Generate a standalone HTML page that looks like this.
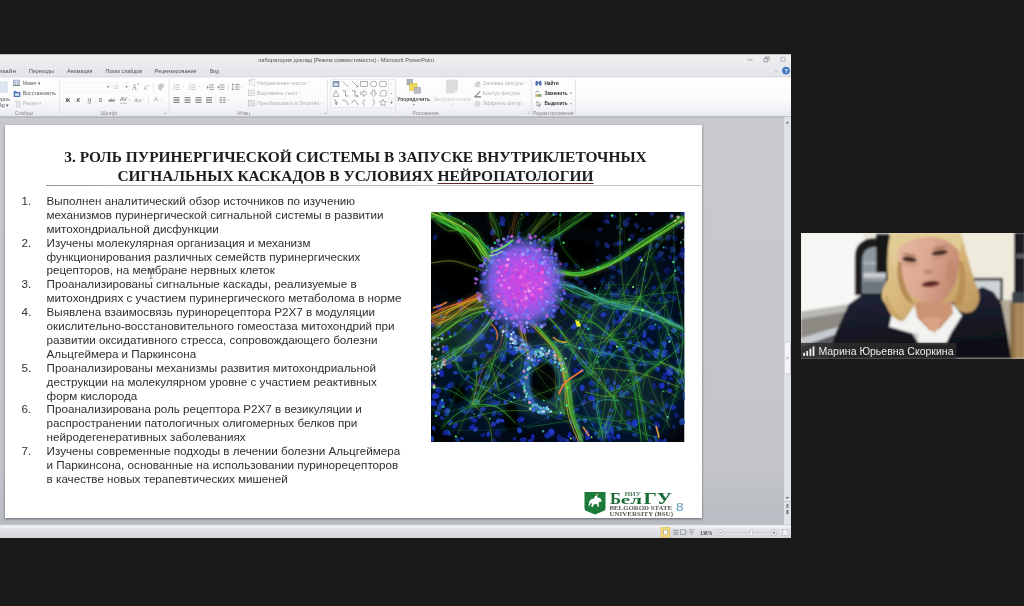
<!DOCTYPE html>
<html lang="ru"><head><meta charset="utf-8"><title>PowerPoint</title>
<style>
*{margin:0;padding:0;box-sizing:border-box}
html,body{width:1024px;height:606px;overflow:hidden;background:#1a1a1a;font-family:"Liberation Sans",sans-serif}
.abs{position:absolute}
#win{left:0;top:54px;width:791px;height:484px;background:#c4c6cc;overflow:hidden}
#work{left:0;top:71px;width:784px;height:401px;background:linear-gradient(#c8cad0,#c3c5cb 85%,#b9bcc2)}
#vscroll{left:784px;top:63px;width:7px;height:409px;background:#dfe2e8}
#slide{left:5px;top:71px;width:697px;height:392.5px;background:#fff;box-shadow:0 1px 2.5px rgba(70,70,80,.75)}
#title{left:-4.5px;top:23.4px;width:710px;text-align:center;font-family:"Liberation Serif",serif;font-weight:bold;font-size:15.45px;line-height:18.6px;color:#1c1c1c;white-space:nowrap;filter:blur(.3px)}
#title u{text-decoration-thickness:1px;text-underline-offset:1.5px;text-decoration-color:#5a2a2a}
#rule{left:41px;top:60px;width:656.5px;height:1.2px;background:linear-gradient(90deg,#999,#b5b5b5 30%,#c9c9c9)}
#list{left:15.6px;top:68.9px;font-size:11.67px;line-height:13.91px;color:#303030;white-space:nowrap;filter:blur(.3px)}
#list div{position:relative;padding-left:26px}
#list div b{position:absolute;left:1px;font-weight:normal}
</style></head><body>
<div id="win" class="abs">
<svg class="abs" id="rib" style="left:0;top:0" width="791" height="71" viewBox="0 0 791 71">
<defs><filter id="rb" x="-5%" y="-5%" width="110%" height="110%"><feGaussianBlur stdDeviation="0.35"/></filter><linearGradient id="rg" x1="0" y1="0" x2="0" y2="1"><stop offset="0" stop-color="#fefefe"/><stop offset="0.55" stop-color="#fbfbfc"/><stop offset="0.8" stop-color="#f2f3f6"/><stop offset="1" stop-color="#e5e7ec"/></linearGradient><linearGradient id="tg" x1="0" y1="0" x2="0" y2="1"><stop offset="0" stop-color="#8a8a8c"/><stop offset="0.04" stop-color="#eeeff1"/><stop offset="0.45" stop-color="#eaebed"/><stop offset="1" stop-color="#e3e4e8"/></linearGradient></defs>
<rect x="0" y="0" width="791" height="23" fill="url(#tg)"/>
<rect x="0" y="22.8" width="791" height="40" fill="url(#rg)"/>
<rect x="0" y="22.5" width="791" height="0.8" fill="#d0d2d7"/>
<rect x="0" y="62.4" width="791" height="1.4" fill="#acafb7"/>
<rect x="0" y="63.8" width="791" height="7.2" fill="#c8cad0"/>
<g filter="url(#rb)">
<text x="258.0" y="7.6" textLength="176.0" lengthAdjust="spacingAndGlyphs" font-size="5.2" fill="#555" font-weight="normal" font-style="normal" font-family="Liberation Sans, sans-serif" opacity="1">лаборатория доклад [Режим совместимости] - Microsoft PowerPoint</text>
<text x="-6.0" y="18.6" textLength="22.0" lengthAdjust="spacingAndGlyphs" font-size="5.4" fill="#505050" font-weight="normal" font-style="normal" font-family="Liberation Sans, sans-serif" opacity="1">Дизайн</text>
<text x="29.0" y="18.6" textLength="25.0" lengthAdjust="spacingAndGlyphs" font-size="5.4" fill="#505050" font-weight="normal" font-style="normal" font-family="Liberation Sans, sans-serif" opacity="1">Переходы</text>
<text x="67.0" y="18.6" textLength="25.5" lengthAdjust="spacingAndGlyphs" font-size="5.4" fill="#505050" font-weight="normal" font-style="normal" font-family="Liberation Sans, sans-serif" opacity="1">Анимация</text>
<text x="105.5" y="18.6" textLength="36.5" lengthAdjust="spacingAndGlyphs" font-size="5.4" fill="#505050" font-weight="normal" font-style="normal" font-family="Liberation Sans, sans-serif" opacity="1">Показ слайдов</text>
<text x="154.5" y="18.6" textLength="42.0" lengthAdjust="spacingAndGlyphs" font-size="5.4" fill="#505050" font-weight="normal" font-style="normal" font-family="Liberation Sans, sans-serif" opacity="1">Рецензирование</text>
<text x="210.0" y="18.6" textLength="9.0" lengthAdjust="spacingAndGlyphs" font-size="5.4" fill="#505050" font-weight="normal" font-style="normal" font-family="Liberation Sans, sans-serif" opacity="1">Вид</text>
<rect x="-2" y="28" width="9" height="10" fill="#dfe7f2" stroke="#b9c4d6" stroke-width="0.6"/>
<text x="-6.0" y="46.9" textLength="16.0" lengthAdjust="spacingAndGlyphs" font-size="5.4" fill="#555" font-weight="normal" font-style="normal" font-family="Liberation Sans, sans-serif" opacity="1">оздать</text>
<text x="-4.0" y="52.8" textLength="13.0" lengthAdjust="spacingAndGlyphs" font-size="5.4" fill="#555" font-weight="normal" font-style="normal" font-family="Liberation Sans, sans-serif" opacity="1">айд ▾</text>
<rect x="13.3" y="26" width="6.4" height="5.2" fill="#bcc7d8" stroke="#93a2ba" stroke-width="0.5"/><rect x="16.2" y="26.6" width="0.6" height="4" fill="#eef1f6"/><rect x="13" y="31.2" width="7" height="0.7" fill="#5a6068"/>
<path d="M13.7 37h2.4l.8 1h3.4v5h-6.600z" fill="#4f78b4"/><rect x="15" y="39.4" width="4" height="2.400" fill="#dfe8f4"/>
<rect x="16.4" y="47.2" width="3.900" height="6" fill="#e6e6e8" stroke="#cfcfd2" stroke-width="0.5"/><rect x="14.5" y="46.500" width="3" height="1.200" fill="#d9d9dc"/>
<text x="22.7" y="30.8" textLength="18.3" lengthAdjust="spacingAndGlyphs" font-size="5.4" fill="#5c5c5c" font-weight="normal" font-style="normal" font-family="Liberation Sans, sans-serif" opacity="1">Макет ▾</text>
<text x="22.7" y="41.2" textLength="33.3" lengthAdjust="spacingAndGlyphs" font-size="5.4" fill="#5c5c5c" font-weight="normal" font-style="normal" font-family="Liberation Sans, sans-serif" opacity="1">Восстановить</text>
<text x="22.7" y="51.3" textLength="19.3" lengthAdjust="spacingAndGlyphs" font-size="5.4" fill="#b5b5b5" font-weight="normal" font-style="normal" font-family="Liberation Sans, sans-serif" opacity="1">Раздел ▾</text>
<text x="14.8" y="60.6" textLength="18.4" lengthAdjust="spacingAndGlyphs" font-size="5.2" fill="#8a8a8a" font-weight="normal" font-style="normal" font-family="Liberation Sans, sans-serif" opacity="1">Слайды</text>
<text x="100.8" y="60.6" textLength="17.2" lengthAdjust="spacingAndGlyphs" font-size="5.2" fill="#8a8a8a" font-weight="normal" font-style="normal" font-family="Liberation Sans, sans-serif" opacity="1">Шрифт</text>
<text x="237.0" y="60.6" textLength="13.0" lengthAdjust="spacingAndGlyphs" font-size="5.2" fill="#8a8a8a" font-weight="normal" font-style="normal" font-family="Liberation Sans, sans-serif" opacity="1">Абзац</text>
<text x="412.5" y="60.6" textLength="26.5" lengthAdjust="spacingAndGlyphs" font-size="5.2" fill="#8a8a8a" font-weight="normal" font-style="normal" font-family="Liberation Sans, sans-serif" opacity="1">Рисование</text>
<text x="532.8" y="60.6" textLength="41.0" lengthAdjust="spacingAndGlyphs" font-size="5.2" fill="#8a8a8a" font-weight="normal" font-style="normal" font-family="Liberation Sans, sans-serif" opacity="1">Редактирование</text>
<rect x="59.4" y="25" width="0.7" height="35" fill="#d9dbe0"/>
<rect x="168.7" y="25" width="0.7" height="35" fill="#d9dbe0"/>
<rect x="327.3" y="25" width="0.7" height="35" fill="#d9dbe0"/>
<rect x="395.5" y="25" width="0.7" height="35" fill="#d9dbe0"/>
<rect x="530.9" y="25" width="0.7" height="35" fill="#d9dbe0"/>
<rect x="575" y="25" width="0.7" height="35" fill="#d9dbe0"/>
<rect x="64" y="28.5" width="47" height="9" fill="#fcfcfd" stroke="#ecedf0" stroke-width="0.6"/>
<rect x="112" y="28.5" width="17" height="9" fill="#fcfcfd" stroke="#ecedf0" stroke-width="0.6"/>
<path d="M107 32.3h2.4l-1.2 1.6z M125.3 32.3h2.4l-1.2 1.6z" fill="#666"/>
<text x="113.5" y="34.8" textLength="5.0" lengthAdjust="spacingAndGlyphs" font-size="5.2" fill="#c4c4c4" font-weight="normal" font-style="normal" font-family="Liberation Sans, sans-serif" opacity="1">18</text>
<text x="132.0" y="36.2" textLength="5.0" lengthAdjust="spacingAndGlyphs" font-size="7.2" fill="#8a8a8a" font-weight="normal" font-style="normal" font-family="Liberation Serif, sans-serif" opacity="1">A</text>
<text x="143.5" y="36.3" textLength="3.5" lengthAdjust="spacingAndGlyphs" font-size="5.8" fill="#9a9a9a" font-weight="normal" font-style="normal" font-family="Liberation Serif, sans-serif" opacity="1">A</text>
<path d="M137.3 30.3l1-1.3 1 1.3z M147.2 31.5l0.9 1.1 0.9-1.1z" fill="#777"/>
<rect x="153" y="29" width="0.6" height="8" fill="#dcdde2"/>
<path d="M158 31l4-2 2.5 3-3.5 4-3-2z" fill="#c9c9cc"/><path d="M158.5 34.5l3 2" stroke="#b0b0b4" stroke-width="1"/>
<text x="65.5" y="47.7" textLength="4.5" lengthAdjust="spacingAndGlyphs" font-size="5.8" fill="#444" font-weight="bold" font-style="normal" font-family="Liberation Sans, sans-serif" opacity="1">Ж</text>
<text x="76.5" y="47.7" textLength="3.5" lengthAdjust="spacingAndGlyphs" font-size="5.8" fill="#555" font-weight="bold" font-style="italic" font-family="Liberation Sans, sans-serif" opacity="1">К</text>
<text x="87.5" y="47.7" textLength="3.5" lengthAdjust="spacingAndGlyphs" font-size="5.8" fill="#555" font-weight="normal" font-style="normal" font-family="Liberation Sans, sans-serif" opacity="1">Ч</text><rect x="87.5" y="48.6" width="3.6" height="0.6" fill="#666"/>
<text x="99.0" y="47.7" textLength="3.0" lengthAdjust="spacingAndGlyphs" font-size="5.8" fill="#666" font-weight="bold" font-style="normal" font-family="Liberation Sans, sans-serif" opacity="1">S</text>
<text x="108.5" y="47.7" textLength="6.5" lengthAdjust="spacingAndGlyphs" font-size="4.8" fill="#666" font-weight="normal" font-style="normal" font-family="Liberation Sans, sans-serif" opacity="1">abc</text><rect x="108.3" y="46.3" width="7" height="0.5" fill="#777"/>
<text x="120.0" y="47.2" textLength="7.0" lengthAdjust="spacingAndGlyphs" font-size="5.2" fill="#666" font-weight="normal" font-style="normal" font-family="Liberation Sans, sans-serif" opacity="1">AV</text><path d="M120 49.3h7" stroke="#888" stroke-width="0.5"/><path d="M128.2 45.8h1.6l-.8 1z" fill="#999"/>
<text x="134.0" y="47.7" textLength="7.0" lengthAdjust="spacingAndGlyphs" font-size="5.8" fill="#888" font-weight="normal" font-style="normal" font-family="Liberation Serif, sans-serif" opacity="1">Aa</text><path d="M141.8 45.8h1.6l-.8 1z" fill="#999"/>
<rect x="148.3" y="41" width="0.6" height="8" fill="#dcdde2"/>
<text x="153.3" y="47.4" textLength="5.2" lengthAdjust="spacingAndGlyphs" font-size="7" fill="#9a9a9a" font-weight="normal" font-style="normal" font-family="Liberation Serif, sans-serif" opacity="1">A</text><path d="M161.5 45.8h1.6l-.8 1z" fill="#aaa"/>
<path d="M164 59.5h2v-2" stroke="#aaa" stroke-width="0.5" fill="none"/><path d="M324 59.5h2v-2" stroke="#aaa" stroke-width="0.5" fill="none"/><path d="M527 59.5h2v-2" stroke="#aaa" stroke-width="0.5" fill="none"/>
<rect x="175.5" y="30.5" width="4.5" height="0.8" fill="#b9b9bd"/><rect x="173.5" y="30.3" width="1.1" height="1.1" fill="#b9b9bd"/><rect x="175.5" y="32.7" width="4.5" height="0.8" fill="#b9b9bd"/><rect x="173.5" y="32.5" width="1.1" height="1.1" fill="#b9b9bd"/><rect x="175.5" y="34.9" width="4.5" height="0.8" fill="#b9b9bd"/><rect x="173.5" y="34.699999999999996" width="1.1" height="1.1" fill="#b9b9bd"/><path d="M182.5 32.6h1.6l-.8 1z" fill="#bbb"/>
<rect x="191" y="30.5" width="4.5" height="0.8" fill="#b9b9bd"/><rect x="189" y="30.3" width="1.1" height="1.1" fill="#b9b9bd"/><rect x="191" y="32.7" width="4.5" height="0.8" fill="#b9b9bd"/><rect x="189" y="32.5" width="1.1" height="1.1" fill="#b9b9bd"/><rect x="191" y="34.9" width="4.5" height="0.8" fill="#b9b9bd"/><rect x="189" y="34.699999999999996" width="1.1" height="1.1" fill="#b9b9bd"/><path d="M198 32.6h1.6l-.8 1z" fill="#bbb"/>
<rect x="209" y="30.5" width="5" height="0.8" fill="#8d8d92"/><rect x="209" y="32.7" width="5" height="0.8" fill="#8d8d92"/><rect x="209" y="34.9" width="5" height="0.8" fill="#8d8d92"/><path d="M207 31.5v3.5l1.8-1.7z" fill="#8d8d92"/>
<rect x="219.5" y="30.5" width="5" height="0.8" fill="#8d8d92"/><rect x="219.5" y="32.7" width="5" height="0.8" fill="#8d8d92"/><rect x="219.5" y="34.9" width="5" height="0.8" fill="#8d8d92"/><path d="M219 31.5v3.5l-1.8-1.7z" fill="#8d8d92"/>
<rect x="228" y="29" width="0.6" height="8" fill="#dcdde2"/>
<rect x="235" y="30.2" width="4.5" height="0.8" fill="#77777c"/><rect x="235" y="32.5" width="4.5" height="0.8" fill="#77777c"/><rect x="235" y="34.8" width="4.5" height="0.8" fill="#77777c"/><path d="M232.8 29.8v6.2M231.8 31l1-1.3 1 1.3M231.8 34.8l1 1.3 1-1.3" stroke="#77777c" stroke-width="0.6" fill="none"/><path d="M241 32.6h1.6l-.8 1z" fill="#999"/>
<rect x="173.5" y="43.2" width="6" height="0.8" fill="#6b6b70"/><rect x="173.5" y="44.800000000000004" width="6" height="0.8" fill="#6b6b70"/><rect x="173.5" y="46.400000000000006" width="6" height="0.8" fill="#6b6b70"/><rect x="173.5" y="48.0" width="6" height="0.8" fill="#6b6b70"/>
<rect x="184.5" y="43.2" width="6" height="0.8" fill="#77777c"/><rect x="184.5" y="44.800000000000004" width="6" height="0.8" fill="#77777c"/><rect x="184.5" y="46.400000000000006" width="6" height="0.8" fill="#77777c"/><rect x="184.5" y="48.0" width="6" height="0.8" fill="#77777c"/>
<rect x="195.5" y="43.2" width="6" height="0.8" fill="#77777c"/><rect x="195.5" y="44.800000000000004" width="6" height="0.8" fill="#77777c"/><rect x="195.5" y="46.400000000000006" width="6" height="0.8" fill="#77777c"/><rect x="195.5" y="48.0" width="6" height="0.8" fill="#77777c"/>
<rect x="206" y="43.2" width="6" height="0.8" fill="#77777c"/><rect x="206" y="44.800000000000004" width="6" height="0.8" fill="#77777c"/><rect x="206" y="46.400000000000006" width="6" height="0.8" fill="#77777c"/><rect x="206" y="48.0" width="6" height="0.8" fill="#77777c"/>
<rect x="215.5" y="41" width="0.6" height="8" fill="#dcdde2"/>
<rect x="219.5" y="43.2" width="2.6" height="0.8" fill="#8a8a8f"/><rect x="219.5" y="44.800000000000004" width="2.6" height="0.8" fill="#8a8a8f"/><rect x="219.5" y="46.400000000000006" width="2.6" height="0.8" fill="#8a8a8f"/><rect x="219.5" y="48.0" width="2.6" height="0.8" fill="#8a8a8f"/><rect x="223" y="43.2" width="2.6" height="0.8" fill="#8a8a8f"/><rect x="223" y="44.800000000000004" width="2.6" height="0.8" fill="#8a8a8f"/><rect x="223" y="46.400000000000006" width="2.6" height="0.8" fill="#8a8a8f"/><rect x="223" y="48.0" width="2.6" height="0.8" fill="#8a8a8f"/><path d="M227.5 45.8h1.6l-.8 1z" fill="#999"/>
<path d="M249.5 26.5v5M248 27l1.5-1.6 1.5 1.6" stroke="#c5c5c9" stroke-width="0.7" fill="none"/><rect x="251.8" y="25.5" width="3" height="6" fill="none" stroke="#c5c5c9" stroke-width="0.6"/>
<rect x="248.5" y="36" width="6" height="5.5" fill="none" stroke="#b5b5ba" stroke-width="0.6"/><rect x="249.7" y="37.6" width="3.6" height="0.6" fill="#b5b5ba"/><rect x="249.7" y="39.2" width="3.6" height="0.6" fill="#b5b5ba"/>
<rect x="248.5" y="46.5" width="6" height="5.5" fill="#e3e6e9" stroke="#b9bcc2" stroke-width="0.6"/>
<text x="257.0" y="30.7" textLength="49.0" lengthAdjust="spacingAndGlyphs" font-size="5.3" fill="#b2b2b2" font-weight="normal" font-style="normal" font-family="Liberation Sans, sans-serif" opacity="1">Направление текста</text><path d="M307.5 28h1.6l-.8 1z" fill="#c5c5c5"/>
<text x="257.0" y="40.9" textLength="41.0" lengthAdjust="spacingAndGlyphs" font-size="5.3" fill="#b2b2b2" font-weight="normal" font-style="normal" font-family="Liberation Sans, sans-serif" opacity="1">Выровнять текст</text><path d="M299.5 38.5h1.6l-.8 1z" fill="#c5c5c5"/>
<text x="257.0" y="51.2" textLength="62.5" lengthAdjust="spacingAndGlyphs" font-size="5.3" fill="#b2b2b2" font-weight="normal" font-style="normal" font-family="Liberation Sans, sans-serif" opacity="1">Преобразовать в SmartArt</text><path d="M321 49h1.6l-.8 1z" fill="#c5c5c5"/>
<rect x="331" y="25.4" width="64" height="28" fill="#fcfcfd" stroke="#dfe1e6" stroke-width="0.7"/>
<rect x="388" y="25.8" width="0.6" height="27.4" fill="#e3e5e9"/><rect x="388" y="34.7" width="7" height="0.6" fill="#e3e5e9"/><rect x="388" y="44" width="7" height="0.6" fill="#e3e5e9"/>
<rect x="333" y="27.2" width="6" height="5.6" fill="#8aa2c4" stroke="#5f7898" stroke-width="0.5"/><rect x="334" y="29.5" width="4" height="2" fill="#eef2f7"/>
<path d="M342.5 27l6 6" stroke="#808088" stroke-width="0.6"/>
<path d="M352 27l6 6m0-2v2h-2" stroke="#808088" stroke-width="0.6" fill="none"/>
<rect x="360.7" y="27.4" width="6.6" height="5.2" fill="none" stroke="#808088" stroke-width="0.6"/>
<ellipse cx="373.6" cy="30" rx="3.2" ry="2.7" fill="none" stroke="#808088" stroke-width="0.6"/>
<rect x="379.6" y="27.4" width="6.8" height="5.2" rx="1.4" fill="none" stroke="#808088" stroke-width="0.6"/>
<path d="M336 36.4l3 6h-6z" fill="none" stroke="#808088" stroke-width="0.6"/>
<path d="M342.5 36.8h3v5.2h3" fill="none" stroke="#808088" stroke-width="0.7"/>
<path d="M352 36.8h3v5.2h3m-1.3-1.3l1.3 1.3-1.3 1.3" fill="none" stroke="#808088" stroke-width="0.7"/>
<path d="M360.7 38.199999999999996h3v-1.8l3.4 3-3.4 3v-1.8h-3z" fill="none" stroke="#808088" stroke-width="0.6"/>
<path d="M372.3 36.199999999999996h2.6v3h1.8l-3.1 3.4-3.1-3.4h1.8z" fill="none" stroke="#808088" stroke-width="0.6"/>
<path d="M379.8 42.0l1.2-4.6 2-1h2l1.2 1 0 4.6z" fill="none" stroke="#8c8c92" stroke-width="0.6"/>
<path d="M334 45.7q2.6 0 2.4 3.6m-1.3-1l1.3 2.6 1.1-2.6" fill="none" stroke="#808088" stroke-width="0.8"/>
<path d="M342.3 45.9q5 0.6 6.2 5.4" fill="none" stroke="#808088" stroke-width="0.7"/>
<path d="M351.6 49.3q1.6-3.6 3-3.2t3.6 5" fill="none" stroke="#808088" stroke-width="0.7"/>
<path d="M365.2 45.3q-1.4 0-1.4 1.4t-1.3 1.8q1.3 0.4 1.3 1.8t1.4 1.4" fill="none" stroke="#808088" stroke-width="0.6"/>
<path d="M372.40000000000003 45.3q1.4 0 1.4 1.4t1.3 1.8q-1.3 0.4-1.3 1.8t-1.4 1.4" fill="none" stroke="#808088" stroke-width="0.6"/>
<path d="M383 45.2l1 2.3 2.5 0.2-1.9 1.6 0.6 2.5-2.2-1.4-2.2 1.4 0.6-2.5-1.9-1.6 2.5-0.2z" fill="none" stroke="#808088" stroke-width="0.6"/>
<path d="M390.7 30.6h1.6l-.8-1z" fill="#c8c8cc"/><path d="M390.7 39.2h1.6l-.8 1z" fill="#666"/><path d="M390.4 47h2.2M390.7 48.6h1.6l-.8 1z" stroke="#666" stroke-width="0.5" fill="#666"/>
<rect x="407" y="25.5" width="5.6" height="5.4" fill="#a9b3c0" stroke="#7d8797" stroke-width="0.5"/><rect x="409.6" y="29.4" width="7.4" height="7" fill="#ecd95a" stroke="#c7b33e" stroke-width="0.5"/><rect x="414.5" y="33.6" width="6" height="5.6" fill="#b9bcc2" stroke="#8f939b" stroke-width="0.5"/>
<text x="397.3" y="46.9" textLength="32.7" lengthAdjust="spacingAndGlyphs" font-size="5.5" fill="#4c4c4c" font-weight="bold" font-style="normal" font-family="Liberation Sans, sans-serif" opacity="1">Упорядочить</text>
<path d="M412.9 50.3h1.8l-.9 1.1z" fill="#555"/>
<path d="M446 27q0-1.5 1.5-1.5h9q1.5 0 1.5 1.5v9.5l-3.5 3h-7q-1.5 0-1.5-1.5z" fill="#dddde0"/><path d="M454.5 39.5v-3h3.5" fill="#ececee"/>
<text x="433.3" y="46.9" textLength="37.5" lengthAdjust="spacingAndGlyphs" font-size="5.4" fill="#c6c6c6" font-weight="normal" font-style="normal" font-family="Liberation Sans, sans-serif" opacity="1">Экспресс-стили</text>
<path d="M451.2 50.3h1.8l-.9 1.1z" fill="#ccc"/>
<path d="M475 30.5l3-3.5 2.6 2.6-3 3.4z" fill="#d2d2d6" stroke="#bdbdc2" stroke-width="0.5"/><rect x="474.3" y="32" width="6.4" height="1.2" fill="#d5d5d9"/>
<path d="M475 41.5l4.8-4.5 0.9 0.9-4.6 4.6z" fill="#9a9aa0"/><rect x="474.3" y="42.2" width="6.6" height="1.3" fill="#77777c"/>
<rect x="475" y="47.5" width="5" height="4.5" rx="1.2" fill="#dcdce0" stroke="#c6c6cb" stroke-width="0.5"/>
<text x="482.7" y="30.5" textLength="40.6" lengthAdjust="spacingAndGlyphs" font-size="5.3" fill="#b2b2b2" font-weight="normal" font-style="normal" font-family="Liberation Sans, sans-serif" opacity="1">Заливка фигуры</text><path d="M524.8 28.6h1.6l-.8 1z" fill="#c5c5c5"/>
<text x="482.7" y="40.7" textLength="37.3" lengthAdjust="spacingAndGlyphs" font-size="5.3" fill="#b2b2b2" font-weight="normal" font-style="normal" font-family="Liberation Sans, sans-serif" opacity="1">Контур фигуры</text><path d="M522.2 38.8h1.6l-.8 1z" fill="#c5c5c5"/>
<text x="482.7" y="51.3" textLength="39.3" lengthAdjust="spacingAndGlyphs" font-size="5.3" fill="#b2b2b2" font-weight="normal" font-style="normal" font-family="Liberation Sans, sans-serif" opacity="1">Эффекты фигур</text><path d="M524.8 49.4h1.6l-.8 1z" fill="#c5c5c5"/>
<path d="M535.5 31.5v-3.5q0-1.2 1.2-1.2t1.2 1.2v3.5z M539.1 31.5v-3.5q0-1.2 1.2-1.2t1.2 1.2v3.5z" fill="#4f6fae"/><rect x="537.6" y="28.2" width="1.8" height="1.3" fill="#3d5a92"/>
<path d="M535.5 38.5q2-2.5 4-0.5" stroke="#777" stroke-width="0.7" fill="none"/><rect x="537.5" y="40" width="4" height="2.8" fill="#8fae7a"/><rect x="535.3" y="40.5" width="2.6" height="2.2" fill="#c9a24e"/>
<path d="M537 47.2v5l1.3-1.2 1 2 0.8-0.4-1-2 1.7-0.2z" fill="#fff" stroke="#555" stroke-width="0.5"/>
<text x="544.4" y="30.6" textLength="14.4" lengthAdjust="spacingAndGlyphs" font-size="5.5" fill="#333" font-weight="bold" font-style="normal" font-family="Liberation Sans, sans-serif" opacity="1">Найти</text>
<text x="544.4" y="40.7" textLength="23.1" lengthAdjust="spacingAndGlyphs" font-size="5.5" fill="#333" font-weight="bold" font-style="normal" font-family="Liberation Sans, sans-serif" opacity="1">Заменить</text><path d="M570 38.8h1.8l-.9 1.1z" fill="#444"/>
<text x="544.4" y="51.4" textLength="23.1" lengthAdjust="spacingAndGlyphs" font-size="5.5" fill="#333" font-weight="bold" font-style="normal" font-family="Liberation Sans, sans-serif" opacity="1">Выделить</text><path d="M570 49.4h1.8l-.9 1.1z" fill="#444"/>
<rect x="747.5" y="5" width="5" height="1.6" fill="#b9bbc0"/>
<rect x="765.5" y="3" width="3.6" height="3.2" fill="none" stroke="#8e9096" stroke-width="0.8"/><rect x="764" y="4.6" width="3.6" height="3.2" fill="#ebecee" stroke="#8e9096" stroke-width="0.8"/>
<rect x="781" y="3.2" width="4" height="4" fill="none" stroke="#a9abb0" stroke-width="0.8"/>
<path d="M774.3 18l1.8-2 1.8 2z" fill="none" stroke="#b9bbc0" stroke-width="0.6"/>
<circle cx="786" cy="16.6" r="3.6" fill="#3f78c8" stroke="#2d5ea6" stroke-width="0.5"/>
<text x="784.6" y="18.7" font-size="5.6" font-weight="bold" fill="#fff" font-family="Liberation Sans, sans-serif">?</text>
</g></svg>

 <div id="work" class="abs"></div>
 <div id="vscroll" class="abs"></div>
 <div id="slide" class="abs">
  <div id="title" class="abs">3. РОЛЬ ПУРИНЕРГИЧЕСКОЙ СИСТЕМЫ В ЗАПУСКЕ ВНУТРИКЛЕТОЧНЫХ<br>СИГНАЛЬНЫХ КАСКАДОВ В УСЛОВИЯХ <u>НЕЙРОПАТОЛОГИИ</u></div>
  <div id="rule" class="abs"></div>
  <div id="list" class="abs">
   <div><b>1.</b>Выполнен аналитический обзор источников по изучению<br>механизмов пуринергической сигнальной системы в развитии<br>митохондриальной дисфункции</div>
   <div><b>2.</b>Изучены молекулярная организация и механизм<br>функционирования различных семейств пуринергических<br>рецепторов, на мембране нервных клеток</div>
   <div><b>3.</b>Проанализированы сигнальные каскады, реализуемые в<br>митохондриях с участием пуринергического метаболома в норме</div>
   <div><b>4.</b>Выявлена взаимосвязь пуринорецептора P2X7 в модуляции<br>окислительно-восстановительного гомеостаза митохондрий при<br>развитии оксидативного стресса, сопровождающего болезни<br>Альцгеймера и Паркинсона</div>
   <div><b>5.</b>Проанализированы механизмы развития митохондриальной<br>деструкции на молекулярном уровне с участием реактивных<br>форм кислорода</div>
   <div><b>6.</b>Проанализирована роль рецептора P2X7 в везикуляции и<br>распространении патологичных олигомерных белков при<br>нейродегенеративных заболеваниях</div>
   <div><b>7.</b>Изучены современные подходы в лечении болезни Альцгеймера<br>и Паркинсона, основанные на использовании пуринорецепторов<br>в качестве новых терапевтических мишеней</div>
  </div>
  <svg class="abs" style="left:142px;top:143px" width="8" height="12" viewBox="0 0 8 12"><path d="M2.4 1h1.2l.4.5.4-.5h1.2M4 1.5v8.5M2.4 10.500h1.2l.4-.5.4.5h1.200" stroke="#555" stroke-width="0.8" fill="none" opacity=".85"/></svg>
<svg class="abs" style="left:426px;top:87px" width="253.5" height="230" viewBox="0 0 253.5 230">
<defs><clipPath id="nc"><rect x="0" y="0" width="253.5" height="230"/></clipPath>
<filter id="nb1" x="-10%" y="-10%" width="120%" height="120%"><feGaussianBlur stdDeviation="0.7"/></filter>
<filter id="nb2" x="-10%" y="-10%" width="120%" height="120%"><feGaussianBlur stdDeviation="1.1"/></filter>
<filter id="nbg" x="-10%" y="-10%" width="120%" height="120%"><feGaussianBlur in="SourceGraphic" stdDeviation="2.2" result="g"/><feComponentTransfer in="g" result="g2"><feFuncA type="linear" slope="0.75"/></feComponentTransfer><feGaussianBlur in="SourceGraphic" stdDeviation="0.6" result="s"/><feMerge><feMergeNode in="g2"/><feMergeNode in="s"/></feMerge></filter>
<filter id="nb3" x="-20%" y="-20%" width="140%" height="140%"><feGaussianBlur stdDeviation="7"/></filter>
<radialGradient id="blob" cx="0.52" cy="0.5" r="0.5"><stop offset="0" stop-color="#d048e0"/><stop offset="0.45" stop-color="#b850e8"/><stop offset="0.7" stop-color="#8860e8" stop-opacity="0.95"/><stop offset="0.86" stop-color="#5868d8" stop-opacity="0.6"/><stop offset="1" stop-color="#4050c0" stop-opacity="0"/></radialGradient>
</defs>
<g clip-path="url(#nc)">
<rect width="253.5" height="230" fill="#020508"/>
<g filter="url(#nb3)"><ellipse cx="195" cy="160" rx="70" ry="80" fill="#0c2878" opacity="0.3"/><ellipse cx="55" cy="175" rx="60" ry="55" fill="#0c2c70" opacity="0.28"/><ellipse cx="215" cy="75" rx="45" ry="40" fill="#0a2268" opacity="0.22"/><ellipse cx="135" cy="115" rx="50" ry="35" fill="#144068" opacity="0.3"/><ellipse cx="20" cy="125" rx="30" ry="30" fill="#205030" opacity="0.45"/><ellipse cx="140" cy="215" rx="40" ry="20" fill="#0c2878" opacity="0.22"/><ellipse cx="112" cy="168" rx="28" ry="36" fill="#3070b0" opacity="0.4"/><ellipse cx="60" cy="120" rx="30" ry="25" fill="#305090" opacity="0.35"/><ellipse cx="190" cy="185" rx="40" ry="30" fill="#104838" opacity="0.3"/></g>
<g filter="url(#nb2)"><ellipse cx="26" cy="50" rx="25.5" ry="34.0" fill="#010204" opacity="0.9"/><ellipse cx="146" cy="40" rx="18.7" ry="11.9" fill="#010204" opacity="0.9"/><ellipse cx="113" cy="170" rx="12.8" ry="19.6" fill="#010204" opacity="0.9"/><ellipse cx="80" cy="206" rx="7.6" ry="14.4" fill="#010204" opacity="0.9"/><ellipse cx="27" cy="182" rx="7.6" ry="8.5" fill="#010204" opacity="0.9"/><ellipse cx="118" cy="10" rx="18.7" ry="7.6" fill="#010204" opacity="0.9"/><ellipse cx="160" cy="12" rx="10.2" ry="6.0" fill="#010204" opacity="0.9"/></g>
<g filter="url(#nb1)"><ellipse cx="135.8" cy="84.1" rx="2.1" ry="1.5" transform="rotate(91 135.8 84.1)" fill="#2034d8" opacity="0.29"/><ellipse cx="61.0" cy="126.7" rx="2.1" ry="1.6" transform="rotate(102 61.0 126.7)" fill="#1828c0" opacity="0.70"/><ellipse cx="15.7" cy="134.7" rx="2.1" ry="1.4" transform="rotate(40 15.7 134.7)" fill="#3050f0" opacity="0.79"/><ellipse cx="78.2" cy="187.7" rx="2.3" ry="1.5" transform="rotate(105 78.2 187.7)" fill="#1c3cc8" opacity="0.53"/><ellipse cx="180.5" cy="129.8" rx="3.1" ry="2.1" transform="rotate(89 180.5 129.8)" fill="#3050f0" opacity="0.62"/><ellipse cx="148.4" cy="104.2" rx="2.5" ry="1.6" transform="rotate(143 148.4 104.2)" fill="#1c3cc8" opacity="0.76"/><ellipse cx="76.1" cy="113.9" rx="2.6" ry="1.6" transform="rotate(81 76.1 113.9)" fill="#3050f0" opacity="0.84"/><ellipse cx="38.5" cy="112.5" rx="2.1" ry="1.7" transform="rotate(120 38.5 112.5)" fill="#2048b0" opacity="0.67"/><ellipse cx="207.5" cy="78.2" rx="2.6" ry="2.2" transform="rotate(89 207.5 78.2)" fill="#2048b0" opacity="0.38"/><ellipse cx="239.5" cy="109.0" rx="3.1" ry="2.4" transform="rotate(11 239.5 109.0)" fill="#1c3cc8" opacity="0.57"/><ellipse cx="172.7" cy="102.5" rx="3.2" ry="2.4" transform="rotate(160 172.7 102.5)" fill="#2840e0" opacity="0.46"/><ellipse cx="14.9" cy="176.7" rx="2.2" ry="1.7" transform="rotate(45 14.9 176.7)" fill="#1c30b8" opacity="0.82"/><ellipse cx="179.1" cy="226.9" rx="3.2" ry="2.1" transform="rotate(68 179.1 226.9)" fill="#1828c0" opacity="0.51"/><ellipse cx="149.3" cy="60.4" rx="2.0" ry="1.4" transform="rotate(75 149.3 60.4)" fill="#2840e0" opacity="0.42"/><ellipse cx="31.8" cy="197.6" rx="3.6" ry="3.1" transform="rotate(118 31.8 197.6)" fill="#1c3cc8" opacity="0.47"/><ellipse cx="197.7" cy="201.1" rx="3.4" ry="2.5" transform="rotate(71 197.7 201.1)" fill="#1c30b8" opacity="0.61"/><ellipse cx="249.6" cy="101.3" rx="2.2" ry="1.4" transform="rotate(108 249.6 101.3)" fill="#2034d8" opacity="0.45"/><ellipse cx="6.5" cy="201.1" rx="3.0" ry="2.4" transform="rotate(27 6.5 201.1)" fill="#2840e0" opacity="0.83"/><ellipse cx="120.2" cy="26.5" rx="2.8" ry="1.8" transform="rotate(176 120.2 26.5)" fill="#1c30b8" opacity="0.64"/><ellipse cx="67.1" cy="190.6" rx="2.3" ry="1.8" transform="rotate(4 67.1 190.6)" fill="#3050f0" opacity="0.59"/><ellipse cx="231.7" cy="174.4" rx="2.5" ry="1.7" transform="rotate(116 231.7 174.4)" fill="#2034d8" opacity="0.73"/><ellipse cx="195.7" cy="122.5" rx="3.3" ry="2.8" transform="rotate(59 195.7 122.5)" fill="#1828c0" opacity="0.70"/><ellipse cx="192.2" cy="44.9" rx="2.4" ry="1.8" transform="rotate(72 192.2 44.9)" fill="#2048b0" opacity="0.32"/><ellipse cx="175.6" cy="220.0" rx="2.8" ry="2.0" transform="rotate(169 175.6 220.0)" fill="#2840e0" opacity="0.83"/><ellipse cx="51.8" cy="143.5" rx="3.5" ry="2.5" transform="rotate(151 51.8 143.5)" fill="#1c30b8" opacity="0.81"/><ellipse cx="163.0" cy="192.0" rx="2.2" ry="1.6" transform="rotate(70 163.0 192.0)" fill="#1c3cc8" opacity="0.75"/><ellipse cx="45.3" cy="181.5" rx="2.6" ry="1.8" transform="rotate(144 45.3 181.5)" fill="#1c3cc8" opacity="0.61"/><ellipse cx="240.0" cy="166.7" rx="2.3" ry="1.7" transform="rotate(23 240.0 166.7)" fill="#1828c0" opacity="0.69"/><ellipse cx="166.3" cy="140.7" rx="3.0" ry="2.3" transform="rotate(85 166.3 140.7)" fill="#2840e0" opacity="0.51"/><ellipse cx="5.4" cy="183.9" rx="3.2" ry="2.4" transform="rotate(18 5.4 183.9)" fill="#1c3cc8" opacity="0.82"/><ellipse cx="221.0" cy="190.0" rx="2.4" ry="2.0" transform="rotate(45 221.0 190.0)" fill="#2840e0" opacity="0.65"/><ellipse cx="82.6" cy="125.2" rx="3.4" ry="2.5" transform="rotate(11 82.6 125.2)" fill="#1c3cc8" opacity="0.59"/><ellipse cx="147.9" cy="208.0" rx="2.7" ry="1.8" transform="rotate(165 147.9 208.0)" fill="#3050f0" opacity="0.50"/><ellipse cx="129.4" cy="200.7" rx="3.3" ry="2.2" transform="rotate(110 129.4 200.7)" fill="#2048b0" opacity="0.77"/><ellipse cx="141.1" cy="75.0" rx="2.9" ry="2.5" transform="rotate(100 141.1 75.0)" fill="#2048b0" opacity="0.46"/><ellipse cx="246.7" cy="139.4" rx="2.3" ry="1.7" transform="rotate(50 246.7 139.4)" fill="#3050f0" opacity="0.66"/><ellipse cx="238.7" cy="160.8" rx="3.5" ry="3.0" transform="rotate(170 238.7 160.8)" fill="#2840e0" opacity="0.82"/><ellipse cx="51.4" cy="102.9" rx="2.7" ry="1.8" transform="rotate(71 51.4 102.9)" fill="#2840e0" opacity="0.48"/><ellipse cx="18.5" cy="154.0" rx="3.3" ry="2.6" transform="rotate(161 18.5 154.0)" fill="#1828c0" opacity="0.83"/><ellipse cx="34.8" cy="107.6" rx="3.3" ry="2.6" transform="rotate(17 34.8 107.6)" fill="#1c30b8" opacity="0.52"/><ellipse cx="56.7" cy="162.5" rx="3.7" ry="2.6" transform="rotate(73 56.7 162.5)" fill="#1c30b8" opacity="0.53"/><ellipse cx="183.1" cy="4.5" rx="2.7" ry="1.9" transform="rotate(3 183.1 4.5)" fill="#2840e0" opacity="0.39"/><ellipse cx="243.6" cy="26.0" rx="3.6" ry="2.4" transform="rotate(41 243.6 26.0)" fill="#2034d8" opacity="0.29"/><ellipse cx="229.6" cy="41.8" rx="3.3" ry="2.8" transform="rotate(148 229.6 41.8)" fill="#2048b0" opacity="0.49"/><ellipse cx="233.0" cy="131.2" rx="3.2" ry="2.1" transform="rotate(16 233.0 131.2)" fill="#2034d8" opacity="0.77"/><ellipse cx="227.0" cy="61.9" rx="2.0" ry="1.7" transform="rotate(16 227.0 61.9)" fill="#2840e0" opacity="0.29"/><ellipse cx="16.9" cy="198.4" rx="2.8" ry="2.4" transform="rotate(61 16.9 198.4)" fill="#3050f0" opacity="0.62"/><ellipse cx="179.9" cy="215.8" rx="3.6" ry="2.5" transform="rotate(47 179.9 215.8)" fill="#1828c0" opacity="0.53"/><ellipse cx="77.3" cy="174.7" rx="2.5" ry="2.1" transform="rotate(90 77.3 174.7)" fill="#1828c0" opacity="0.56"/><ellipse cx="128.2" cy="225.0" rx="2.9" ry="2.4" transform="rotate(44 128.2 225.0)" fill="#1c30b8" opacity="0.49"/><ellipse cx="109.6" cy="113.9" rx="3.4" ry="2.3" transform="rotate(71 109.6 113.9)" fill="#3050f0" opacity="0.57"/><ellipse cx="184.8" cy="32.1" rx="3.7" ry="2.3" transform="rotate(177 184.8 32.1)" fill="#2048b0" opacity="0.30"/><ellipse cx="187.8" cy="58.8" rx="2.3" ry="1.7" transform="rotate(15 187.8 58.8)" fill="#2048b0" opacity="0.36"/><ellipse cx="246.1" cy="137.7" rx="3.2" ry="2.3" transform="rotate(8 246.1 137.7)" fill="#1828c0" opacity="0.51"/><ellipse cx="66.7" cy="221.2" rx="3.7" ry="3.2" transform="rotate(98 66.7 221.2)" fill="#1828c0" opacity="0.46"/><ellipse cx="166.3" cy="57.1" rx="3.3" ry="2.4" transform="rotate(16 166.3 57.1)" fill="#2048b0" opacity="0.29"/><ellipse cx="59.0" cy="134.7" rx="2.9" ry="2.4" transform="rotate(135 59.0 134.7)" fill="#1c3cc8" opacity="0.81"/><ellipse cx="151.2" cy="175.8" rx="3.2" ry="2.6" transform="rotate(89 151.2 175.8)" fill="#2840e0" opacity="0.74"/><ellipse cx="11.1" cy="192.1" rx="3.5" ry="2.6" transform="rotate(113 11.1 192.1)" fill="#1c3cc8" opacity="0.73"/><ellipse cx="230.7" cy="173.2" rx="3.0" ry="2.3" transform="rotate(146 230.7 173.2)" fill="#2034d8" opacity="0.78"/><ellipse cx="226.3" cy="157.1" rx="3.2" ry="2.5" transform="rotate(41 226.3 157.1)" fill="#2034d8" opacity="0.47"/><ellipse cx="243.2" cy="86.6" rx="2.8" ry="2.2" transform="rotate(9 243.2 86.6)" fill="#2034d8" opacity="0.42"/><ellipse cx="124.0" cy="0.8" rx="3.3" ry="2.5" transform="rotate(91 124.0 0.8)" fill="#3050f0" opacity="0.49"/><ellipse cx="189.0" cy="109.0" rx="3.4" ry="2.2" transform="rotate(152 189.0 109.0)" fill="#1828c0" opacity="0.74"/><ellipse cx="187.5" cy="224.4" rx="2.8" ry="1.9" transform="rotate(69 187.5 224.4)" fill="#1c30b8" opacity="0.81"/><ellipse cx="11.9" cy="145.5" rx="2.3" ry="1.9" transform="rotate(108 11.9 145.5)" fill="#2840e0" opacity="0.55"/><ellipse cx="77.2" cy="130.6" rx="2.0" ry="1.3" transform="rotate(11 77.2 130.6)" fill="#2840e0" opacity="0.84"/><ellipse cx="55.2" cy="112.6" rx="3.2" ry="2.0" transform="rotate(51 55.2 112.6)" fill="#1c30b8" opacity="0.64"/><ellipse cx="226.5" cy="45.8" rx="3.7" ry="2.3" transform="rotate(169 226.5 45.8)" fill="#2034d8" opacity="0.34"/><ellipse cx="128.4" cy="228.8" rx="3.7" ry="2.3" transform="rotate(70 128.4 228.8)" fill="#1828c0" opacity="0.48"/><ellipse cx="189.5" cy="60.2" rx="2.6" ry="2.3" transform="rotate(109 189.5 60.2)" fill="#1c3cc8" opacity="0.39"/><ellipse cx="178.3" cy="53.2" rx="3.5" ry="3.1" transform="rotate(88 178.3 53.2)" fill="#2034d8" opacity="0.31"/><ellipse cx="172.8" cy="93.2" rx="3.2" ry="2.8" transform="rotate(75 172.8 93.2)" fill="#1c30b8" opacity="0.35"/><ellipse cx="0.4" cy="172.7" rx="3.4" ry="3.0" transform="rotate(22 0.4 172.7)" fill="#1828c0" opacity="0.74"/><ellipse cx="99.6" cy="229.7" rx="3.0" ry="2.6" transform="rotate(65 99.6 229.7)" fill="#1c30b8" opacity="0.75"/><ellipse cx="71.1" cy="11.9" rx="3.1" ry="2.1" transform="rotate(27 71.1 11.9)" fill="#2840e0" opacity="0.62"/><ellipse cx="196.0" cy="180.6" rx="2.7" ry="2.4" transform="rotate(5 196.0 180.6)" fill="#2048b0" opacity="0.70"/><ellipse cx="238.5" cy="126.3" rx="3.2" ry="2.5" transform="rotate(9 238.5 126.3)" fill="#1c3cc8" opacity="0.61"/><ellipse cx="35.1" cy="200.0" rx="2.8" ry="2.1" transform="rotate(164 35.1 200.0)" fill="#3050f0" opacity="0.50"/><ellipse cx="187.3" cy="224.5" rx="2.4" ry="2.0" transform="rotate(118 187.3 224.5)" fill="#2840e0" opacity="0.64"/><ellipse cx="30.4" cy="147.9" rx="2.1" ry="1.4" transform="rotate(90 30.4 147.9)" fill="#2048b0" opacity="0.65"/><ellipse cx="229.7" cy="229.2" rx="2.8" ry="1.8" transform="rotate(25 229.7 229.2)" fill="#1828c0" opacity="0.55"/><ellipse cx="140.9" cy="73.4" rx="2.6" ry="2.2" transform="rotate(146 140.9 73.4)" fill="#1828c0" opacity="0.48"/><ellipse cx="132.9" cy="86.7" rx="2.6" ry="1.8" transform="rotate(11 132.9 86.7)" fill="#2840e0" opacity="0.41"/><ellipse cx="174.1" cy="121.7" rx="3.3" ry="2.3" transform="rotate(153 174.1 121.7)" fill="#2034d8" opacity="0.56"/><ellipse cx="241.8" cy="195.2" rx="3.5" ry="2.9" transform="rotate(4 241.8 195.2)" fill="#2034d8" opacity="0.62"/><ellipse cx="203.9" cy="222.7" rx="2.8" ry="2.1" transform="rotate(13 203.9 222.7)" fill="#2048b0" opacity="0.66"/><ellipse cx="56.7" cy="35.0" rx="2.2" ry="1.8" transform="rotate(149 56.7 35.0)" fill="#1c3cc8" opacity="0.71"/><ellipse cx="115.9" cy="126.8" rx="2.1" ry="1.3" transform="rotate(141 115.9 126.8)" fill="#1828c0" opacity="0.68"/><ellipse cx="181.3" cy="221.4" rx="3.1" ry="1.9" transform="rotate(95 181.3 221.4)" fill="#1c30b8" opacity="0.73"/><ellipse cx="17.8" cy="120.6" rx="3.0" ry="1.8" transform="rotate(70 17.8 120.6)" fill="#1828c0" opacity="0.77"/><ellipse cx="136.3" cy="229.2" rx="2.5" ry="1.8" transform="rotate(57 136.3 229.2)" fill="#2048b0" opacity="0.80"/><ellipse cx="178.6" cy="70.7" rx="2.0" ry="1.3" transform="rotate(90 178.6 70.7)" fill="#1c3cc8" opacity="0.43"/><ellipse cx="182.1" cy="83.3" rx="2.7" ry="2.0" transform="rotate(1 182.1 83.3)" fill="#2840e0" opacity="0.45"/><ellipse cx="52.0" cy="223.1" rx="2.5" ry="1.7" transform="rotate(148 52.0 223.1)" fill="#1828c0" opacity="0.64"/><ellipse cx="225.4" cy="25.1" rx="3.1" ry="2.7" transform="rotate(110 225.4 25.1)" fill="#1828c0" opacity="0.39"/><ellipse cx="14.3" cy="136.8" rx="3.6" ry="2.3" transform="rotate(10 14.3 136.8)" fill="#2034d8" opacity="0.84"/><ellipse cx="227.7" cy="203.2" rx="3.2" ry="2.1" transform="rotate(180 227.7 203.2)" fill="#1828c0" opacity="0.58"/><ellipse cx="237.2" cy="171.7" rx="2.1" ry="1.8" transform="rotate(120 237.2 171.7)" fill="#1c30b8" opacity="0.79"/><ellipse cx="112.2" cy="25.1" rx="2.1" ry="1.4" transform="rotate(15 112.2 25.1)" fill="#1c30b8" opacity="0.83"/><ellipse cx="244.4" cy="47.7" rx="2.6" ry="1.6" transform="rotate(148 244.4 47.7)" fill="#2048b0" opacity="0.46"/><ellipse cx="178.8" cy="45.0" rx="2.9" ry="2.5" transform="rotate(80 178.8 45.0)" fill="#2840e0" opacity="0.36"/><ellipse cx="7.7" cy="94.5" rx="3.3" ry="2.8" transform="rotate(7 7.7 94.5)" fill="#2034d8" opacity="0.64"/><ellipse cx="15.9" cy="139.3" rx="2.6" ry="2.2" transform="rotate(60 15.9 139.3)" fill="#3050f0" opacity="0.47"/><ellipse cx="174.8" cy="212.6" rx="2.5" ry="2.0" transform="rotate(130 174.8 212.6)" fill="#3050f0" opacity="0.82"/><ellipse cx="120.5" cy="220.1" rx="3.6" ry="3.1" transform="rotate(70 120.5 220.1)" fill="#2840e0" opacity="0.82"/><ellipse cx="33.6" cy="114.2" rx="2.0" ry="1.7" transform="rotate(168 33.6 114.2)" fill="#2840e0" opacity="0.78"/><ellipse cx="153.9" cy="75.4" rx="2.5" ry="1.9" transform="rotate(65 153.9 75.4)" fill="#2048b0" opacity="0.41"/><ellipse cx="103.4" cy="149.4" rx="2.8" ry="2.4" transform="rotate(98 103.4 149.4)" fill="#1828c0" opacity="0.84"/><ellipse cx="250.4" cy="60.9" rx="2.1" ry="1.9" transform="rotate(17 250.4 60.9)" fill="#1c30b8" opacity="0.51"/><ellipse cx="116.8" cy="205.0" rx="2.4" ry="1.5" transform="rotate(97 116.8 205.0)" fill="#2048b0" opacity="0.72"/><ellipse cx="213.2" cy="67.6" rx="3.0" ry="2.2" transform="rotate(67 213.2 67.6)" fill="#1c3cc8" opacity="0.33"/><ellipse cx="71.3" cy="208.7" rx="2.3" ry="1.7" transform="rotate(12 71.3 208.7)" fill="#2840e0" opacity="0.85"/><ellipse cx="58.7" cy="185.9" rx="3.1" ry="2.7" transform="rotate(178 58.7 185.9)" fill="#2034d8" opacity="0.45"/><ellipse cx="58.6" cy="103.1" rx="2.6" ry="1.7" transform="rotate(158 58.6 103.1)" fill="#1828c0" opacity="0.50"/><ellipse cx="246.6" cy="134.1" rx="3.6" ry="2.8" transform="rotate(67 246.6 134.1)" fill="#2048b0" opacity="0.52"/><ellipse cx="196.5" cy="152.9" rx="2.0" ry="1.3" transform="rotate(115 196.5 152.9)" fill="#1c3cc8" opacity="0.70"/><ellipse cx="152.0" cy="149.9" rx="2.3" ry="1.7" transform="rotate(2 152.0 149.9)" fill="#2840e0" opacity="0.61"/><ellipse cx="8.0" cy="114.0" rx="2.8" ry="2.2" transform="rotate(73 8.0 114.0)" fill="#2048b0" opacity="0.61"/><ellipse cx="176.3" cy="94.3" rx="2.5" ry="1.9" transform="rotate(55 176.3 94.3)" fill="#2034d8" opacity="0.34"/><ellipse cx="219.1" cy="229.2" rx="2.6" ry="2.3" transform="rotate(35 219.1 229.2)" fill="#1c3cc8" opacity="0.61"/><ellipse cx="146.5" cy="83.9" rx="3.3" ry="2.6" transform="rotate(23 146.5 83.9)" fill="#2034d8" opacity="0.40"/><ellipse cx="230.6" cy="20.5" rx="2.6" ry="1.7" transform="rotate(91 230.6 20.5)" fill="#1828c0" opacity="0.35"/><ellipse cx="191.0" cy="182.2" rx="3.4" ry="3.0" transform="rotate(54 191.0 182.2)" fill="#2048b0" opacity="0.83"/><ellipse cx="234.8" cy="89.2" rx="3.5" ry="2.8" transform="rotate(112 234.8 89.2)" fill="#2048b0" opacity="0.48"/><ellipse cx="217.1" cy="142.8" rx="3.0" ry="2.0" transform="rotate(35 217.1 142.8)" fill="#1c30b8" opacity="0.52"/><ellipse cx="101.3" cy="119.1" rx="2.7" ry="2.2" transform="rotate(22 101.3 119.1)" fill="#1828c0" opacity="0.84"/><ellipse cx="48.8" cy="203.3" rx="3.4" ry="2.2" transform="rotate(121 48.8 203.3)" fill="#1c3cc8" opacity="0.79"/><ellipse cx="152.0" cy="126.5" rx="3.1" ry="2.1" transform="rotate(55 152.0 126.5)" fill="#1c30b8" opacity="0.57"/><ellipse cx="0.9" cy="226.8" rx="2.8" ry="2.1" transform="rotate(80 0.9 226.8)" fill="#3050f0" opacity="0.76"/><ellipse cx="45.5" cy="108.8" rx="2.2" ry="1.8" transform="rotate(23 45.5 108.8)" fill="#1c30b8" opacity="0.60"/><ellipse cx="127.9" cy="151.1" rx="2.1" ry="1.7" transform="rotate(23 127.9 151.1)" fill="#1c3cc8" opacity="0.58"/><ellipse cx="20.3" cy="173.0" rx="3.5" ry="3.0" transform="rotate(117 20.3 173.0)" fill="#2048b0" opacity="0.50"/><ellipse cx="252.5" cy="168.4" rx="3.4" ry="2.9" transform="rotate(35 252.5 168.4)" fill="#1c30b8" opacity="0.57"/><ellipse cx="201.5" cy="157.8" rx="3.2" ry="2.7" transform="rotate(40 201.5 157.8)" fill="#2048b0" opacity="0.59"/><ellipse cx="40.2" cy="206.2" rx="2.5" ry="2.2" transform="rotate(147 40.2 206.2)" fill="#1828c0" opacity="0.55"/><ellipse cx="121.7" cy="136.1" rx="3.0" ry="2.0" transform="rotate(43 121.7 136.1)" fill="#2840e0" opacity="0.46"/><ellipse cx="40.9" cy="215.4" rx="3.2" ry="2.1" transform="rotate(161 40.9 215.4)" fill="#1828c0" opacity="0.77"/><ellipse cx="194.8" cy="11.2" rx="3.6" ry="3.1" transform="rotate(82 194.8 11.2)" fill="#3050f0" opacity="0.41"/><ellipse cx="26.5" cy="228.4" rx="3.1" ry="2.2" transform="rotate(71 26.5 228.4)" fill="#2048b0" opacity="0.60"/><ellipse cx="156.0" cy="220.3" rx="2.5" ry="2.2" transform="rotate(93 156.0 220.3)" fill="#2840e0" opacity="0.71"/><ellipse cx="148.5" cy="152.7" rx="2.5" ry="1.7" transform="rotate(0 148.5 152.7)" fill="#2034d8" opacity="0.54"/><ellipse cx="158.6" cy="96.1" rx="2.6" ry="2.1" transform="rotate(9 158.6 96.1)" fill="#1c30b8" opacity="0.54"/><ellipse cx="56.8" cy="134.2" rx="3.0" ry="1.9" transform="rotate(37 56.8 134.2)" fill="#3050f0" opacity="0.78"/><ellipse cx="3.6" cy="184.3" rx="3.2" ry="2.8" transform="rotate(81 3.6 184.3)" fill="#2034d8" opacity="0.71"/><ellipse cx="198.3" cy="92.4" rx="2.4" ry="2.1" transform="rotate(2 198.3 92.4)" fill="#1c3cc8" opacity="0.47"/><ellipse cx="150.8" cy="133.0" rx="3.0" ry="2.6" transform="rotate(93 150.8 133.0)" fill="#1c30b8" opacity="0.55"/><ellipse cx="11.2" cy="122.3" rx="2.7" ry="1.7" transform="rotate(43 11.2 122.3)" fill="#2034d8" opacity="0.81"/><ellipse cx="155.3" cy="151.1" rx="2.3" ry="1.8" transform="rotate(74 155.3 151.1)" fill="#3050f0" opacity="0.69"/><ellipse cx="162.6" cy="187.1" rx="2.3" ry="2.1" transform="rotate(56 162.6 187.1)" fill="#2840e0" opacity="0.70"/><ellipse cx="183.6" cy="109.9" rx="2.9" ry="2.2" transform="rotate(68 183.6 109.9)" fill="#1c30b8" opacity="0.75"/><ellipse cx="188.0" cy="104.1" rx="2.4" ry="1.5" transform="rotate(19 188.0 104.1)" fill="#1828c0" opacity="0.71"/><ellipse cx="225.9" cy="212.8" rx="3.6" ry="2.8" transform="rotate(47 225.9 212.8)" fill="#2034d8" opacity="0.56"/><ellipse cx="132.6" cy="61.0" rx="3.1" ry="2.3" transform="rotate(174 132.6 61.0)" fill="#1828c0" opacity="0.29"/><ellipse cx="43.0" cy="208.1" rx="3.4" ry="2.4" transform="rotate(36 43.0 208.1)" fill="#1828c0" opacity="0.75"/><ellipse cx="223.1" cy="75.6" rx="2.4" ry="2.2" transform="rotate(163 223.1 75.6)" fill="#1c3cc8" opacity="0.49"/><ellipse cx="213.3" cy="123.4" rx="2.8" ry="2.0" transform="rotate(96 213.3 123.4)" fill="#2034d8" opacity="0.79"/><ellipse cx="183.7" cy="131.2" rx="2.5" ry="1.9" transform="rotate(38 183.7 131.2)" fill="#3050f0" opacity="0.68"/><ellipse cx="247.8" cy="161.2" rx="2.1" ry="1.7" transform="rotate(25 247.8 161.2)" fill="#1c3cc8" opacity="0.70"/><ellipse cx="186.8" cy="15.1" rx="2.6" ry="2.1" transform="rotate(147 186.8 15.1)" fill="#2048b0" opacity="0.40"/><ellipse cx="223.0" cy="173.8" rx="3.2" ry="2.0" transform="rotate(69 223.0 173.8)" fill="#1828c0" opacity="0.53"/><ellipse cx="8.7" cy="195.0" rx="3.4" ry="2.7" transform="rotate(114 8.7 195.0)" fill="#2048b0" opacity="0.75"/><ellipse cx="120.9" cy="30.5" rx="3.3" ry="2.4" transform="rotate(116 120.9 30.5)" fill="#2840e0" opacity="0.58"/><ellipse cx="71.6" cy="164.6" rx="2.6" ry="2.2" transform="rotate(58 71.6 164.6)" fill="#3050f0" opacity="0.65"/><ellipse cx="196.0" cy="79.8" rx="3.2" ry="2.7" transform="rotate(97 196.0 79.8)" fill="#1828c0" opacity="0.44"/><ellipse cx="145.6" cy="66.0" rx="2.7" ry="2.4" transform="rotate(94 145.6 66.0)" fill="#2840e0" opacity="0.45"/><ellipse cx="1.1" cy="112.9" rx="2.8" ry="2.2" transform="rotate(143 1.1 112.9)" fill="#1828c0" opacity="0.84"/><ellipse cx="242.7" cy="118.5" rx="3.0" ry="2.4" transform="rotate(29 242.7 118.5)" fill="#2048b0" opacity="0.54"/><ellipse cx="126.3" cy="25.3" rx="3.1" ry="2.4" transform="rotate(15 126.3 25.3)" fill="#2048b0" opacity="0.51"/><ellipse cx="24.1" cy="213.6" rx="3.5" ry="2.1" transform="rotate(134 24.1 213.6)" fill="#1c30b8" opacity="0.81"/><ellipse cx="228.5" cy="115.3" rx="2.6" ry="1.7" transform="rotate(159 228.5 115.3)" fill="#1828c0" opacity="0.83"/><ellipse cx="150.6" cy="158.5" rx="3.0" ry="2.0" transform="rotate(6 150.6 158.5)" fill="#3050f0" opacity="0.58"/><ellipse cx="213.7" cy="152.3" rx="3.3" ry="2.2" transform="rotate(31 213.7 152.3)" fill="#1c30b8" opacity="0.73"/><ellipse cx="176.6" cy="116.8" rx="2.5" ry="1.6" transform="rotate(136 176.6 116.8)" fill="#2048b0" opacity="0.79"/><ellipse cx="82.8" cy="120.1" rx="2.3" ry="2.0" transform="rotate(59 82.8 120.1)" fill="#1828c0" opacity="0.55"/><ellipse cx="252.2" cy="37.9" rx="3.1" ry="2.6" transform="rotate(35 252.2 37.9)" fill="#1828c0" opacity="0.51"/><ellipse cx="185.9" cy="100.0" rx="2.3" ry="2.0" transform="rotate(115 185.9 100.0)" fill="#2034d8" opacity="0.56"/><ellipse cx="216.6" cy="100.4" rx="2.4" ry="1.5" transform="rotate(177 216.6 100.4)" fill="#2840e0" opacity="0.64"/><ellipse cx="153.0" cy="93.1" rx="3.3" ry="2.5" transform="rotate(163 153.0 93.1)" fill="#1c30b8" opacity="0.44"/><ellipse cx="164.1" cy="194.6" rx="3.1" ry="2.4" transform="rotate(117 164.1 194.6)" fill="#2048b0" opacity="0.71"/><ellipse cx="177.6" cy="205.8" rx="2.4" ry="1.6" transform="rotate(72 177.6 205.8)" fill="#1c3cc8" opacity="0.70"/><ellipse cx="157.6" cy="94.1" rx="3.1" ry="2.2" transform="rotate(167 157.6 94.1)" fill="#1828c0" opacity="0.48"/><ellipse cx="2.7" cy="191.3" rx="3.5" ry="2.3" transform="rotate(19 2.7 191.3)" fill="#2840e0" opacity="0.67"/><ellipse cx="198.2" cy="216.3" rx="2.9" ry="1.9" transform="rotate(18 198.2 216.3)" fill="#3050f0" opacity="0.63"/><ellipse cx="200.9" cy="85.1" rx="2.6" ry="2.1" transform="rotate(134 200.9 85.1)" fill="#1c30b8" opacity="0.32"/><ellipse cx="31.0" cy="226.4" rx="2.6" ry="1.6" transform="rotate(10 31.0 226.4)" fill="#2840e0" opacity="0.60"/><ellipse cx="19.1" cy="210.6" rx="3.1" ry="2.0" transform="rotate(121 19.1 210.6)" fill="#3050f0" opacity="0.56"/><ellipse cx="188.0" cy="216.2" rx="2.9" ry="2.1" transform="rotate(39 188.0 216.2)" fill="#2048b0" opacity="0.83"/><ellipse cx="41.7" cy="213.8" rx="2.1" ry="1.6" transform="rotate(144 41.7 213.8)" fill="#1828c0" opacity="0.64"/><ellipse cx="57.3" cy="221.7" rx="2.6" ry="1.9" transform="rotate(115 57.3 221.7)" fill="#2048b0" opacity="0.77"/><ellipse cx="252.5" cy="174.8" rx="3.1" ry="2.7" transform="rotate(140 252.5 174.8)" fill="#1c30b8" opacity="0.59"/><ellipse cx="108.6" cy="146.6" rx="3.1" ry="1.9" transform="rotate(65 108.6 146.6)" fill="#2840e0" opacity="0.79"/><ellipse cx="209.9" cy="208.3" rx="3.3" ry="2.6" transform="rotate(25 209.9 208.3)" fill="#2048b0" opacity="0.59"/><ellipse cx="166.6" cy="48.2" rx="2.1" ry="1.4" transform="rotate(53 166.6 48.2)" fill="#3050f0" opacity="0.29"/><ellipse cx="59.2" cy="178.6" rx="2.6" ry="1.7" transform="rotate(27 59.2 178.6)" fill="#1c30b8" opacity="0.77"/><ellipse cx="225.9" cy="139.9" rx="3.3" ry="2.8" transform="rotate(120 225.9 139.9)" fill="#3050f0" opacity="0.77"/><ellipse cx="50.0" cy="159.3" rx="2.9" ry="1.8" transform="rotate(134 50.0 159.3)" fill="#1c30b8" opacity="0.72"/><ellipse cx="30.0" cy="96.4" rx="2.8" ry="1.8" transform="rotate(100 30.0 96.4)" fill="#1c30b8" opacity="0.64"/><ellipse cx="124.6" cy="114.6" rx="2.9" ry="2.0" transform="rotate(155 124.6 114.6)" fill="#2034d8" opacity="0.51"/><ellipse cx="176.4" cy="114.4" rx="2.5" ry="2.2" transform="rotate(84 176.4 114.4)" fill="#1c30b8" opacity="0.62"/><ellipse cx="19.1" cy="146.5" rx="3.1" ry="2.5" transform="rotate(5 19.1 146.5)" fill="#3050f0" opacity="0.47"/><ellipse cx="253.2" cy="186.0" rx="2.2" ry="1.3" transform="rotate(87 253.2 186.0)" fill="#2048b0" opacity="0.81"/><ellipse cx="182.1" cy="143.8" rx="2.6" ry="2.1" transform="rotate(155 182.1 143.8)" fill="#2840e0" opacity="0.59"/><ellipse cx="140.5" cy="209.8" rx="2.5" ry="2.1" transform="rotate(62 140.5 209.8)" fill="#2840e0" opacity="0.67"/><ellipse cx="74.2" cy="190.4" rx="2.7" ry="1.9" transform="rotate(91 74.2 190.4)" fill="#2840e0" opacity="0.80"/><ellipse cx="51.6" cy="113.2" rx="2.2" ry="1.7" transform="rotate(35 51.6 113.2)" fill="#1c3cc8" opacity="0.57"/><ellipse cx="160.9" cy="180.4" rx="2.1" ry="1.3" transform="rotate(130 160.9 180.4)" fill="#1c30b8" opacity="0.67"/><ellipse cx="233.6" cy="140.0" rx="3.1" ry="2.4" transform="rotate(142 233.6 140.0)" fill="#3050f0" opacity="0.69"/><ellipse cx="158.9" cy="160.2" rx="3.0" ry="2.4" transform="rotate(123 158.9 160.2)" fill="#1828c0" opacity="0.47"/><ellipse cx="168.2" cy="199.9" rx="2.7" ry="2.3" transform="rotate(18 168.2 199.9)" fill="#1c3cc8" opacity="0.46"/><ellipse cx="180.0" cy="198.4" rx="2.3" ry="1.8" transform="rotate(6 180.0 198.4)" fill="#2034d8" opacity="0.62"/><ellipse cx="236.7" cy="12.6" rx="2.1" ry="1.7" transform="rotate(21 236.7 12.6)" fill="#2048b0" opacity="0.37"/><ellipse cx="172.4" cy="136.6" rx="3.7" ry="2.7" transform="rotate(119 172.4 136.6)" fill="#1828c0" opacity="0.64"/><ellipse cx="25.9" cy="148.2" rx="2.4" ry="1.4" transform="rotate(27 25.9 148.2)" fill="#2034d8" opacity="0.62"/><ellipse cx="169.7" cy="226.9" rx="3.5" ry="2.1" transform="rotate(39 169.7 226.9)" fill="#2034d8" opacity="0.50"/><ellipse cx="182.4" cy="55.7" rx="3.2" ry="2.7" transform="rotate(34 182.4 55.7)" fill="#2034d8" opacity="0.36"/><ellipse cx="176.1" cy="33.3" rx="3.3" ry="2.4" transform="rotate(53 176.1 33.3)" fill="#3050f0" opacity="0.44"/><ellipse cx="236.3" cy="58.4" rx="3.6" ry="3.1" transform="rotate(129 236.3 58.4)" fill="#2034d8" opacity="0.28"/><ellipse cx="174.1" cy="142.2" rx="2.7" ry="2.3" transform="rotate(56 174.1 142.2)" fill="#3050f0" opacity="0.52"/><ellipse cx="93.2" cy="132.2" rx="2.7" ry="1.7" transform="rotate(122 93.2 132.2)" fill="#1828c0" opacity="0.84"/><ellipse cx="241.8" cy="37.7" rx="3.4" ry="3.0" transform="rotate(86 241.8 37.7)" fill="#2048b0" opacity="0.46"/><ellipse cx="198.9" cy="130.4" rx="2.5" ry="2.1" transform="rotate(11 198.9 130.4)" fill="#1c3cc8" opacity="0.73"/><ellipse cx="84.2" cy="139.3" rx="3.7" ry="2.8" transform="rotate(150 84.2 139.3)" fill="#3050f0" opacity="0.78"/><ellipse cx="247.5" cy="56.6" rx="2.7" ry="2.2" transform="rotate(68 247.5 56.6)" fill="#2048b0" opacity="0.49"/><ellipse cx="107.1" cy="134.9" rx="3.4" ry="2.2" transform="rotate(160 107.1 134.9)" fill="#2034d8" opacity="0.57"/><ellipse cx="225.8" cy="228.4" rx="2.2" ry="1.8" transform="rotate(176 225.8 228.4)" fill="#2048b0" opacity="0.77"/><ellipse cx="231.6" cy="79.8" rx="2.1" ry="1.8" transform="rotate(100 231.6 79.8)" fill="#2048b0" opacity="0.36"/><ellipse cx="183.1" cy="225.9" rx="2.5" ry="1.7" transform="rotate(10 183.1 225.9)" fill="#1c30b8" opacity="0.64"/><ellipse cx="64.6" cy="172.8" rx="3.3" ry="2.4" transform="rotate(83 64.6 172.8)" fill="#2034d8" opacity="0.66"/><ellipse cx="65.8" cy="191.7" rx="2.5" ry="1.7" transform="rotate(91 65.8 191.7)" fill="#1828c0" opacity="0.53"/><ellipse cx="45.8" cy="161.2" rx="2.6" ry="2.2" transform="rotate(102 45.8 161.2)" fill="#1c30b8" opacity="0.76"/><ellipse cx="62.4" cy="212.2" rx="2.8" ry="2.4" transform="rotate(156 62.4 212.2)" fill="#2840e0" opacity="0.70"/><ellipse cx="39.6" cy="137.4" rx="2.6" ry="1.7" transform="rotate(94 39.6 137.4)" fill="#2034d8" opacity="0.49"/><ellipse cx="220.7" cy="130.1" rx="3.0" ry="1.9" transform="rotate(38 220.7 130.1)" fill="#2048b0" opacity="0.56"/><ellipse cx="113.3" cy="136.4" rx="3.0" ry="2.0" transform="rotate(24 113.3 136.4)" fill="#2048b0" opacity="0.47"/><ellipse cx="141.3" cy="200.3" rx="2.8" ry="2.2" transform="rotate(170 141.3 200.3)" fill="#2034d8" opacity="0.80"/><ellipse cx="233.8" cy="162.5" rx="2.2" ry="1.9" transform="rotate(57 233.8 162.5)" fill="#1828c0" opacity="0.71"/><ellipse cx="169.8" cy="90.4" rx="2.8" ry="1.8" transform="rotate(29 169.8 90.4)" fill="#1828c0" opacity="0.51"/><ellipse cx="89.2" cy="207.6" rx="3.5" ry="2.7" transform="rotate(151 89.2 207.6)" fill="#2034d8" opacity="0.55"/><ellipse cx="187.5" cy="175.2" rx="2.8" ry="2.5" transform="rotate(18 187.5 175.2)" fill="#2840e0" opacity="0.75"/><ellipse cx="171.6" cy="68.7" rx="3.0" ry="2.1" transform="rotate(136 171.6 68.7)" fill="#2034d8" opacity="0.38"/><ellipse cx="204.7" cy="210.3" rx="3.5" ry="2.3" transform="rotate(84 204.7 210.3)" fill="#1828c0" opacity="0.77"/><ellipse cx="211.1" cy="17.9" rx="2.6" ry="1.7" transform="rotate(135 211.1 17.9)" fill="#2048b0" opacity="0.38"/><ellipse cx="235.4" cy="193.7" rx="3.1" ry="2.1" transform="rotate(81 235.4 193.7)" fill="#2840e0" opacity="0.58"/><ellipse cx="84.2" cy="169.3" rx="2.3" ry="1.5" transform="rotate(81 84.2 169.3)" fill="#1828c0" opacity="0.63"/><ellipse cx="6.4" cy="131.3" rx="2.5" ry="1.7" transform="rotate(145 6.4 131.3)" fill="#2840e0" opacity="0.65"/><ellipse cx="229.0" cy="26.3" rx="3.7" ry="2.4" transform="rotate(10 229.0 26.3)" fill="#2048b0" opacity="0.43"/><ellipse cx="92.3" cy="227.9" rx="3.7" ry="2.7" transform="rotate(167 92.3 227.9)" fill="#2034d8" opacity="0.61"/><ellipse cx="41.1" cy="191.4" rx="3.7" ry="3.1" transform="rotate(26 41.1 191.4)" fill="#1c3cc8" opacity="0.46"/><ellipse cx="0.5" cy="191.4" rx="2.9" ry="2.1" transform="rotate(33 0.5 191.4)" fill="#1c30b8" opacity="0.47"/><ellipse cx="213.8" cy="120.0" rx="2.4" ry="1.5" transform="rotate(32 213.8 120.0)" fill="#3050f0" opacity="0.48"/><ellipse cx="154.3" cy="114.0" rx="2.5" ry="1.9" transform="rotate(37 154.3 114.0)" fill="#3050f0" opacity="0.72"/><ellipse cx="2.5" cy="159.2" rx="2.9" ry="2.0" transform="rotate(151 2.5 159.2)" fill="#2034d8" opacity="0.66"/><ellipse cx="71.4" cy="147.0" rx="3.6" ry="2.7" transform="rotate(16 71.4 147.0)" fill="#1c30b8" opacity="0.81"/><ellipse cx="221.1" cy="61.2" rx="2.3" ry="1.9" transform="rotate(150 221.1 61.2)" fill="#2840e0" opacity="0.28"/><ellipse cx="145.7" cy="197.4" rx="2.6" ry="1.8" transform="rotate(168 145.7 197.4)" fill="#3050f0" opacity="0.48"/><ellipse cx="62.0" cy="190.9" rx="3.6" ry="2.9" transform="rotate(140 62.0 190.9)" fill="#2048b0" opacity="0.60"/><ellipse cx="15.5" cy="200.7" rx="3.6" ry="3.0" transform="rotate(89 15.5 200.7)" fill="#3050f0" opacity="0.46"/><ellipse cx="22.5" cy="142.4" rx="2.3" ry="1.4" transform="rotate(56 22.5 142.4)" fill="#3050f0" opacity="0.78"/><ellipse cx="24.5" cy="160.8" rx="2.3" ry="1.7" transform="rotate(3 24.5 160.8)" fill="#3050f0" opacity="0.70"/><ellipse cx="60.4" cy="102.2" rx="2.6" ry="1.7" transform="rotate(17 60.4 102.2)" fill="#1828c0" opacity="0.47"/><ellipse cx="125.1" cy="115.2" rx="2.5" ry="1.9" transform="rotate(22 125.1 115.2)" fill="#1c30b8" opacity="0.80"/><ellipse cx="240.4" cy="4.3" rx="3.2" ry="2.3" transform="rotate(107 240.4 4.3)" fill="#3050f0" opacity="0.40"/><ellipse cx="238.6" cy="178.7" rx="2.6" ry="2.2" transform="rotate(43 238.6 178.7)" fill="#2840e0" opacity="0.74"/><ellipse cx="143.1" cy="226.7" rx="2.5" ry="1.9" transform="rotate(72 143.1 226.7)" fill="#3050f0" opacity="0.47"/><ellipse cx="242.8" cy="214.9" rx="2.4" ry="1.5" transform="rotate(76 242.8 214.9)" fill="#1c3cc8" opacity="0.45"/><ellipse cx="50.9" cy="153.9" rx="2.4" ry="2.1" transform="rotate(76 50.9 153.9)" fill="#1c30b8" opacity="0.76"/><ellipse cx="160.5" cy="186.1" rx="3.5" ry="2.8" transform="rotate(159 160.5 186.1)" fill="#2034d8" opacity="0.80"/><ellipse cx="232.7" cy="143.4" rx="3.1" ry="2.1" transform="rotate(145 232.7 143.4)" fill="#2034d8" opacity="0.70"/><ellipse cx="131.9" cy="99.7" rx="3.6" ry="2.4" transform="rotate(52 131.9 99.7)" fill="#2840e0" opacity="0.59"/><ellipse cx="15.3" cy="220.6" rx="3.6" ry="2.7" transform="rotate(162 15.3 220.6)" fill="#2034d8" opacity="0.64"/><ellipse cx="61.7" cy="20.2" rx="3.4" ry="2.5" transform="rotate(110 61.7 20.2)" fill="#3050f0" opacity="0.54"/><ellipse cx="139.1" cy="84.4" rx="3.5" ry="2.4" transform="rotate(55 139.1 84.4)" fill="#1c30b8" opacity="0.38"/><ellipse cx="129.9" cy="88.1" rx="3.0" ry="2.7" transform="rotate(2 129.9 88.1)" fill="#2840e0" opacity="0.31"/><ellipse cx="68.4" cy="202.0" rx="2.4" ry="1.5" transform="rotate(10 68.4 202.0)" fill="#2034d8" opacity="0.51"/><ellipse cx="220.9" cy="101.2" rx="2.1" ry="1.7" transform="rotate(70 220.9 101.2)" fill="#1c30b8" opacity="0.59"/><ellipse cx="132.1" cy="227.5" rx="3.2" ry="2.2" transform="rotate(168 132.1 227.5)" fill="#1c30b8" opacity="0.58"/><ellipse cx="171.2" cy="141.7" rx="3.4" ry="3.0" transform="rotate(148 171.2 141.7)" fill="#3050f0" opacity="0.49"/><ellipse cx="233.7" cy="229.0" rx="2.5" ry="1.6" transform="rotate(114 233.7 229.0)" fill="#1c3cc8" opacity="0.82"/><ellipse cx="220.8" cy="1.0" rx="3.0" ry="2.6" transform="rotate(90 220.8 1.0)" fill="#3050f0" opacity="0.31"/><ellipse cx="70.8" cy="142.9" rx="2.2" ry="1.8" transform="rotate(153 70.8 142.9)" fill="#1c3cc8" opacity="0.63"/><ellipse cx="140.8" cy="88.4" rx="2.5" ry="1.8" transform="rotate(142 140.8 88.4)" fill="#2048b0" opacity="0.51"/><ellipse cx="76.1" cy="123.5" rx="3.4" ry="2.1" transform="rotate(78 76.1 123.5)" fill="#1c30b8" opacity="0.68"/><ellipse cx="233.3" cy="74.5" rx="3.4" ry="2.5" transform="rotate(151 233.3 74.5)" fill="#2840e0" opacity="0.32"/><ellipse cx="143.2" cy="114.4" rx="3.6" ry="2.6" transform="rotate(139 143.2 114.4)" fill="#3050f0" opacity="0.70"/><ellipse cx="209.3" cy="167.2" rx="2.7" ry="1.9" transform="rotate(84 209.3 167.2)" fill="#2034d8" opacity="0.69"/><ellipse cx="240.3" cy="155.6" rx="2.9" ry="2.3" transform="rotate(18 240.3 155.6)" fill="#2840e0" opacity="0.65"/><ellipse cx="235.4" cy="35.5" rx="2.3" ry="1.8" transform="rotate(76 235.4 35.5)" fill="#1c30b8" opacity="0.38"/><ellipse cx="252.5" cy="79.0" rx="2.9" ry="2.1" transform="rotate(147 252.5 79.0)" fill="#1828c0" opacity="0.36"/><ellipse cx="44.5" cy="150.9" rx="2.5" ry="1.8" transform="rotate(62 44.5 150.9)" fill="#3050f0" opacity="0.81"/><ellipse cx="129.7" cy="116.1" rx="2.3" ry="1.5" transform="rotate(33 129.7 116.1)" fill="#1c3cc8" opacity="0.68"/><ellipse cx="144.5" cy="145.2" rx="3.2" ry="2.2" transform="rotate(125 144.5 145.2)" fill="#2034d8" opacity="0.77"/><ellipse cx="213.5" cy="134.8" rx="3.1" ry="2.4" transform="rotate(35 213.5 134.8)" fill="#1c30b8" opacity="0.76"/><ellipse cx="220.8" cy="206.0" rx="2.9" ry="1.8" transform="rotate(26 220.8 206.0)" fill="#1828c0" opacity="0.61"/><ellipse cx="39.7" cy="174.7" rx="2.2" ry="1.6" transform="rotate(18 39.7 174.7)" fill="#1828c0" opacity="0.83"/><ellipse cx="118.5" cy="99.0" rx="3.4" ry="2.3" transform="rotate(117 118.5 99.0)" fill="#1c3cc8" opacity="0.76"/><ellipse cx="181.4" cy="81.4" rx="2.3" ry="2.0" transform="rotate(48 181.4 81.4)" fill="#2034d8" opacity="0.48"/><ellipse cx="224.8" cy="225.3" rx="2.1" ry="1.4" transform="rotate(122 224.8 225.3)" fill="#1c3cc8" opacity="0.74"/><ellipse cx="246.3" cy="66.9" rx="3.0" ry="2.1" transform="rotate(21 246.3 66.9)" fill="#3050f0" opacity="0.48"/><ellipse cx="165.1" cy="221.1" rx="2.7" ry="1.8" transform="rotate(164 165.1 221.1)" fill="#3050f0" opacity="0.55"/><ellipse cx="8.9" cy="152.8" rx="2.6" ry="1.7" transform="rotate(28 8.9 152.8)" fill="#1c3cc8" opacity="0.50"/><ellipse cx="138.1" cy="181.1" rx="2.9" ry="1.9" transform="rotate(84 138.1 181.1)" fill="#2048b0" opacity="0.77"/><ellipse cx="89.5" cy="166.2" rx="2.6" ry="2.0" transform="rotate(173 89.5 166.2)" fill="#1828c0" opacity="0.57"/><ellipse cx="51.8" cy="197.4" rx="3.1" ry="2.3" transform="rotate(170 51.8 197.4)" fill="#2840e0" opacity="0.69"/><ellipse cx="251.0" cy="123.0" rx="2.7" ry="1.7" transform="rotate(92 251.0 123.0)" fill="#1828c0" opacity="0.80"/><ellipse cx="130.1" cy="124.8" rx="2.5" ry="2.0" transform="rotate(139 130.1 124.8)" fill="#1c30b8" opacity="0.46"/><ellipse cx="176.1" cy="178.5" rx="2.4" ry="2.1" transform="rotate(34 176.1 178.5)" fill="#2034d8" opacity="0.48"/><ellipse cx="204.1" cy="174.4" rx="2.3" ry="1.5" transform="rotate(129 204.1 174.4)" fill="#2034d8" opacity="0.54"/><ellipse cx="181.7" cy="64.9" rx="2.7" ry="2.1" transform="rotate(164 181.7 64.9)" fill="#2048b0" opacity="0.42"/><ellipse cx="218.8" cy="215.5" rx="2.3" ry="1.6" transform="rotate(66 218.8 215.5)" fill="#2048b0" opacity="0.72"/><ellipse cx="104.6" cy="151.6" rx="3.2" ry="2.8" transform="rotate(45 104.6 151.6)" fill="#2048b0" opacity="0.61"/><ellipse cx="68.7" cy="140.1" rx="2.4" ry="1.5" transform="rotate(122 68.7 140.1)" fill="#1c30b8" opacity="0.47"/><ellipse cx="212.8" cy="131.1" rx="3.2" ry="2.5" transform="rotate(46 212.8 131.1)" fill="#1c30b8" opacity="0.72"/><ellipse cx="237.2" cy="25.7" rx="3.3" ry="2.6" transform="rotate(118 237.2 25.7)" fill="#2034d8" opacity="0.48"/><ellipse cx="176.4" cy="224.0" rx="3.2" ry="2.8" transform="rotate(7 176.4 224.0)" fill="#2840e0" opacity="0.53"/><ellipse cx="190.0" cy="19.8" rx="2.7" ry="2.0" transform="rotate(135 190.0 19.8)" fill="#2048b0" opacity="0.32"/><ellipse cx="88.5" cy="218.4" rx="2.8" ry="2.3" transform="rotate(61 88.5 218.4)" fill="#3050f0" opacity="0.75"/><ellipse cx="159.2" cy="104.1" rx="2.1" ry="1.8" transform="rotate(126 159.2 104.1)" fill="#1c30b8" opacity="0.72"/><ellipse cx="197.3" cy="112.6" rx="2.3" ry="1.6" transform="rotate(171 197.3 112.6)" fill="#2048b0" opacity="0.77"/><ellipse cx="138.5" cy="223.0" rx="3.1" ry="2.0" transform="rotate(98 138.5 223.0)" fill="#1828c0" opacity="0.84"/><ellipse cx="88.0" cy="21.3" rx="2.2" ry="1.5" transform="rotate(124 88.0 21.3)" fill="#1c30b8" opacity="0.72"/><ellipse cx="61.3" cy="118.5" rx="2.8" ry="1.8" transform="rotate(168 61.3 118.5)" fill="#2840e0" opacity="0.73"/><ellipse cx="179.4" cy="135.1" rx="2.4" ry="2.0" transform="rotate(113 179.4 135.1)" fill="#2034d8" opacity="0.67"/><ellipse cx="42.9" cy="153.3" rx="3.0" ry="2.0" transform="rotate(83 42.9 153.3)" fill="#2048b0" opacity="0.61"/><ellipse cx="11.0" cy="206.0" rx="2.5" ry="1.6" transform="rotate(20 11.0 206.0)" fill="#2840e0" opacity="0.63"/><ellipse cx="18.2" cy="2.5" rx="2.1" ry="1.4" transform="rotate(129 18.2 2.5)" fill="#1c3cc8" opacity="0.68"/><ellipse cx="123.9" cy="99.9" rx="2.3" ry="1.5" transform="rotate(98 123.9 99.9)" fill="#2034d8" opacity="0.59"/><ellipse cx="72.5" cy="141.1" rx="3.2" ry="2.1" transform="rotate(126 72.5 141.1)" fill="#1c3cc8" opacity="0.55"/><ellipse cx="7.0" cy="178.1" rx="3.4" ry="2.6" transform="rotate(53 7.0 178.1)" fill="#1828c0" opacity="0.83"/><ellipse cx="227.0" cy="156.9" rx="2.2" ry="1.5" transform="rotate(129 227.0 156.9)" fill="#2840e0" opacity="0.75"/><ellipse cx="46.8" cy="189.8" rx="2.5" ry="2.2" transform="rotate(66 46.8 189.8)" fill="#3050f0" opacity="0.82"/><ellipse cx="203.5" cy="211.8" rx="3.7" ry="2.8" transform="rotate(73 203.5 211.8)" fill="#2034d8" opacity="0.83"/><ellipse cx="75.9" cy="133.7" rx="2.1" ry="1.7" transform="rotate(124 75.9 133.7)" fill="#1828c0" opacity="0.51"/><ellipse cx="101.8" cy="225.2" rx="3.4" ry="2.1" transform="rotate(86 101.8 225.2)" fill="#1828c0" opacity="0.74"/><ellipse cx="213.1" cy="196.7" rx="3.3" ry="2.1" transform="rotate(77 213.1 196.7)" fill="#2840e0" opacity="0.48"/><ellipse cx="180.2" cy="204.8" rx="2.1" ry="1.7" transform="rotate(2 180.2 204.8)" fill="#2048b0" opacity="0.52"/><ellipse cx="96.0" cy="1.0" rx="3.1" ry="2.2" transform="rotate(102 96.0 1.0)" fill="#1c30b8" opacity="0.48"/><ellipse cx="116.7" cy="223.4" rx="3.5" ry="2.8" transform="rotate(156 116.7 223.4)" fill="#1c30b8" opacity="0.83"/><ellipse cx="205.6" cy="13.8" rx="3.0" ry="2.2" transform="rotate(53 205.6 13.8)" fill="#3050f0" opacity="0.37"/><ellipse cx="166.4" cy="31.5" rx="3.5" ry="2.3" transform="rotate(95 166.4 31.5)" fill="#1c3cc8" opacity="0.28"/><ellipse cx="172.0" cy="102.9" rx="2.1" ry="1.9" transform="rotate(119 172.0 102.9)" fill="#2840e0" opacity="0.67"/><ellipse cx="57.6" cy="222.8" rx="2.3" ry="1.6" transform="rotate(135 57.6 222.8)" fill="#1828c0" opacity="0.79"/><ellipse cx="24.1" cy="122.1" rx="2.4" ry="1.9" transform="rotate(88 24.1 122.1)" fill="#3050f0" opacity="0.63"/><ellipse cx="176.6" cy="169.2" rx="3.5" ry="2.2" transform="rotate(102 176.6 169.2)" fill="#2048b0" opacity="0.61"/><ellipse cx="111.4" cy="198.6" rx="2.9" ry="2.3" transform="rotate(129 111.4 198.6)" fill="#2048b0" opacity="0.83"/><ellipse cx="243.5" cy="118.5" rx="2.8" ry="2.5" transform="rotate(123 243.5 118.5)" fill="#3050f0" opacity="0.52"/><ellipse cx="142.7" cy="178.2" rx="2.2" ry="1.4" transform="rotate(140 142.7 178.2)" fill="#2034d8" opacity="0.61"/><ellipse cx="10.6" cy="161.4" rx="3.6" ry="2.6" transform="rotate(83 10.6 161.4)" fill="#2034d8" opacity="0.73"/><ellipse cx="225.3" cy="142.9" rx="3.5" ry="2.3" transform="rotate(101 225.3 142.9)" fill="#1c3cc8" opacity="0.80"/><ellipse cx="189.0" cy="78.5" rx="3.3" ry="2.2" transform="rotate(122 189.0 78.5)" fill="#2048b0" opacity="0.33"/><ellipse cx="130.1" cy="120.7" rx="2.6" ry="1.6" transform="rotate(88 130.1 120.7)" fill="#2048b0" opacity="0.69"/><ellipse cx="139.1" cy="184.7" rx="2.2" ry="1.5" transform="rotate(167 139.1 184.7)" fill="#1c3cc8" opacity="0.55"/><ellipse cx="175.9" cy="4.9" rx="2.7" ry="2.3" transform="rotate(142 175.9 4.9)" fill="#1c30b8" opacity="0.30"/><ellipse cx="47.0" cy="127.5" rx="2.5" ry="1.9" transform="rotate(124 47.0 127.5)" fill="#1c30b8" opacity="0.78"/><ellipse cx="63.4" cy="229.4" rx="3.3" ry="2.3" transform="rotate(48 63.4 229.4)" fill="#1c30b8" opacity="0.46"/><ellipse cx="38.3" cy="115.4" rx="3.5" ry="2.7" transform="rotate(144 38.3 115.4)" fill="#2034d8" opacity="0.48"/><ellipse cx="163.4" cy="138.0" rx="3.4" ry="2.5" transform="rotate(174 163.4 138.0)" fill="#1c3cc8" opacity="0.79"/><ellipse cx="221.3" cy="140.5" rx="2.1" ry="1.4" transform="rotate(59 221.3 140.5)" fill="#1828c0" opacity="0.57"/><ellipse cx="207.7" cy="167.3" rx="2.6" ry="1.8" transform="rotate(84 207.7 167.3)" fill="#2840e0" opacity="0.58"/><ellipse cx="63.1" cy="201.5" rx="3.0" ry="2.1" transform="rotate(114 63.1 201.5)" fill="#1c3cc8" opacity="0.72"/><ellipse cx="69.3" cy="115.0" rx="2.4" ry="1.6" transform="rotate(102 69.3 115.0)" fill="#3050f0" opacity="0.68"/><ellipse cx="177.1" cy="210.5" rx="3.5" ry="2.8" transform="rotate(17 177.1 210.5)" fill="#1828c0" opacity="0.76"/><ellipse cx="160.9" cy="83.5" rx="2.5" ry="1.6" transform="rotate(143 160.9 83.5)" fill="#2048b0" opacity="0.46"/><ellipse cx="18.3" cy="221.5" rx="2.6" ry="1.8" transform="rotate(65 18.3 221.5)" fill="#2048b0" opacity="0.70"/><ellipse cx="139.6" cy="93.4" rx="2.1" ry="1.8" transform="rotate(61 139.6 93.4)" fill="#2840e0" opacity="0.48"/><ellipse cx="127.7" cy="205.7" rx="3.4" ry="2.0" transform="rotate(179 127.7 205.7)" fill="#1828c0" opacity="0.50"/><ellipse cx="220.8" cy="104.2" rx="2.8" ry="2.1" transform="rotate(102 220.8 104.2)" fill="#2840e0" opacity="0.82"/><ellipse cx="36.5" cy="165.6" rx="2.4" ry="1.7" transform="rotate(103 36.5 165.6)" fill="#1c3cc8" opacity="0.82"/><ellipse cx="233.5" cy="134.2" rx="2.1" ry="1.6" transform="rotate(32 233.5 134.2)" fill="#3050f0" opacity="0.59"/><ellipse cx="246.0" cy="158.8" rx="3.2" ry="2.8" transform="rotate(166 246.0 158.8)" fill="#2048b0" opacity="0.64"/><ellipse cx="68.0" cy="162.0" rx="2.4" ry="1.6" transform="rotate(72 68.0 162.0)" fill="#1828c0" opacity="0.81"/><ellipse cx="206.9" cy="132.4" rx="3.2" ry="2.8" transform="rotate(1 206.9 132.4)" fill="#2840e0" opacity="0.66"/><ellipse cx="162.2" cy="212.3" rx="2.4" ry="1.8" transform="rotate(59 162.2 212.3)" fill="#1c3cc8" opacity="0.46"/><ellipse cx="154.6" cy="184.1" rx="2.3" ry="1.8" transform="rotate(155 154.6 184.1)" fill="#2048b0" opacity="0.47"/><ellipse cx="84.8" cy="113.7" rx="3.0" ry="1.8" transform="rotate(46 84.8 113.7)" fill="#1c30b8" opacity="0.80"/><ellipse cx="80.3" cy="150.4" rx="2.5" ry="1.8" transform="rotate(75 80.3 150.4)" fill="#1c3cc8" opacity="0.74"/><ellipse cx="36.2" cy="176.5" rx="2.2" ry="1.7" transform="rotate(147 36.2 176.5)" fill="#1c30b8" opacity="0.59"/><ellipse cx="219.5" cy="35.3" rx="3.7" ry="2.5" transform="rotate(103 219.5 35.3)" fill="#1828c0" opacity="0.45"/><ellipse cx="180.3" cy="175.6" rx="3.3" ry="2.7" transform="rotate(56 180.3 175.6)" fill="#2048b0" opacity="0.67"/><ellipse cx="141.8" cy="83.1" rx="2.9" ry="2.2" transform="rotate(49 141.8 83.1)" fill="#2840e0" opacity="0.27"/><ellipse cx="166.1" cy="178.1" rx="2.6" ry="2.3" transform="rotate(178 166.1 178.1)" fill="#1828c0" opacity="0.61"/><ellipse cx="237.5" cy="143.7" rx="2.2" ry="1.4" transform="rotate(98 237.5 143.7)" fill="#1828c0" opacity="0.67"/><ellipse cx="238.2" cy="84.1" rx="2.3" ry="1.9" transform="rotate(32 238.2 84.1)" fill="#1c3cc8" opacity="0.48"/><ellipse cx="134.0" cy="80.7" rx="3.2" ry="2.5" transform="rotate(79 134.0 80.7)" fill="#2048b0" opacity="0.39"/><ellipse cx="87.3" cy="184.1" rx="2.8" ry="2.3" transform="rotate(58 87.3 184.1)" fill="#2034d8" opacity="0.49"/><ellipse cx="16.6" cy="148.5" rx="2.7" ry="1.9" transform="rotate(156 16.6 148.5)" fill="#2034d8" opacity="0.54"/><ellipse cx="229.9" cy="86.4" rx="3.1" ry="2.1" transform="rotate(155 229.9 86.4)" fill="#2034d8" opacity="0.33"/><ellipse cx="51.5" cy="174.6" rx="3.1" ry="2.4" transform="rotate(54 51.5 174.6)" fill="#1c30b8" opacity="0.54"/><ellipse cx="39.7" cy="198.5" rx="3.5" ry="2.4" transform="rotate(48 39.7 198.5)" fill="#2048b0" opacity="0.50"/><ellipse cx="81.1" cy="140.4" rx="3.6" ry="2.4" transform="rotate(38 81.1 140.4)" fill="#2034d8" opacity="0.80"/><ellipse cx="224.0" cy="82.9" rx="3.3" ry="2.1" transform="rotate(155 224.0 82.9)" fill="#1828c0" opacity="0.37"/><ellipse cx="237.3" cy="157.6" rx="3.4" ry="2.3" transform="rotate(27 237.3 157.6)" fill="#2034d8" opacity="0.50"/><ellipse cx="190.5" cy="106.8" rx="2.7" ry="2.2" transform="rotate(75 190.5 106.8)" fill="#1c3cc8" opacity="0.82"/><ellipse cx="223.6" cy="225.3" rx="2.1" ry="1.2" transform="rotate(42 223.6 225.3)" fill="#2048b0" opacity="0.70"/><ellipse cx="34.2" cy="136.9" rx="3.0" ry="2.7" transform="rotate(126 34.2 136.9)" fill="#1c3cc8" opacity="0.46"/><ellipse cx="30.5" cy="112.1" rx="2.2" ry="1.7" transform="rotate(77 30.5 112.1)" fill="#1828c0" opacity="0.54"/><ellipse cx="160.5" cy="125.5" rx="3.7" ry="3.2" transform="rotate(95 160.5 125.5)" fill="#2048b0" opacity="0.65"/><ellipse cx="245.3" cy="203.1" rx="3.2" ry="2.2" transform="rotate(49 245.3 203.1)" fill="#1828c0" opacity="0.46"/><ellipse cx="245.0" cy="45.2" rx="2.1" ry="1.5" transform="rotate(142 245.0 45.2)" fill="#2840e0" opacity="0.33"/><ellipse cx="10.5" cy="104.4" rx="2.5" ry="2.1" transform="rotate(60 10.5 104.4)" fill="#1c30b8" opacity="0.84"/><ellipse cx="182.0" cy="91.8" rx="2.5" ry="1.8" transform="rotate(75 182.0 91.8)" fill="#1828c0" opacity="0.36"/><ellipse cx="253.1" cy="1.2" rx="3.6" ry="3.2" transform="rotate(46 253.1 1.2)" fill="#3050f0" opacity="0.45"/><ellipse cx="209.3" cy="152.6" rx="2.1" ry="1.3" transform="rotate(112 209.3 152.6)" fill="#2034d8" opacity="0.81"/><ellipse cx="176.0" cy="74.6" rx="3.1" ry="2.4" transform="rotate(99 176.0 74.6)" fill="#2840e0" opacity="0.38"/><ellipse cx="120.0" cy="148.9" rx="2.8" ry="1.9" transform="rotate(62 120.0 148.9)" fill="#3050f0" opacity="0.85"/><ellipse cx="159.6" cy="171.0" rx="2.6" ry="1.8" transform="rotate(128 159.6 171.0)" fill="#1c30b8" opacity="0.84"/><ellipse cx="167.2" cy="190.0" rx="2.1" ry="1.7" transform="rotate(144 167.2 190.0)" fill="#1c3cc8" opacity="0.54"/><ellipse cx="67.2" cy="209.0" rx="2.8" ry="2.2" transform="rotate(130 67.2 209.0)" fill="#3050f0" opacity="0.69"/><ellipse cx="253.4" cy="15.1" rx="2.6" ry="1.8" transform="rotate(37 253.4 15.1)" fill="#1828c0" opacity="0.47"/><ellipse cx="43.7" cy="189.0" rx="2.8" ry="2.2" transform="rotate(115 43.7 189.0)" fill="#2048b0" opacity="0.79"/><ellipse cx="230.8" cy="74.1" rx="2.6" ry="1.7" transform="rotate(155 230.8 74.1)" fill="#1c30b8" opacity="0.30"/><ellipse cx="203.6" cy="119.9" rx="2.8" ry="2.0" transform="rotate(16 203.6 119.9)" fill="#1c30b8" opacity="0.57"/><ellipse cx="28.3" cy="146.0" rx="3.2" ry="2.6" transform="rotate(31 28.3 146.0)" fill="#3050f0" opacity="0.51"/><ellipse cx="93.0" cy="119.8" rx="2.4" ry="1.6" transform="rotate(67 93.0 119.8)" fill="#2840e0" opacity="0.77"/><ellipse cx="149.7" cy="70.5" rx="2.9" ry="2.5" transform="rotate(165 149.7 70.5)" fill="#2840e0" opacity="0.33"/><ellipse cx="23.2" cy="146.3" rx="3.5" ry="2.4" transform="rotate(36 23.2 146.3)" fill="#1c30b8" opacity="0.83"/><ellipse cx="198.0" cy="211.7" rx="3.2" ry="2.2" transform="rotate(68 198.0 211.7)" fill="#2034d8" opacity="0.74"/><ellipse cx="103.4" cy="149.1" rx="3.4" ry="2.2" transform="rotate(63 103.4 149.1)" fill="#1c30b8" opacity="0.79"/><ellipse cx="156.8" cy="224.9" rx="3.4" ry="2.4" transform="rotate(104 156.8 224.9)" fill="#2034d8" opacity="0.72"/><ellipse cx="17.9" cy="173.9" rx="2.6" ry="2.1" transform="rotate(95 17.9 173.9)" fill="#1c30b8" opacity="0.82"/><ellipse cx="200.7" cy="24.8" rx="3.6" ry="2.7" transform="rotate(126 200.7 24.8)" fill="#1c30b8" opacity="0.37"/><ellipse cx="225.7" cy="101.2" rx="2.8" ry="1.9" transform="rotate(92 225.7 101.2)" fill="#2048b0" opacity="0.45"/><ellipse cx="50.8" cy="124.6" rx="3.6" ry="3.0" transform="rotate(53 50.8 124.6)" fill="#2840e0" opacity="0.76"/><ellipse cx="19.6" cy="188.0" rx="2.2" ry="1.6" transform="rotate(16 19.6 188.0)" fill="#2048b0" opacity="0.54"/><ellipse cx="208.9" cy="46.0" rx="2.6" ry="1.9" transform="rotate(155 208.9 46.0)" fill="#3050f0" opacity="0.44"/><ellipse cx="148.0" cy="229.6" rx="3.4" ry="2.2" transform="rotate(157 148.0 229.6)" fill="#1828c0" opacity="0.58"/><ellipse cx="249.0" cy="42.8" rx="2.9" ry="2.0" transform="rotate(94 249.0 42.8)" fill="#2034d8" opacity="0.35"/><ellipse cx="217.7" cy="127.8" rx="2.9" ry="1.9" transform="rotate(76 217.7 127.8)" fill="#2034d8" opacity="0.57"/><ellipse cx="136.8" cy="70.1" rx="2.2" ry="1.6" transform="rotate(37 136.8 70.1)" fill="#1c3cc8" opacity="0.36"/><ellipse cx="124.0" cy="134.3" rx="2.6" ry="2.1" transform="rotate(144 124.0 134.3)" fill="#1828c0" opacity="0.63"/><ellipse cx="168.3" cy="167.7" rx="2.0" ry="1.2" transform="rotate(12 168.3 167.7)" fill="#3050f0" opacity="0.78"/><ellipse cx="55.7" cy="101.0" rx="2.3" ry="1.7" transform="rotate(38 55.7 101.0)" fill="#3050f0" opacity="0.69"/><ellipse cx="184.5" cy="46.9" rx="2.3" ry="1.4" transform="rotate(32 184.5 46.9)" fill="#2048b0" opacity="0.42"/><ellipse cx="218.7" cy="16.5" rx="2.3" ry="1.5" transform="rotate(166 218.7 16.5)" fill="#3050f0" opacity="0.45"/><ellipse cx="56.0" cy="165.7" rx="3.3" ry="2.1" transform="rotate(144 56.0 165.7)" fill="#3050f0" opacity="0.79"/><ellipse cx="232.7" cy="47.6" rx="2.2" ry="1.3" transform="rotate(17 232.7 47.6)" fill="#2048b0" opacity="0.29"/><ellipse cx="56.7" cy="191.7" rx="3.2" ry="2.0" transform="rotate(80 56.7 191.7)" fill="#1c30b8" opacity="0.51"/><ellipse cx="176.4" cy="9.6" rx="2.5" ry="2.0" transform="rotate(42 176.4 9.6)" fill="#3050f0" opacity="0.46"/><ellipse cx="182.4" cy="71.2" rx="2.4" ry="2.0" transform="rotate(99 182.4 71.2)" fill="#1828c0" opacity="0.31"/><ellipse cx="248.5" cy="90.0" rx="2.1" ry="1.6" transform="rotate(68 248.5 90.0)" fill="#1c3cc8" opacity="0.34"/><ellipse cx="176.0" cy="45.6" rx="2.3" ry="1.4" transform="rotate(33 176.0 45.6)" fill="#2840e0" opacity="0.43"/><ellipse cx="210.0" cy="28.1" rx="3.6" ry="2.5" transform="rotate(179 210.0 28.1)" fill="#3050f0" opacity="0.40"/><ellipse cx="88.2" cy="172.6" rx="2.8" ry="1.9" transform="rotate(167 88.2 172.6)" fill="#2034d8" opacity="0.53"/><ellipse cx="76.8" cy="134.3" rx="3.3" ry="2.9" transform="rotate(36 76.8 134.3)" fill="#1c30b8" opacity="0.56"/><ellipse cx="214.3" cy="52.3" rx="3.6" ry="2.1" transform="rotate(6 214.3 52.3)" fill="#3050f0" opacity="0.29"/><ellipse cx="205.1" cy="166.4" rx="2.8" ry="2.2" transform="rotate(134 205.1 166.4)" fill="#2034d8" opacity="0.77"/><ellipse cx="130.1" cy="22.4" rx="2.2" ry="1.8" transform="rotate(104 130.1 22.4)" fill="#2840e0" opacity="0.29"/><ellipse cx="186.1" cy="82.7" rx="3.1" ry="2.7" transform="rotate(16 186.1 82.7)" fill="#2034d8" opacity="0.47"/><ellipse cx="121.7" cy="34.3" rx="2.2" ry="1.5" transform="rotate(158 121.7 34.3)" fill="#2034d8" opacity="0.51"/><ellipse cx="137.2" cy="74.6" rx="2.4" ry="1.7" transform="rotate(102 137.2 74.6)" fill="#2034d8" opacity="0.39"/><ellipse cx="220.9" cy="115.4" rx="3.5" ry="2.9" transform="rotate(3 220.9 115.4)" fill="#2034d8" opacity="0.65"/><ellipse cx="144.6" cy="158.5" rx="2.4" ry="2.1" transform="rotate(135 144.6 158.5)" fill="#1828c0" opacity="0.79"/><ellipse cx="107.5" cy="143.6" rx="2.2" ry="1.7" transform="rotate(103 107.5 143.6)" fill="#2034d8" opacity="0.48"/><ellipse cx="59.3" cy="136.9" rx="3.3" ry="2.1" transform="rotate(128 59.3 136.9)" fill="#2034d8" opacity="0.78"/><ellipse cx="195.9" cy="40.2" rx="2.5" ry="2.2" transform="rotate(15 195.9 40.2)" fill="#2048b0" opacity="0.38"/><ellipse cx="2.7" cy="216.3" rx="2.7" ry="1.7" transform="rotate(73 2.7 216.3)" fill="#2034d8" opacity="0.77"/><ellipse cx="202.2" cy="177.1" rx="2.3" ry="2.1" transform="rotate(166 202.2 177.1)" fill="#1c3cc8" opacity="0.58"/><ellipse cx="252.8" cy="182.1" rx="2.8" ry="1.7" transform="rotate(90 252.8 182.1)" fill="#2048b0" opacity="0.58"/><ellipse cx="104.3" cy="149.7" rx="3.7" ry="2.9" transform="rotate(105 104.3 149.7)" fill="#2048b0" opacity="0.84"/><ellipse cx="189.0" cy="31.0" rx="3.4" ry="2.9" transform="rotate(169 189.0 31.0)" fill="#2034d8" opacity="0.45"/><ellipse cx="203.3" cy="135.8" rx="2.7" ry="2.1" transform="rotate(149 203.3 135.8)" fill="#2048b0" opacity="0.83"/><ellipse cx="189.6" cy="136.5" rx="3.1" ry="2.6" transform="rotate(114 189.6 136.5)" fill="#2034d8" opacity="0.84"/><ellipse cx="63.9" cy="192.8" rx="2.4" ry="2.1" transform="rotate(36 63.9 192.8)" fill="#1c30b8" opacity="0.67"/><ellipse cx="145.8" cy="214.6" rx="3.5" ry="2.9" transform="rotate(9 145.8 214.6)" fill="#1c3cc8" opacity="0.76"/><ellipse cx="173.1" cy="216.6" rx="3.4" ry="2.7" transform="rotate(73 173.1 216.6)" fill="#2034d8" opacity="0.54"/><ellipse cx="200.7" cy="152.6" rx="3.5" ry="2.6" transform="rotate(77 200.7 152.6)" fill="#2840e0" opacity="0.45"/><ellipse cx="4.1" cy="25.4" rx="2.7" ry="2.1" transform="rotate(109 4.1 25.4)" fill="#1c30b8" opacity="0.51"/><ellipse cx="251.6" cy="43.1" rx="3.5" ry="2.2" transform="rotate(73 251.6 43.1)" fill="#3050f0" opacity="0.46"/><ellipse cx="173.1" cy="9.5" rx="2.3" ry="1.5" transform="rotate(49 173.1 9.5)" fill="#1828c0" opacity="0.36"/><ellipse cx="225.6" cy="140.4" rx="3.5" ry="3.0" transform="rotate(71 225.6 140.4)" fill="#1c30b8" opacity="0.58"/><ellipse cx="200.5" cy="139.5" rx="3.5" ry="2.1" transform="rotate(174 200.5 139.5)" fill="#1c30b8" opacity="0.66"/><ellipse cx="44.5" cy="217.4" rx="2.8" ry="2.2" transform="rotate(146 44.5 217.4)" fill="#2840e0" opacity="0.74"/><ellipse cx="249.6" cy="169.0" rx="3.3" ry="2.8" transform="rotate(120 249.6 169.0)" fill="#1828c0" opacity="0.82"/><ellipse cx="168.9" cy="17.5" rx="2.8" ry="2.2" transform="rotate(172 168.9 17.5)" fill="#2840e0" opacity="0.34"/><ellipse cx="174.0" cy="215.7" rx="3.4" ry="2.4" transform="rotate(11 174.0 215.7)" fill="#1c3cc8" opacity="0.65"/><ellipse cx="247.5" cy="13.1" rx="3.2" ry="2.4" transform="rotate(100 247.5 13.1)" fill="#1c30b8" opacity="0.34"/><ellipse cx="38.6" cy="139.6" rx="2.8" ry="2.5" transform="rotate(171 38.6 139.6)" fill="#1c30b8" opacity="0.50"/><ellipse cx="226.0" cy="33.2" rx="3.0" ry="2.0" transform="rotate(104 226.0 33.2)" fill="#2034d8" opacity="0.51"/><ellipse cx="149.5" cy="225.9" rx="3.1" ry="2.2" transform="rotate(44 149.5 225.9)" fill="#2048b0" opacity="0.67"/><ellipse cx="248.0" cy="149.2" rx="3.4" ry="3.0" transform="rotate(122 248.0 149.2)" fill="#1c30b8" opacity="0.65"/><ellipse cx="91.3" cy="207.7" rx="2.6" ry="2.1" transform="rotate(150 91.3 207.7)" fill="#1c30b8" opacity="0.78"/><ellipse cx="130.8" cy="201.8" rx="2.3" ry="2.0" transform="rotate(133 130.8 201.8)" fill="#1828c0" opacity="0.72"/><ellipse cx="148.9" cy="223.4" rx="3.3" ry="2.3" transform="rotate(65 148.9 223.4)" fill="#1c3cc8" opacity="0.52"/><ellipse cx="239.2" cy="45.4" rx="2.5" ry="1.8" transform="rotate(79 239.2 45.4)" fill="#2034d8" opacity="0.43"/><ellipse cx="81.0" cy="182.5" rx="2.8" ry="2.4" transform="rotate(20 81.0 182.5)" fill="#3050f0" opacity="0.63"/><ellipse cx="161.5" cy="179.1" rx="2.5" ry="2.0" transform="rotate(27 161.5 179.1)" fill="#2048b0" opacity="0.66"/><ellipse cx="215.0" cy="94.7" rx="2.1" ry="1.6" transform="rotate(70 215.0 94.7)" fill="#1c3cc8" opacity="0.49"/><ellipse cx="73.1" cy="144.9" rx="2.4" ry="2.0" transform="rotate(139 73.1 144.9)" fill="#2034d8" opacity="0.66"/><ellipse cx="77.5" cy="138.5" rx="2.6" ry="1.6" transform="rotate(176 77.5 138.5)" fill="#2034d8" opacity="0.80"/><ellipse cx="152.8" cy="190.5" rx="3.4" ry="2.2" transform="rotate(128 152.8 190.5)" fill="#2840e0" opacity="0.52"/><ellipse cx="183.3" cy="170.7" rx="2.2" ry="1.8" transform="rotate(73 183.3 170.7)" fill="#2048b0" opacity="0.83"/><ellipse cx="204.3" cy="80.4" rx="2.3" ry="1.7" transform="rotate(157 204.3 80.4)" fill="#3050f0" opacity="0.45"/><ellipse cx="235.1" cy="66.4" rx="2.4" ry="1.4" transform="rotate(123 235.1 66.4)" fill="#1c30b8" opacity="0.29"/><ellipse cx="145.5" cy="54.2" rx="2.7" ry="2.3" transform="rotate(39 145.5 54.2)" fill="#1c3cc8" opacity="0.34"/><ellipse cx="199.9" cy="192.8" rx="2.3" ry="1.4" transform="rotate(121 199.9 192.8)" fill="#2048b0" opacity="0.55"/><ellipse cx="71.6" cy="7.7" rx="3.6" ry="2.9" transform="rotate(69 71.6 7.7)" fill="#2840e0" opacity="0.50"/><ellipse cx="178.4" cy="140.8" rx="2.5" ry="1.9" transform="rotate(12 178.4 140.8)" fill="#3050f0" opacity="0.69"/><ellipse cx="154.0" cy="207.9" rx="2.5" ry="2.1" transform="rotate(65 154.0 207.9)" fill="#3050f0" opacity="0.84"/><ellipse cx="91.2" cy="160.9" rx="2.1" ry="1.6" transform="rotate(151 91.2 160.9)" fill="#2840e0" opacity="0.54"/><ellipse cx="193.7" cy="102.8" rx="2.9" ry="2.4" transform="rotate(176 193.7 102.8)" fill="#3050f0" opacity="0.67"/><ellipse cx="10.0" cy="190.3" rx="2.2" ry="1.9" transform="rotate(40 10.0 190.3)" fill="#1c3cc8" opacity="0.82"/><ellipse cx="134.5" cy="53.0" rx="2.9" ry="2.5" transform="rotate(148 134.5 53.0)" fill="#2840e0" opacity="0.47"/><ellipse cx="197.2" cy="6.5" rx="2.7" ry="1.7" transform="rotate(11 197.2 6.5)" fill="#1c3cc8" opacity="0.34"/><ellipse cx="28.5" cy="89.8" rx="2.7" ry="2.4" transform="rotate(120 28.5 89.8)" fill="#2034d8" opacity="0.77"/><ellipse cx="83.5" cy="226.8" rx="2.1" ry="1.9" transform="rotate(86 83.5 226.8)" fill="#1828c0" opacity="0.62"/><ellipse cx="223.2" cy="142.1" rx="2.3" ry="1.6" transform="rotate(111 223.2 142.1)" fill="#2034d8" opacity="0.61"/><ellipse cx="49.2" cy="169.3" rx="2.9" ry="2.4" transform="rotate(79 49.2 169.3)" fill="#1828c0" opacity="0.77"/><ellipse cx="196.0" cy="46.3" rx="3.3" ry="2.9" transform="rotate(151 196.0 46.3)" fill="#2840e0" opacity="0.45"/><ellipse cx="233.2" cy="166.2" rx="3.2" ry="2.7" transform="rotate(11 233.2 166.2)" fill="#1828c0" opacity="0.62"/><ellipse cx="162.6" cy="171.9" rx="2.9" ry="2.3" transform="rotate(100 162.6 171.9)" fill="#1c3cc8" opacity="0.52"/><ellipse cx="251.3" cy="70.3" rx="2.1" ry="1.3" transform="rotate(32 251.3 70.3)" fill="#2840e0" opacity="0.37"/><ellipse cx="180.8" cy="177.7" rx="2.6" ry="1.9" transform="rotate(154 180.8 177.7)" fill="#2840e0" opacity="0.76"/><ellipse cx="251.1" cy="209.7" rx="3.4" ry="2.9" transform="rotate(86 251.1 209.7)" fill="#2048b0" opacity="0.84"/><ellipse cx="133.9" cy="57.8" rx="2.7" ry="2.3" transform="rotate(64 133.9 57.8)" fill="#1c3cc8" opacity="0.28"/><ellipse cx="180.0" cy="217.4" rx="3.7" ry="2.4" transform="rotate(79 180.0 217.4)" fill="#1c3cc8" opacity="0.74"/><ellipse cx="227.2" cy="100.4" rx="2.2" ry="1.6" transform="rotate(20 227.2 100.4)" fill="#1c3cc8" opacity="0.68"/><ellipse cx="2.3" cy="191.0" rx="3.3" ry="2.6" transform="rotate(83 2.3 191.0)" fill="#2034d8" opacity="0.53"/><ellipse cx="231.7" cy="197.5" rx="2.6" ry="2.0" transform="rotate(101 231.7 197.5)" fill="#1c30b8" opacity="0.64"/><ellipse cx="229.6" cy="88.0" rx="2.2" ry="1.6" transform="rotate(106 229.6 88.0)" fill="#1828c0" opacity="0.50"/><ellipse cx="145.0" cy="211.7" rx="3.2" ry="2.6" transform="rotate(165 145.0 211.7)" fill="#2048b0" opacity="0.48"/></g>
<g filter="url(#nbg)" fill="none" stroke-linecap="round"><path d="M-1.6 3.4C1.4 5.9 10.4 16.1 16.5 18.5C22.6 20.9 29.6 15.1 35.0 17.9C40.4 20.7 45.0 30.0 49.0 35.4C53.1 40.7 57.5 47.6 59.2 50.0" stroke="#60c838" stroke-width="0.58" opacity="0.87"/><path d="M7.0 9.0C10.7 10.7 23.1 16.1 29.4 19.0C35.7 22.0 40.3 23.7 45.0 26.6C49.7 29.5 54.2 32.6 57.6 36.2C61.1 39.8 64.4 46.3 65.7 48.4" stroke="#289830" stroke-width="1.02" opacity="0.80"/><path d="M4.0 -2.9C7.4 -0.0 17.8 9.5 24.4 14.3C31.1 19.1 38.2 20.7 43.8 25.9C49.4 31.1 54.7 41.7 58.1 45.2C61.5 48.8 63.4 46.9 64.4 47.3" stroke="#60c838" stroke-width="1.06" opacity="0.99"/><path d="M-0.5 3.8C3.0 4.8 13.5 6.5 20.1 10.2C26.8 13.9 34.0 20.7 39.4 26.1C44.9 31.4 49.3 37.8 52.9 42.4C56.6 46.9 60.0 51.4 61.4 53.3" stroke="#60c838" stroke-width="1.24" opacity="0.92"/><path d="M4.9 7.4C8.9 9.4 22.2 15.9 29.2 19.1C36.2 22.3 42.1 23.8 46.7 26.7C51.4 29.7 53.6 31.8 57.1 36.8C60.6 41.8 65.9 53.4 67.7 56.7" stroke="#30a848" stroke-width="1.15" opacity="0.70"/><path d="M-2.7 -2.9C1.0 0.1 11.9 10.4 19.0 14.7C26.1 18.9 34.4 17.6 39.8 22.6C45.1 27.6 48.1 38.6 51.1 44.6C54.1 50.6 56.6 56.2 57.7 58.5" stroke="#48c030" stroke-width="1.04" opacity="0.77"/><path d="M-2.2 0.4C1.5 2.6 13.1 9.0 20.1 13.7C27.1 18.3 34.3 24.4 39.6 28.4C45.0 32.4 48.6 34.0 52.1 37.5C55.6 41.0 59.1 47.5 60.5 49.5" stroke="#48c030" stroke-width="0.62" opacity="0.72"/><path d="M-4.1 6.6C-0.6 6.3 10.5 2.9 17.2 5.1C24.0 7.3 30.6 14.3 36.3 19.7C42.1 25.1 47.8 32.8 51.5 37.8C55.2 42.8 57.4 47.7 58.6 49.7" stroke="#40b038" stroke-width="0.78" opacity="0.70"/><path d="M-1.1 1.0C2.5 2.7 13.4 7.8 20.6 11.4C27.8 15.0 36.4 18.2 41.9 22.8C47.5 27.4 50.9 34.5 54.1 39.1C57.2 43.8 59.8 48.8 61.0 50.7" stroke="#40b038" stroke-width="0.70" opacity="0.90"/><path d="M-3.1 0.1C0.7 1.6 13.0 5.6 20.1 9.2C27.1 12.8 33.8 16.2 39.1 21.7C44.5 27.3 49.1 37.9 52.3 42.6C55.5 47.3 57.5 48.6 58.6 49.8" stroke="#a0e040" stroke-width="0.92" opacity="0.75"/><path d="M2.1 4.4C5.9 4.9 17.7 4.7 24.7 7.6C31.6 10.5 38.1 16.2 43.5 21.7C48.9 27.3 53.9 35.5 57.2 40.9C60.5 46.3 62.2 52.0 63.2 54.2" stroke="#289830" stroke-width="0.63" opacity="0.84"/><path d="M0.1 2.2C3.7 3.9 15.1 9.0 22.0 12.7C29.0 16.5 36.1 20.3 41.7 24.8C47.3 29.3 52.3 35.4 55.7 39.9C59.0 44.4 60.9 49.8 61.9 51.8" stroke="#289830" stroke-width="1.08" opacity="0.70"/><path d="M-3.1 -0.4C0.5 1.2 12.3 4.0 18.9 9.1C25.6 14.1 31.7 23.7 36.8 30.1C41.9 36.6 46.2 44.9 49.5 47.9C52.9 50.8 55.5 48.0 56.7 48.0" stroke="#60c838" stroke-width="0.80" opacity="0.94"/><path d="M1.7 -1.9C5.8 -0.3 19.0 3.6 26.3 7.4C33.7 11.2 40.7 14.8 45.9 21.0C51.1 27.1 54.1 38.7 57.4 44.3C60.7 50.0 64.4 53.1 65.8 54.8" stroke="#40b038" stroke-width="1.21" opacity="0.72"/><path d="M5.6 6.4C9.5 8.5 22.2 15.2 28.7 18.7C35.2 22.2 39.5 23.4 44.5 27.6C49.6 31.8 54.9 40.6 59.0 43.7C63.0 46.8 67.2 45.8 68.8 46.2" stroke="#48c030" stroke-width="0.90" opacity="0.85"/><path d="M5.9 -1.7C8.8 0.3 16.2 4.9 23.2 10.0C30.2 15.2 41.8 23.3 47.8 29.2C53.9 35.2 56.2 42.8 59.4 45.9C62.5 48.9 65.5 47.4 66.7 47.7" stroke="#289830" stroke-width="0.91" opacity="0.80"/><path d="M-0.9 0.7C2.6 2.2 13.3 5.8 20.4 9.4C27.4 13.0 35.7 17.2 41.2 22.3C46.7 27.3 50.1 34.3 53.6 39.5C57.0 44.7 60.3 51.1 61.7 53.4" stroke="#c0d040" stroke-width="0.83" opacity="0.91"/><path d="M0.9 111.2C4.0 109.1 13.4 102.4 19.5 98.8C25.5 95.3 31.0 92.4 37.0 89.9C42.9 87.5 52.2 85.1 55.2 84.1" stroke="#e8a020" stroke-width="0.62" opacity="0.56"/><path d="M-3.5 106.3C-0.4 105.1 8.8 101.2 14.9 98.7C21.0 96.1 26.7 93.6 32.9 90.9C39.1 88.2 49.0 83.7 52.2 82.2" stroke="#c8d030" stroke-width="0.93" opacity="0.90"/><path d="M4.8 114.8C7.2 112.2 13.2 103.9 19.4 99.3C25.6 94.7 35.0 88.6 41.8 87.3C48.5 85.9 56.8 90.4 59.9 91.1" stroke="#f0c030" stroke-width="0.68" opacity="0.58"/><path d="M1.4 112.1C4.6 111.2 14.2 109.3 20.9 106.9C27.7 104.4 36.2 100.2 42.0 97.3C47.9 94.4 53.8 90.8 56.2 89.5" stroke="#e88838" stroke-width="0.54" opacity="0.64"/><path d="M7.9 114.6C10.6 111.0 18.3 95.3 23.8 92.5C29.3 89.7 35.0 98.0 40.8 97.9C46.7 97.8 55.8 92.8 58.9 91.8" stroke="#e8a020" stroke-width="0.95" opacity="0.68"/><path d="M5.0 104.9C7.7 104.8 15.5 105.6 21.1 104.2C26.7 102.7 32.2 99.7 38.5 96.2C44.8 92.6 55.5 85.2 59.0 83.0" stroke="#50d830" stroke-width="0.63" opacity="0.68"/><path d="M-3.3 105.8C-0.2 106.1 9.4 108.3 15.1 107.2C20.8 106.2 25.1 102.4 31.0 99.5C37.0 96.5 47.5 91.2 50.8 89.6" stroke="#e06030" stroke-width="0.76" opacity="0.58"/><path d="M-3.7 104.5C-1.0 103.1 6.4 98.7 12.3 96.2C18.2 93.8 25.7 92.3 31.8 89.7C38.0 87.1 46.3 82.2 49.3 80.7" stroke="#e06030" stroke-width="1.05" opacity="0.93"/><path d="M5.6 115.5C7.9 113.8 13.8 109.2 19.5 105.2C25.3 101.2 33.8 93.8 40.3 91.4C46.8 89.1 55.5 91.3 58.6 91.2" stroke="#50d830" stroke-width="0.69" opacity="0.62"/><path d="M3.1 113.6C6.0 112.2 14.0 109.2 20.5 105.2C26.9 101.2 36.0 92.3 41.9 89.6C47.8 87.0 53.5 89.3 55.9 89.3" stroke="#f0c030" stroke-width="0.51" opacity="0.82"/><path d="M-2.1 113.5C0.4 110.9 6.8 101.4 12.6 97.5C18.3 93.5 26.2 92.2 32.6 89.9C38.9 87.6 47.5 84.7 50.5 83.7" stroke="#e06030" stroke-width="1.01" opacity="0.61"/><path d="M-3.7 107.6C-0.4 106.3 9.8 102.8 16.2 100.1C22.6 97.4 29.0 94.0 34.8 91.4C40.6 88.9 48.3 86.0 51.0 84.9" stroke="#e8a020" stroke-width="0.86" opacity="0.75"/><path d="M0.8 111.4C3.9 110.1 13.0 106.6 19.1 103.2C25.2 99.9 31.6 94.2 37.5 91.5C43.4 88.8 51.8 87.8 54.6 87.0" stroke="#e88838" stroke-width="0.63" opacity="0.63"/><path d="M-3.1 104.6C-1.0 105.6 4.3 111.8 9.9 110.7C15.6 109.6 24.0 102.6 30.5 98.1C37.1 93.5 46.2 85.8 49.3 83.3" stroke="#e88838" stroke-width="0.75" opacity="0.70"/><path d="M0.0 128.6C3.4 126.3 13.8 118.9 20.6 114.3C27.3 109.8 34.1 104.4 40.3 101.5C46.6 98.7 55.0 98.1 57.9 97.4" stroke="#289830" stroke-width="0.46" opacity="0.57"/><path d="M-2.8 124.5C0.3 122.0 8.8 113.2 15.6 109.1C22.3 105.0 31.5 102.2 38.0 99.9C44.4 97.5 51.6 95.8 54.3 94.9" stroke="#88c030" stroke-width="0.43" opacity="0.69"/><path d="M-4.2 133.3C-0.6 129.8 10.6 116.1 17.5 111.8C24.3 107.5 30.7 110.8 36.9 107.6C43.1 104.4 51.6 95.0 54.5 92.5" stroke="#88c030" stroke-width="0.47" opacity="0.58"/><path d="M-0.8 127.1C2.2 124.4 10.9 115.4 17.1 110.7C23.3 106.0 30.1 101.3 36.6 98.9C43.2 96.4 53.1 96.3 56.4 95.8" stroke="#30a848" stroke-width="0.56" opacity="0.72"/><path d="M-0.8 128.6C2.7 126.1 13.5 118.1 20.4 113.8C27.2 109.5 34.0 105.3 40.2 102.7C46.5 100.0 54.9 98.7 57.8 97.9" stroke="#60c838" stroke-width="0.81" opacity="0.78"/><path d="M-3.4 130.9C0.2 128.5 11.3 121.9 18.3 116.5C25.2 111.0 32.2 101.9 38.2 98.2C44.3 94.5 51.7 95.1 54.4 94.4" stroke="#88c030" stroke-width="0.84" opacity="0.77"/><path d="M0.4 127.3C3.8 125.1 14.0 118.3 20.4 114.1C26.9 110.0 32.9 105.2 39.1 102.6C45.3 99.9 54.5 98.8 57.6 98.0" stroke="#88c030" stroke-width="0.80" opacity="0.56"/><path d="M5.6 131.2C8.9 129.7 19.3 126.4 25.5 122.2C31.8 117.9 37.0 110.8 43.2 105.8C49.4 100.8 59.4 94.5 62.6 92.3" stroke="#38b028" stroke-width="0.84" opacity="0.77"/><path d="M-8.4 135.2C-4.1 131.0 10.3 116.1 17.8 110.1C25.2 104.1 30.5 102.5 36.3 99.2C42.0 96.0 49.4 92.1 52.0 90.6" stroke="#38b028" stroke-width="0.63" opacity="0.59"/><path d="M-0.6 128.8C2.7 126.3 12.8 117.7 19.4 113.5C26.1 109.2 33.3 105.7 39.5 103.2C45.8 100.6 54.1 99.1 57.1 98.2" stroke="#30a848" stroke-width="0.73" opacity="0.56"/><path d="M0.8 51.0C4.2 50.7 14.6 48.7 20.9 49.2C27.2 49.7 33.5 52.7 38.8 54.2C44.1 55.7 50.3 57.5 52.6 58.1" stroke="#b0c030" stroke-width="0.60" opacity="0.61"/><path d="M-1.1 51.0C2.4 50.5 13.1 48.0 19.6 48.3C26.2 48.6 33.0 51.2 38.2 53.0C43.3 54.8 48.5 58.2 50.6 59.2" stroke="#70b030" stroke-width="0.41" opacity="0.76"/><path d="M121.6 60.2C126.4 60.4 140.9 62.6 150.8 61.3C160.7 59.9 170.9 56.4 180.8 52.0C190.8 47.6 198.1 42.6 210.3 35.1C222.5 27.6 246.6 11.7 253.9 7.0" stroke="#38b028" stroke-width="0.92" opacity="0.89"/><path d="M121.8 59.3C126.3 59.7 139.6 63.2 149.1 61.9C158.6 60.6 168.8 56.1 178.8 51.6C188.9 47.0 196.8 42.5 209.2 34.8C221.6 27.2 245.9 10.5 253.3 5.7" stroke="#40b038" stroke-width="0.93" opacity="0.74"/><path d="M121.4 59.6C126.1 60.1 139.6 64.1 149.3 63.0C159.0 61.8 169.6 57.6 179.6 52.7C189.5 47.8 196.8 41.2 209.1 33.5C221.3 25.9 245.7 11.1 253.0 6.6" stroke="#60c838" stroke-width="1.00" opacity="0.77"/><path d="M121.9 59.1C126.4 59.4 139.9 61.4 149.1 60.5C158.4 59.6 167.4 58.7 177.3 53.9C187.1 49.0 196.0 39.7 208.5 31.5C220.9 23.3 244.5 9.1 251.7 4.6" stroke="#60c838" stroke-width="1.02" opacity="0.97"/><path d="M121.7 59.2C126.4 59.5 140.2 62.5 149.7 61.2C159.3 60.0 169.1 56.1 179.1 51.7C189.0 47.2 197.3 41.9 209.4 34.5C221.6 27.1 244.9 11.9 252.0 7.3" stroke="#40b038" stroke-width="0.71" opacity="0.98"/><path d="M120.2 56.3C124.8 57.0 138.1 61.3 147.9 60.5C157.6 59.6 168.9 54.9 178.6 50.9C188.2 46.9 194.0 44.2 205.8 36.4C217.6 28.6 242.0 9.5 249.2 4.1" stroke="#38b028" stroke-width="1.06" opacity="0.79"/><path d="M120.5 61.9C125.2 61.8 139.5 63.4 149.1 61.3C158.6 59.2 168.2 54.3 177.8 49.3C187.4 44.4 194.4 39.1 206.7 31.5C219.1 23.9 244.4 8.5 251.9 3.9" stroke="#30a848" stroke-width="0.59" opacity="0.81"/><path d="M124.2 61.2C128.9 61.6 143.1 65.5 152.6 63.6C162.1 61.7 171.5 54.4 181.2 49.6C190.8 44.8 198.3 42.1 210.7 34.9C223.1 27.8 247.9 11.5 255.4 6.8" stroke="#48c030" stroke-width="0.75" opacity="0.77"/><path d="M122.8 58.6C127.4 59.4 140.8 64.3 150.4 63.3C160.1 62.2 170.7 57.1 180.7 52.3C190.7 47.4 198.4 41.9 210.6 34.1C222.7 26.3 246.3 10.3 253.5 5.6" stroke="#88c030" stroke-width="1.04" opacity="0.77"/><path d="M123.6 70.2C128.2 71.5 141.5 75.1 151.0 78.4C160.4 81.8 169.6 86.6 180.6 90.4C191.6 94.1 204.8 96.5 216.9 101.1C229.1 105.6 247.3 114.8 253.4 117.6" stroke="#40c0a0" stroke-width="0.48" opacity="0.91"/><path d="M121.9 66.8C126.1 68.3 138.0 71.0 147.2 75.7C156.4 80.5 165.9 91.5 177.1 95.3C188.2 99.2 202.0 95.5 214.4 98.9C226.8 102.2 245.4 112.6 251.6 115.4" stroke="#40c0a0" stroke-width="0.58" opacity="0.92"/><path d="M127.3 71.9C131.2 72.8 141.6 74.0 150.6 77.4C159.7 80.9 170.5 88.2 181.5 92.5C192.6 96.7 204.6 98.5 216.9 103.0C229.2 107.5 248.9 116.8 255.3 119.5" stroke="#289830" stroke-width="0.48" opacity="0.84"/><path d="M123.2 69.8C127.5 71.5 139.7 75.8 148.7 79.6C157.8 83.5 166.7 89.2 177.4 93.0C188.1 96.7 200.7 98.0 213.1 102.0C225.5 106.0 245.2 114.3 251.6 116.8" stroke="#40b038" stroke-width="0.50" opacity="0.69"/><path d="M120.0 65.9C124.3 68.5 135.9 77.9 145.4 81.8C154.9 85.7 165.6 86.4 177.0 89.2C188.3 92.0 201.4 94.5 213.5 98.6C225.5 102.8 243.4 111.4 249.3 114.0" stroke="#40c0a0" stroke-width="0.87" opacity="0.83"/><path d="M118.2 65.2C123.1 68.3 138.0 79.4 147.8 83.4C157.7 87.4 167.1 87.3 177.3 89.4C187.5 91.4 197.4 90.0 209.1 95.9C220.8 101.9 241.0 120.1 247.4 124.9" stroke="#289830" stroke-width="0.68" opacity="0.70"/><path d="M122.2 70.8C126.3 71.6 138.2 72.8 147.0 75.8C155.8 78.8 163.9 83.9 174.9 88.5C185.9 93.2 200.0 99.3 212.8 103.8C225.6 108.2 245.2 113.5 251.7 115.5" stroke="#50b0d0" stroke-width="0.63" opacity="0.79"/><path d="M121.7 72.7C125.9 74.0 137.8 77.9 147.0 80.3C156.2 82.8 165.7 84.6 176.9 87.5C188.1 90.4 201.8 92.3 214.2 97.7C226.7 103.2 245.5 116.4 251.7 120.1" stroke="#48c030" stroke-width="0.69" opacity="0.60"/><path d="M125.6 70.1C129.9 71.4 142.1 73.9 151.3 77.8C160.5 81.6 170.4 89.4 181.1 93.1C191.8 96.8 203.4 95.6 215.6 99.8C227.8 104.0 247.9 115.4 254.4 118.5" stroke="#50b0d0" stroke-width="0.91" opacity="0.61"/><path d="M123.8 83.2C127.9 85.4 140.2 91.4 148.7 96.6C157.2 101.7 165.4 104.4 174.5 114.0C183.6 123.7 196.4 135.4 203.4 154.5C210.3 173.5 214.1 215.8 216.2 228.1" stroke="#48c030" stroke-width="0.46" opacity="0.71"/><path d="M123.6 82.9C127.4 86.1 138.4 96.4 146.2 102.1C154.1 107.8 161.7 109.0 170.7 117.1C179.6 125.2 192.1 132.2 199.8 150.7C207.5 169.2 213.9 215.1 216.7 228.0" stroke="#60c838" stroke-width="0.43" opacity="0.92"/><path d="M119.2 86.1C123.1 87.9 134.8 92.5 142.8 97.3C150.8 102.1 158.5 106.8 167.2 114.9C175.9 123.1 187.9 127.6 195.0 146.0C202.2 164.4 207.6 212.2 210.1 225.5" stroke="#289830" stroke-width="0.49" opacity="0.63"/><path d="M122.1 82.7C126.0 85.5 137.4 93.9 145.6 99.6C153.8 105.3 162.1 108.3 171.3 116.8C180.5 125.3 193.8 131.8 201.0 150.4C208.2 169.0 212.2 215.4 214.5 228.4" stroke="#38b028" stroke-width="0.37" opacity="0.91"/><path d="M118.6 76.9C122.6 81.7 134.2 99.5 142.3 105.6C150.3 111.7 157.7 106.5 166.8 113.6C176.0 120.6 189.9 127.9 197.3 148.0C204.6 168.2 208.6 220.0 210.9 234.4" stroke="#38b028" stroke-width="0.71" opacity="0.84"/><path d="M99.9 108.5C102.5 111.2 110.8 119.3 115.5 124.8C120.2 130.3 124.8 133.8 128.1 141.5C131.4 149.1 133.4 160.5 135.2 170.5C137.1 180.4 136.7 191.3 139.1 201.0C141.6 210.7 148.3 224.1 150.1 228.8" stroke="#40b038" stroke-width="0.76" opacity="0.71"/><path d="M101.2 108.8C103.7 111.6 111.6 119.8 116.2 125.5C120.8 131.3 125.6 136.1 128.9 143.4C132.1 150.8 134.0 160.2 135.8 169.6C137.7 179.0 137.8 189.7 140.1 199.6C142.5 209.5 148.3 224.2 150.0 229.1" stroke="#289830" stroke-width="0.69" opacity="0.95"/><path d="M103.4 111.2C105.8 113.9 113.4 122.6 117.8 127.9C122.2 133.2 126.5 135.4 129.9 142.7C133.4 150.1 136.3 161.4 138.4 171.8C140.6 182.1 140.3 196.1 142.7 204.9C145.0 213.7 150.9 221.4 152.5 224.6" stroke="#a0e040" stroke-width="0.57" opacity="0.80"/><path d="M98.1 106.6C100.5 109.4 107.9 117.8 112.7 123.6C117.5 129.3 123.3 133.8 126.8 141.2C130.3 148.5 131.7 158.1 133.7 167.6C135.7 177.2 136.2 188.2 138.9 198.6C141.6 209.0 147.9 224.6 149.7 229.8" stroke="#88c030" stroke-width="0.58" opacity="0.73"/><path d="M99.3 110.5C101.6 113.1 108.5 121.2 112.9 126.1C117.3 131.0 122.2 133.1 125.8 140.1C129.4 147.1 132.2 158.2 134.5 168.2C136.9 178.2 137.6 190.2 139.9 200.1C142.3 210.1 147.2 223.2 148.6 227.9" stroke="#e0c030" stroke-width="0.83" opacity="0.69"/><path d="M103.7 111.2C106.2 113.9 114.3 122.3 118.7 127.7C123.1 133.1 126.8 136.9 130.1 143.7C133.4 150.5 136.3 158.7 138.5 168.4C140.7 178.1 140.8 191.2 143.2 201.9C145.7 212.7 151.6 227.8 153.3 233.0" stroke="#48c030" stroke-width="0.56" opacity="0.87"/><path d="M99.3 107.7C101.8 110.7 109.7 120.2 114.5 125.9C119.3 131.7 124.6 134.7 128.1 142.0C131.6 149.2 133.7 159.9 135.5 169.4C137.3 179.0 136.3 189.6 138.8 199.4C141.2 209.2 148.4 223.6 150.3 228.4" stroke="#88c030" stroke-width="1.00" opacity="0.75"/><path d="M100.6 108.6C103.1 111.6 110.7 120.7 115.4 126.5C120.1 132.3 125.5 136.2 129.0 143.4C132.5 150.7 134.7 160.5 136.5 169.9C138.3 179.2 137.7 189.6 139.9 199.5C142.2 209.4 148.3 224.5 149.9 229.5" stroke="#289830" stroke-width="0.69" opacity="0.99"/><path d="M100.9 108.6C103.3 111.4 110.9 119.5 115.5 125.2C120.0 130.8 124.4 135.0 127.9 142.5C131.5 150.0 134.7 160.9 137.0 170.4C139.2 179.8 139.0 189.3 141.3 199.2C143.7 209.1 149.5 224.6 151.2 229.7" stroke="#40b038" stroke-width="0.83" opacity="0.83"/><path d="M97.3 110.5C100.1 113.1 109.2 120.3 114.0 125.9C118.8 131.5 123.0 137.1 126.1 144.1C129.3 151.1 131.2 158.1 133.0 167.8C134.8 177.4 134.5 191.6 137.0 202.0C139.4 212.3 146.0 225.3 147.8 230.0" stroke="#e0c030" stroke-width="0.95" opacity="0.67"/><path d="M113.9 99.2C117.3 103.3 127.4 116.0 134.2 123.9C140.9 131.9 146.4 136.5 154.3 146.8C162.2 157.1 177.0 179.2 181.6 185.7" stroke="#88c030" stroke-width="0.56" opacity="0.68"/><path d="M112.2 99.6C115.2 103.1 124.2 112.2 130.4 120.7C136.6 129.3 141.2 140.5 149.5 150.9C157.8 161.2 175.0 177.5 180.0 182.8" stroke="#38b028" stroke-width="0.77" opacity="0.64"/><path d="M113.1 99.7C116.0 103.2 124.3 112.2 130.7 120.4C137.0 128.6 142.7 138.4 151.1 148.9C159.5 159.5 176.1 177.9 181.1 183.7" stroke="#88c030" stroke-width="0.73" opacity="0.56"/><path d="M111.3 100.8C114.4 103.8 123.6 110.8 129.8 118.8C136.0 126.8 140.4 138.0 148.7 148.8C157.0 159.5 174.4 177.6 179.5 183.3" stroke="#289830" stroke-width="0.58" opacity="0.57"/><path d="M112.5 100.2C115.5 103.5 124.0 111.4 130.2 119.9C136.3 128.3 141.1 140.5 149.3 150.9C157.5 161.3 174.3 176.9 179.3 182.1" stroke="#40b038" stroke-width="0.50" opacity="0.93"/><path d="M94.8 27.6C96.4 25.2 100.7 18.0 104.5 13.5C108.2 9.0 115.2 2.7 117.3 0.5" stroke="#88c030" stroke-width="0.37" opacity="0.52"/><path d="M100.7 33.4C102.1 31.3 104.5 25.3 108.7 20.7C113.0 16.0 123.4 8.3 126.3 5.8" stroke="#40b038" stroke-width="0.59" opacity="0.63"/><path d="M96.0 27.9C97.7 25.7 102.3 19.1 106.0 14.6C109.8 10.2 116.4 3.6 118.4 1.4" stroke="#c07030" stroke-width="0.60" opacity="0.79"/><path d="M97.9 26.8C99.9 24.2 106.3 15.1 110.1 11.1C113.8 7.1 118.7 4.2 120.4 2.8" stroke="#30a848" stroke-width="0.48" opacity="0.77"/><path d="M96.1 27.5C97.7 25.3 101.7 18.8 105.4 14.1C109.0 9.3 115.8 1.6 117.9 -0.9" stroke="#38b028" stroke-width="0.34" opacity="0.68"/><path d="M100.1 23.3C101.2 22.2 102.9 19.9 106.7 16.4C110.5 12.9 120.0 4.8 122.7 2.4" stroke="#60c838" stroke-width="0.45" opacity="0.75"/><path d="M93.7 27.4C95.2 24.8 98.6 16.0 102.5 11.8C106.5 7.5 115.0 3.5 117.5 1.8" stroke="#48c030" stroke-width="0.41" opacity="0.43"/><path d="M94.3 27.5C96.1 25.3 101.0 18.8 105.0 14.1C109.1 9.3 116.2 1.6 118.4 -0.9" stroke="#48c030" stroke-width="0.61" opacity="0.47"/><path d="M88.8 23.7C91.0 21.9 98.1 17.5 101.9 12.6C105.7 7.7 109.9 -2.6 111.6 -5.6" stroke="#289830" stroke-width="0.51" opacity="0.55"/><path d="M80.1 28.4C79.5 24.0 76.0 7.0 76.7 1.9C77.4 -3.1 83.1 -1.5 84.4 -2.2" stroke="#289830" stroke-width="0.35" opacity="0.43"/><path d="M86.8 30.8C86.9 27.1 86.6 13.2 87.7 8.9C88.8 4.7 92.5 6.0 93.4 5.4" stroke="#40b038" stroke-width="0.54" opacity="0.45"/><path d="M77.6 21.8C78.4 19.9 81.4 13.4 82.3 10.3C83.2 7.2 83.0 4.3 83.1 3.1" stroke="#c07030" stroke-width="0.60" opacity="0.50"/><path d="M84.9 29.0C85.9 25.3 89.5 11.2 90.9 7.0C92.3 2.7 92.9 4.1 93.3 3.6" stroke="#289830" stroke-width="0.40" opacity="0.61"/><path d="M81.2 26.2C81.6 23.7 82.6 15.8 83.6 11.5C84.7 7.2 86.6 2.1 87.2 0.2" stroke="#c07030" stroke-width="0.42" opacity="0.73"/><path d="M83.9 30.7C84.2 27.8 84.2 17.7 85.6 13.3C87.1 8.9 91.4 5.9 92.6 4.4" stroke="#88c030" stroke-width="0.42" opacity="0.44"/><path d="M80.9 27.2C81.1 24.2 81.2 13.8 82.1 9.0C83.0 4.1 85.7 -0.2 86.4 -2.0" stroke="#c07030" stroke-width="0.30" opacity="0.60"/><path d="M69.0 27.0C67.7 25.0 62.8 19.5 61.1 15.3C59.4 11.1 59.3 4.0 58.9 1.7" stroke="#48c030" stroke-width="0.42" opacity="0.77"/><path d="M63.6 30.8C63.1 26.7 62.4 12.3 60.8 6.4C59.3 0.5 55.4 -2.8 54.4 -4.7" stroke="#c06030" stroke-width="0.35" opacity="0.73"/><path d="M67.6 25.0C67.1 23.1 66.4 17.6 64.8 13.2C63.2 8.7 59.0 0.8 57.8 -1.7" stroke="#60c838" stroke-width="0.51" opacity="0.53"/><path d="M71.0 24.9C70.3 22.5 68.8 14.6 67.1 10.5C65.4 6.4 62.0 2.1 61.0 0.4" stroke="#48c030" stroke-width="0.64" opacity="0.40"/><path d="M64.8 22.4C64.5 20.3 64.1 12.7 62.8 9.6C61.6 6.6 58.3 4.8 57.4 3.9" stroke="#30a848" stroke-width="0.39" opacity="0.68"/><path d="M69.3 26.2C68.6 23.8 67.0 15.7 65.4 11.3C63.7 7.0 60.5 2.0 59.5 0.2" stroke="#289830" stroke-width="0.35" opacity="0.69"/><path d="M68.1 24.0C67.0 22.6 63.2 19.2 61.5 15.6C59.9 12.1 58.9 4.8 58.4 2.7" stroke="#38b028" stroke-width="0.37" opacity="0.49"/><path d="M67.3 22.3C66.7 20.3 65.3 14.4 63.6 10.3C61.9 6.2 58.2 -0.4 57.1 -2.5" stroke="#30a848" stroke-width="0.32" opacity="0.77"/><path d="M110.0 34.5C114.5 31.6 128.6 22.6 137.0 17.0C145.5 11.4 156.8 3.5 160.8 0.8" stroke="#48c030" stroke-width="0.37" opacity="0.75"/><path d="M106.7 30.7C111.0 27.6 124.2 17.7 132.6 12.0C141.0 6.3 153.2 -0.9 157.3 -3.4" stroke="#48c030" stroke-width="0.54" opacity="0.81"/><path d="M111.7 35.1C115.7 32.1 127.4 22.9 135.5 17.3C143.6 11.7 156.2 4.1 160.3 1.5" stroke="#48c030" stroke-width="0.43" opacity="0.68"/><path d="M109.8 34.7C113.5 31.8 123.8 23.2 132.1 17.7C140.5 12.1 155.1 4.1 159.7 1.4" stroke="#38b028" stroke-width="0.47" opacity="0.72"/><path d="M107.4 30.4C111.5 28.5 123.8 24.8 131.9 19.1C140.0 13.4 151.9 0.1 155.9 -3.7" stroke="#30a848" stroke-width="0.61" opacity="0.75"/><path d="M108.2 30.3C112.4 27.7 124.9 20.4 132.9 14.6C141.0 8.9 152.7 -1.1 156.7 -4.3" stroke="#48c030" stroke-width="0.41" opacity="0.81"/><path d="M110.0 33.1C114.1 30.4 126.3 22.8 134.6 17.1C142.9 11.4 155.6 2.0 159.9 -1.0" stroke="#60c838" stroke-width="0.64" opacity="0.56"/><path d="M106.4 28.0C110.2 26.9 121.0 25.8 129.2 21.6C137.4 17.4 151.0 6.1 155.4 3.0" stroke="#48c030" stroke-width="0.41" opacity="0.53"/><path d="M64.0 106.5C61.5 109.0 55.1 115.8 48.7 121.3C42.3 126.8 33.4 132.9 25.6 139.4C17.9 145.9 6.2 156.8 2.3 160.3" stroke="#38b028" stroke-width="0.58" opacity="0.88"/><path d="M64.9 101.1C62.0 104.5 54.7 114.3 47.7 121.4C40.6 128.4 30.1 137.2 22.6 143.6C15.1 150.0 6.0 157.0 2.7 159.7" stroke="#88c030" stroke-width="0.46" opacity="0.65"/><path d="M58.2 100.7C55.8 104.6 50.2 116.8 43.8 124.1C37.4 131.4 27.9 139.6 19.9 144.5C11.8 149.3 -0.2 151.9 -4.2 153.4" stroke="#38b028" stroke-width="0.82" opacity="0.64"/><path d="M64.4 106.0C61.7 108.5 54.6 113.8 48.3 120.5C41.9 127.2 34.0 140.1 26.2 146.2C18.3 152.3 5.4 155.4 1.3 157.2" stroke="#a0d8a0" stroke-width="0.72" opacity="0.74"/><path d="M63.0 105.6C60.4 109.4 53.9 122.2 47.2 128.4C40.6 134.6 30.6 138.3 23.0 142.9C15.4 147.5 5.3 153.9 1.7 156.1" stroke="#48c030" stroke-width="0.57" opacity="0.79"/><path d="M59.5 108.2C56.7 111.5 49.6 122.8 42.9 128.0C36.2 133.1 26.8 135.0 19.3 139.2C11.7 143.4 1.2 150.9 -2.4 153.3" stroke="#289830" stroke-width="0.69" opacity="0.73"/><path d="M60.9 105.2C58.2 108.8 51.6 121.0 44.8 127.0C38.0 133.0 27.9 136.1 20.3 141.1C12.7 146.0 2.8 154.2 -0.7 156.8" stroke="#a0d8a0" stroke-width="0.65" opacity="0.79"/><path d="M76.4 111.9C76.0 116.4 76.5 130.4 74.1 139.3C71.7 148.2 67.0 156.2 62.0 165.4C57.1 174.7 47.4 189.7 44.5 194.6" stroke="#48c030" stroke-width="0.61" opacity="0.56"/><path d="M77.3 114.6C76.4 118.7 75.5 132.0 72.0 139.2C68.5 146.4 60.7 148.5 56.1 157.7C51.5 167.0 46.4 188.6 44.4 194.8" stroke="#40b038" stroke-width="0.48" opacity="0.66"/><path d="M72.8 113.0C72.0 116.8 71.8 128.3 68.2 135.8C64.7 143.4 56.0 148.8 51.4 158.5C46.8 168.1 42.4 187.9 40.6 193.8" stroke="#e08030" stroke-width="0.42" opacity="0.93"/><path d="M72.8 111.5C71.3 114.7 68.0 123.3 64.0 130.6C60.0 137.8 52.9 145.4 48.8 155.3C44.8 165.1 41.3 184.1 39.8 189.8" stroke="#289830" stroke-width="0.55" opacity="0.73"/><path d="M75.3 110.7C74.8 114.5 75.2 125.4 72.1 133.7C68.9 141.9 61.3 150.2 56.4 160.1C51.4 170.0 44.6 187.6 42.3 193.1" stroke="#40b038" stroke-width="0.73" opacity="0.56"/><path d="M87.2 111.9C87.8 114.5 89.1 122.0 90.8 127.6C92.5 133.1 96.2 142.2 97.3 145.2" stroke="#e06030" stroke-width="0.74" opacity="0.59"/><path d="M88.5 112.5C89.2 115.5 90.8 124.9 92.5 130.3C94.2 135.7 97.5 142.5 98.5 144.9" stroke="#c8d030" stroke-width="0.45" opacity="0.87"/><path d="M91.3 109.1C91.9 112.1 93.0 120.4 94.7 127.1C96.3 133.9 100.0 145.9 101.0 149.6" stroke="#e8a020" stroke-width="0.74" opacity="0.85"/><path d="M88.9 112.7C89.7 116.0 92.0 126.8 93.7 132.2C95.5 137.6 98.6 143.0 99.5 145.2" stroke="#c8d030" stroke-width="0.83" opacity="0.56"/><path d="M190.0 1.1C189.7 7.9 187.9 26.8 188.7 41.7C189.5 56.7 193.6 82.8 194.6 91.0" stroke="#88c030" stroke-width="0.53" opacity="0.51"/><path d="M188.7 -1.3C188.9 5.9 189.1 26.1 189.9 41.7C190.6 57.3 192.7 83.7 193.3 92.1" stroke="#30a848" stroke-width="0.44" opacity="0.55"/><path d="M192.6 -2.8C192.9 4.7 193.4 26.0 194.4 41.9C195.5 57.9 198.0 84.4 198.7 92.9" stroke="#289830" stroke-width="0.37" opacity="0.40"/><path d="M129.5 0.5C129.5 5.6 126.0 21.6 129.3 31.2C132.7 40.8 146.4 53.7 149.8 58.2" stroke="#48c030" stroke-width="0.47" opacity="0.55"/><path d="M130.6 -1.3C130.4 3.8 125.9 19.5 129.4 29.5C132.9 39.4 147.8 53.6 151.5 58.4" stroke="#289830" stroke-width="0.55" opacity="0.50"/><path d="M160.0 155.0C160.1 146.7 158.8 119.2 160.8 104.9C162.8 90.6 170.3 75.1 172.2 69.1" stroke="#30a848" stroke-width="0.70" opacity="0.51"/><path d="M123.2 125.2C116.2 131.6 99.2 148.0 81.1 163.7C62.9 179.5 25.3 210.2 14.2 219.4" stroke="#30a848" stroke-width="0.30" opacity="0.42"/><path d="M164.6 162.4C159.0 157.1 138.1 135.4 131.2 130.5C124.2 125.7 124.2 133.0 122.8 133.5" stroke="#40b8a0" stroke-width="0.63" opacity="0.84"/><path d="M173.2 220.8C165.0 218.2 140.7 211.9 124.3 205.2C107.9 198.4 83.0 184.5 74.8 180.4" stroke="#38b028" stroke-width="0.35" opacity="0.81"/><path d="M208.4 85.9C201.4 87.3 180.6 86.4 166.1 94.1C151.7 101.8 129.2 125.8 121.8 132.2" stroke="#38b028" stroke-width="0.71" opacity="0.41"/><path d="M206.2 84.4C211.3 90.1 228.4 102.7 236.5 118.4C244.6 134.0 251.8 168.3 254.9 178.2" stroke="#40b038" stroke-width="0.72" opacity="0.82"/><path d="M219.9 220.7C220.0 218.1 215.9 211.0 220.5 204.7C225.1 198.4 242.9 186.6 247.4 183.0" stroke="#289830" stroke-width="0.32" opacity="0.70"/><path d="M204.9 120.6C207.8 130.4 216.2 164.8 221.8 179.3C227.3 193.7 235.5 202.6 238.3 207.2" stroke="#60c838" stroke-width="0.40" opacity="0.71"/><path d="M55.7 148.1C58.8 156.7 67.1 188.4 74.4 199.9C81.8 211.5 95.5 214.5 99.8 217.4" stroke="#40b8a0" stroke-width="0.29" opacity="0.43"/><path d="M242.6 62.8C244.2 72.6 251.4 102.4 251.8 121.5C252.2 140.6 246.2 168.2 245.0 177.5" stroke="#40b038" stroke-width="0.61" opacity="0.78"/><path d="M13.6 218.4C25.4 218.0 66.0 219.2 84.6 216.4C103.2 213.5 118.4 203.9 125.2 201.3" stroke="#40b8a0" stroke-width="0.35" opacity="0.42"/><path d="M158.5 155.7C159.2 152.1 155.0 139.5 162.7 134.3C170.4 129.0 197.8 125.7 204.8 124.0" stroke="#38b028" stroke-width="0.51" opacity="0.79"/><path d="M163.6 156.2C170.6 156.9 191.5 157.3 205.6 160.4C219.7 163.6 241.1 172.6 248.2 175.0" stroke="#88c030" stroke-width="0.59" opacity="0.84"/><path d="M232.0 150.2C226.3 154.3 214.5 166.8 197.9 174.9C181.4 182.9 143.5 194.4 132.7 198.4" stroke="#88c030" stroke-width="0.38" opacity="0.60"/><path d="M88.1 136.2C79.6 140.7 50.2 149.5 37.3 163.0C24.3 176.5 15.0 208.1 10.5 217.2" stroke="#38b028" stroke-width="0.38" opacity="0.72"/><path d="M234.3 146.7C237.5 150.6 250.9 164.2 253.1 169.8C255.4 175.3 248.6 178.4 247.6 180.1" stroke="#38b028" stroke-width="0.66" opacity="0.50"/><path d="M160.4 162.3C168.3 155.0 194.5 134.6 207.9 118.4C221.3 102.2 235.3 73.8 240.7 64.9" stroke="#289830" stroke-width="0.65" opacity="0.47"/><path d="M217.6 223.3C210.2 220.5 193.0 208.2 172.8 206.9C152.6 205.5 109.2 213.7 96.5 215.1" stroke="#30a848" stroke-width="0.61" opacity="0.62"/><path d="M234.9 145.1C230.1 143.1 220.6 137.4 205.9 133.3C191.3 129.2 156.7 122.6 146.8 120.4" stroke="#60c838" stroke-width="0.56" opacity="0.68"/><path d="M205.2 85.6C206.1 79.4 204.1 59.0 210.7 48.0C217.2 36.9 239.0 24.1 244.7 19.3" stroke="#88c030" stroke-width="0.41" opacity="0.49"/><path d="M126.5 201.6C115.9 198.5 81.2 192.9 62.9 183.1C44.5 173.3 24.2 149.5 16.4 142.8" stroke="#60c838" stroke-width="0.50" opacity="0.83"/><path d="M90.7 144.6C91.1 149.9 85.7 167.7 92.6 176.3C99.6 184.8 125.9 192.8 132.5 196.1" stroke="#40b038" stroke-width="0.39" opacity="0.67"/><path d="M122.2 131.4C115.1 132.2 96.0 134.2 79.7 136.4C63.4 138.6 33.8 143.3 24.6 144.7" stroke="#60c838" stroke-width="0.38" opacity="0.66"/><path d="M125.0 133.0C129.7 143.4 146.0 179.5 153.1 195.1C160.2 210.7 165.2 221.4 167.6 226.7" stroke="#40b8a0" stroke-width="0.59" opacity="0.42"/><path d="M198.4 121.2C202.3 114.7 214.0 92.0 221.7 82.0C229.4 72.0 240.8 64.7 244.6 61.3" stroke="#48c030" stroke-width="0.71" opacity="0.53"/><path d="M85.4 140.9C95.8 139.2 128.4 134.6 148.0 130.7C167.7 126.8 194.1 119.6 203.4 117.4" stroke="#38b028" stroke-width="0.60" opacity="0.46"/><path d="M18.9 212.2C27.1 210.1 49.6 201.5 67.8 199.4C85.9 197.4 117.7 199.8 127.7 199.9" stroke="#48c030" stroke-width="0.70" opacity="0.61"/><path d="M239.7 18.9C231.4 28.9 204.8 62.4 189.9 78.8C174.9 95.3 156.5 111.1 149.8 117.6" stroke="#289830" stroke-width="0.68" opacity="0.46"/><path d="M172.2 227.3C171.4 217.5 163.0 186.1 167.2 168.8C171.4 151.5 192.3 131.0 197.3 123.5" stroke="#30a848" stroke-width="0.66" opacity="0.83"/><path d="M125.1 197.1C125.3 190.4 131.7 166.6 126.3 156.8C121.0 147.0 98.4 141.5 92.9 138.4" stroke="#30a848" stroke-width="0.65" opacity="0.82"/><path d="M179.7 73.9C174.6 77.4 154.5 88.2 149.5 95.2C144.5 102.2 149.5 112.6 149.5 116.0" stroke="#40b8a0" stroke-width="0.43" opacity="0.57"/><path d="M205.6 87.4C206.3 84.1 204.4 80.3 209.5 67.8C214.6 55.3 231.6 21.6 236.0 12.4" stroke="#40b038" stroke-width="0.33" opacity="0.43"/><path d="M159.5 158.3C154.6 162.4 134.9 175.6 130.5 182.9C126.2 190.1 132.8 198.7 133.3 201.9" stroke="#48c030" stroke-width="0.46" opacity="0.55"/><path d="M151.1 121.2C141.7 121.3 109.4 117.7 94.8 121.7C80.2 125.6 68.8 141.2 63.6 145.1" stroke="#38b028" stroke-width="0.32" opacity="0.48"/><path d="M20.1 135.4C17.0 139.0 4.7 150.3 1.5 157.2C-1.6 164.1 1.1 173.5 1.0 176.8" stroke="#38b028" stroke-width="0.32" opacity="0.45"/><path d="M89.3 140.8C100.8 138.2 138.5 128.5 157.8 125.3C177.1 122.0 197.0 122.0 204.9 121.4" stroke="#289830" stroke-width="0.31" opacity="0.78"/><path d="M231.1 96.3C231.3 96.1 238.3 90.8 232.3 95.3C226.4 99.9 201.5 118.9 195.3 123.7" stroke="#88c030" stroke-width="0.62" opacity="0.62"/><path d="M212.6 86.8C202.8 88.2 174.9 86.6 154.2 95.4C133.5 104.2 99.3 132.1 88.4 139.4" stroke="#30a848" stroke-width="0.36" opacity="0.56"/><path d="M230.2 98.5C225.9 103.3 217.2 117.7 204.8 127.2C192.3 136.7 163.6 150.8 155.3 155.5" stroke="#40b8a0" stroke-width="0.46" opacity="0.54"/><path d="M10.4 213.8C8.0 211.8 -3.5 208.3 -4.3 201.8C-5.2 195.4 3.6 179.6 5.2 175.2" stroke="#289830" stroke-width="0.31" opacity="0.46"/><path d="M249.1 181.7C244.5 176.3 228.4 165.1 221.2 149.1C214.0 133.1 208.4 96.3 205.8 85.8" stroke="#40b038" stroke-width="0.29" opacity="0.43"/><path d="M219.0 43.5C221.9 53.3 235.5 85.4 236.9 102.6C238.2 119.7 228.8 139.1 227.2 146.4" stroke="#48c030" stroke-width="0.32" opacity="0.79"/><path d="M158.3 161.6C162.2 153.8 178.8 130.1 182.0 114.7C185.1 99.4 177.9 77.1 177.1 69.6" stroke="#30a848" stroke-width="0.68" opacity="0.54"/><path d="M246.5 185.0C243.9 184.2 232.2 175.4 230.8 180.4C229.4 185.4 237.0 209.2 238.2 215.0" stroke="#88c030" stroke-width="0.50" opacity="0.70"/><path d="M86.3 144.5C92.2 148.5 114.5 159.2 122.1 168.7C129.6 178.3 130.0 196.3 131.6 201.8" stroke="#88c030" stroke-width="0.31" opacity="0.85"/><path d="M253.3 183.5C244.9 188.5 217.0 207.6 202.6 213.8C188.3 219.9 173.1 219.1 167.2 220.1" stroke="#40b038" stroke-width="0.44" opacity="0.43"/><path d="M245.0 57.6C243.1 60.3 240.2 68.9 233.7 73.7C227.3 78.6 210.8 84.5 206.2 86.7" stroke="#40b038" stroke-width="0.30" opacity="0.68"/><path d="M157.4 164.5C153.1 166.9 135.4 172.2 131.4 178.7C127.4 185.2 133.2 199.5 133.5 203.7" stroke="#60c838" stroke-width="0.32" opacity="0.83"/><path d="M160.6 162.3C163.3 153.6 167.9 130.7 177.1 110.3C186.3 89.9 209.4 51.7 215.8 39.9" stroke="#60c838" stroke-width="0.68" opacity="0.56"/><path d="M179.7 73.3C173.1 85.1 148.0 122.5 140.2 144.4C132.4 166.2 134.1 194.5 132.9 204.5" stroke="#60c838" stroke-width="0.52" opacity="0.77"/><path d="M235.6 208.3C238.9 196.8 256.1 156.4 255.3 139.1C254.5 121.8 234.9 110.3 230.8 104.5" stroke="#40b038" stroke-width="0.72" opacity="0.56"/><path d="M247.1 180.3C238.7 184.9 217.1 204.9 196.9 208.0C176.7 211.1 137.7 200.5 125.9 199.1" stroke="#38b028" stroke-width="0.31" opacity="0.82"/><path d="M69.2 179.0C77.5 173.8 105.7 157.9 119.2 147.7C132.7 137.5 145.0 122.8 150.2 117.8" stroke="#60c838" stroke-width="0.59" opacity="0.75"/><path d="M151.4 118.3C155.2 127.3 171.6 154.3 174.2 172.2C176.9 190.1 168.4 216.9 167.2 225.8" stroke="#40b038" stroke-width="0.60" opacity="0.69"/><path d="M227.5 153.1C219.9 151.4 199.2 146.8 181.6 142.8C163.9 138.9 131.7 131.5 121.8 129.3" stroke="#40b8a0" stroke-width="0.61" opacity="0.78"/><path d="M171.9 225.1C170.9 219.4 163.4 197.2 166.1 191.1C168.7 185.1 184.0 189.0 187.6 188.6" stroke="#40b8a0" stroke-width="0.70" opacity="0.78"/><path d="M67.7 176.2C67.7 173.8 62.9 167.6 67.2 161.7C71.6 155.8 89.3 144.2 93.7 140.7" stroke="#30a848" stroke-width="0.65" opacity="0.69"/><path d="M231.5 148.8C234.3 146.4 247.5 142.9 248.1 134.3C248.7 125.7 237.3 103.2 235.1 96.9" stroke="#38b028" stroke-width="0.39" opacity="0.69"/><path d="M15.1 210.4C24.1 203.6 51.4 182.9 69.6 169.6C87.7 156.4 114.8 137.3 123.8 130.8" stroke="#40b038" stroke-width="0.31" opacity="0.82"/><path d="M164.9 160.1C152.0 164.9 108.5 183.0 87.8 188.8C67.2 194.7 48.7 194.3 40.9 195.3" stroke="#60c838" stroke-width="0.57" opacity="0.68"/><path d="M39.2 191.1C43.2 187.6 60.3 176.8 63.1 170.1C65.8 163.4 57.0 154.0 55.8 150.8" stroke="#60c838" stroke-width="0.31" opacity="0.60"/><path d="M42.9 192.6C39.7 194.4 28.9 199.8 23.8 203.5C18.7 207.2 14.3 213.0 12.4 214.9" stroke="#38b028" stroke-width="0.71" opacity="0.83"/><path d="M61.1 150.3C62.2 152.2 72.0 155.5 68.2 161.7C64.4 167.8 43.3 183.1 38.3 187.4" stroke="#60c838" stroke-width="0.33" opacity="0.57"/><path d="M146.8 122.1C147.7 123.2 149.3 122.5 152.0 128.7C154.7 134.9 161.0 154.3 162.8 159.4" stroke="#48c030" stroke-width="0.52" opacity="0.56"/><path d="M178.6 66.9C181.9 71.4 195.3 85.4 198.6 94.3C201.9 103.2 198.4 115.8 198.4 120.1" stroke="#60c838" stroke-width="0.48" opacity="0.54"/><path d="M173.5 72.9C180.4 73.2 204.9 70.7 214.8 74.7C224.7 78.7 229.9 93.0 232.9 96.7" stroke="#48c030" stroke-width="0.33" opacity="0.56"/><path d="M220.6 228.4C220.3 229.5 216.2 238.2 218.8 235.4C221.4 232.7 233.2 215.6 236.1 211.6" stroke="#38b028" stroke-width="0.57" opacity="0.44"/><path d="M23.1 135.6C24.9 140.9 26.0 160.3 33.7 167.3C41.4 174.4 63.3 176.1 69.2 177.8" stroke="#40b8a0" stroke-width="0.62" opacity="0.63"/><path d="M208.8 88.0C203.5 95.0 190.9 110.9 177.0 130.0C163.1 149.0 133.8 190.2 125.1 202.3" stroke="#40b038" stroke-width="0.68" opacity="0.65"/><path d="M168.1 225.1C170.7 219.9 181.7 201.1 183.6 194.2C185.4 187.2 180.0 185.2 179.3 183.4" stroke="#48c030" stroke-width="0.50" opacity="0.83"/><path d="M17.0 141.1C19.7 140.1 26.7 133.0 33.6 134.9C40.4 136.8 54.1 149.7 58.2 152.7" stroke="#40b038" stroke-width="0.33" opacity="0.78"/><path d="M92.5 135.2C96.6 141.9 103.9 160.3 117.0 175.3C130.2 190.4 162.3 217.1 171.3 225.5" stroke="#48c030" stroke-width="0.43" opacity="0.61"/><path d="M58.6 153.8C53.9 154.7 36.4 161.9 30.3 159.2C24.3 156.5 23.7 141.3 22.4 137.7" stroke="#38b028" stroke-width="0.71" opacity="0.73"/><path d="M196.3 117.6C195.7 115.1 191.2 108.0 192.6 102.4C194.1 96.8 203.0 87.1 205.1 84.0" stroke="#38b028" stroke-width="0.32" opacity="0.78"/><path d="M130.2 200.4C140.5 203.1 176.1 212.6 191.8 216.7C207.6 220.8 219.1 223.6 224.5 225.0" stroke="#289830" stroke-width="0.65" opacity="0.71"/><path d="M67.9 179.5C66.5 174.5 61.5 154.5 59.6 149.2C57.7 143.9 57.0 148.2 56.5 148.0" stroke="#88c030" stroke-width="0.66" opacity="0.52"/><path d="M146.1 123.2C148.7 118.4 151.6 99.6 161.7 94.0C171.7 88.4 199.0 90.3 206.5 89.6" stroke="#60c838" stroke-width="0.61" opacity="0.72"/><path d="M226.8 145.9C227.9 137.1 234.7 111.1 233.5 92.8C232.2 74.4 221.5 45.3 219.2 35.8" stroke="#38b028" stroke-width="0.34" opacity="0.70"/><path d="M94.8 137.6C90.7 141.7 78.3 153.2 70.2 161.9C62.2 170.7 50.5 185.4 46.6 190.1" stroke="#88c030" stroke-width="0.66" opacity="0.84"/><path d="M152.8 121.7C160.4 130.7 184.7 160.6 198.5 175.3C212.3 190.0 229.4 204.0 235.6 209.8" stroke="#30a848" stroke-width="0.54" opacity="0.83"/><path d="M146.3 118.6C149.8 124.7 164.6 147.6 167.6 155.1C170.5 162.6 164.6 162.2 164.0 163.6" stroke="#40b038" stroke-width="0.72" opacity="0.54"/><path d="M226.4 152.0C220.4 151.7 202.4 154.9 190.3 150.2C178.2 145.6 159.8 128.3 153.7 123.9" stroke="#38b028" stroke-width="0.55" opacity="0.62"/><path d="M229.2 152.9C231.4 141.7 240.1 108.9 242.3 85.6C244.5 62.2 242.5 25.1 242.5 13.0" stroke="#40b8a0" stroke-width="0.39" opacity="0.61"/><path d="M132.6 200.3C126.8 196.1 110.7 183.1 98.3 174.7C85.8 166.4 64.5 154.3 57.8 150.2" stroke="#60c838" stroke-width="0.49" opacity="0.58"/><path d="M125.1 195.4C124.8 187.4 124.4 157.7 123.5 147.2C122.5 136.8 120.0 134.9 119.3 132.4" stroke="#88c030" stroke-width="0.42" opacity="0.56"/><path d="M183.0 184.0C181.3 184.1 177.7 185.0 172.9 184.3C168.1 183.7 157.5 180.7 154.4 180.0" stroke="#60c838" stroke-width="0.77" opacity="0.67"/><path d="M183.0 184.0C183.4 186.2 182.8 191.7 185.6 197.3C188.5 203.0 197.7 214.4 200.1 217.9" stroke="#289830" stroke-width="0.82" opacity="0.77"/><path d="M183.0 184.0C181.7 188.9 176.5 204.4 175.1 213.3C173.6 222.2 174.2 233.4 174.1 237.4" stroke="#88c030" stroke-width="0.51" opacity="0.61"/><path d="M183.0 184.0C183.3 186.5 186.0 192.7 184.7 199.2C183.3 205.7 176.4 219.0 174.8 223.0" stroke="#30a848" stroke-width="0.68" opacity="0.81"/><path d="M183.0 184.0C184.9 181.3 189.3 174.6 194.2 167.8C199.1 160.9 209.3 147.2 212.3 143.1" stroke="#38b028" stroke-width="0.82" opacity="0.82"/><path d="M183.0 184.0C186.7 187.1 197.8 197.8 204.9 202.9C212.1 207.9 222.4 212.6 225.8 214.5" stroke="#289830" stroke-width="0.74" opacity="0.52"/><path d="M183.0 184.0C183.6 179.3 183.7 163.9 186.4 156.0C189.0 148.2 196.9 140.2 199.0 137.0" stroke="#88c030" stroke-width="0.38" opacity="0.69"/><path d="M183.0 184.0C179.4 181.5 166.6 175.4 161.4 169.1C156.1 162.8 153.1 149.9 151.5 146.1" stroke="#30a848" stroke-width="0.54" opacity="0.71"/><path d="M183.0 184.0C186.4 184.4 196.4 185.0 203.6 186.5C210.8 188.1 222.4 192.0 226.2 193.0" stroke="#60c838" stroke-width="0.37" opacity="0.84"/><path d="M183.0 184.0C184.3 186.2 189.8 192.7 190.8 197.3C191.8 202.0 189.3 209.4 189.0 211.8" stroke="#40b038" stroke-width="0.67" opacity="0.76"/><path d="M42.0 192.0C42.6 187.5 45.5 172.6 45.8 165.1C46.0 157.7 43.9 150.1 43.5 147.1" stroke="#48c030" stroke-width="0.65" opacity="0.74"/><path d="M42.0 192.0C38.0 193.2 26.5 198.4 17.8 199.1C9.2 199.8 -5.1 196.8 -9.7 196.4" stroke="#38b028" stroke-width="0.51" opacity="0.52"/><path d="M42.0 192.0C44.1 188.5 50.8 179.7 54.7 171.2C58.6 162.6 63.4 145.6 65.2 140.5" stroke="#40b038" stroke-width="0.81" opacity="0.88"/><path d="M42.0 192.0C46.3 190.4 61.1 185.3 68.0 182.5C74.8 179.6 80.5 176.0 83.0 174.7" stroke="#40b038" stroke-width="0.76" opacity="0.53"/><path d="M42.0 192.0C40.8 193.9 37.3 198.3 34.8 203.2C32.3 208.2 28.4 218.8 27.1 221.9" stroke="#48c030" stroke-width="0.56" opacity="0.54"/><path d="M42.0 192.0C37.9 189.7 26.8 181.2 17.5 178.1C8.2 175.0 -8.4 174.3 -13.6 173.5" stroke="#30a848" stroke-width="0.62" opacity="0.87"/><path d="M42.0 192.0C45.7 192.4 58.1 192.0 64.1 194.2C70.2 196.4 76.0 203.5 78.4 205.3" stroke="#38b028" stroke-width="0.56" opacity="0.70"/><path d="M42.0 192.0C39.8 189.9 32.0 182.4 28.8 179.5C25.7 176.7 24.0 175.7 23.0 174.9" stroke="#289830" stroke-width="0.83" opacity="0.55"/><path d="M42.0 192.0C46.2 192.6 60.1 192.7 67.2 195.8C74.2 199.0 81.3 208.4 84.1 210.9" stroke="#48c030" stroke-width="0.75" opacity="0.76"/><path d="M42.0 192.0C44.6 194.9 54.1 202.5 57.3 209.3C60.5 216.0 60.7 228.6 61.4 232.5" stroke="#88c030" stroke-width="0.53" opacity="0.80"/><path d="M209.0 85.0C209.9 80.4 212.5 66.8 214.3 57.4C216.2 48.1 219.2 33.5 220.2 28.7" stroke="#60c838" stroke-width="0.64" opacity="0.86"/><path d="M209.0 85.0C210.3 82.7 214.8 75.3 216.9 71.4C219.0 67.5 220.7 63.3 221.5 61.6" stroke="#60c838" stroke-width="0.73" opacity="0.56"/><path d="M209.0 85.0C206.5 88.4 200.1 98.1 194.0 105.6C187.9 113.2 175.9 126.1 172.3 130.2" stroke="#88c030" stroke-width="0.82" opacity="0.75"/><path d="M209.0 85.0C211.4 84.5 217.3 82.6 223.6 81.8C230.0 81.0 243.1 80.5 247.0 80.2" stroke="#38b028" stroke-width="0.77" opacity="0.60"/><path d="M209.0 85.0C212.1 88.0 220.6 97.9 227.4 103.2C234.2 108.4 246.0 114.3 249.8 116.5" stroke="#60c838" stroke-width="0.62" opacity="0.63"/><path d="M209.0 85.0C203.7 84.5 186.2 81.8 177.1 81.8C168.1 81.9 158.3 84.7 154.5 85.3" stroke="#38b028" stroke-width="0.70" opacity="0.55"/><path d="M209.0 85.0C206.8 88.9 200.8 102.3 196.0 108.3C191.2 114.4 182.8 119.1 180.2 121.2" stroke="#60c838" stroke-width="0.46" opacity="0.69"/><path d="M209.0 85.0C211.4 86.0 217.7 90.5 223.3 91.1C228.8 91.8 239.0 89.3 242.1 88.9" stroke="#38b028" stroke-width="0.46" opacity="0.73"/><path d="M209.0 85.0C206.6 86.3 200.8 90.6 194.6 92.9C188.4 95.2 175.6 97.8 171.8 98.8" stroke="#38b028" stroke-width="0.50" opacity="0.53"/><path d="M209.0 85.0C209.2 87.8 210.3 96.7 210.1 102.0C210.0 107.3 208.5 114.2 208.2 116.7" stroke="#30a848" stroke-width="0.79" opacity="0.58"/><path d="M230.0 150.0C227.1 147.4 216.6 137.7 212.8 134.2C208.9 130.7 207.9 129.9 206.9 129.0" stroke="#289830" stroke-width="0.84" opacity="0.73"/><path d="M230.0 150.0C235.3 152.2 252.8 159.4 261.6 163.1C270.4 166.8 279.3 170.8 282.8 172.3" stroke="#30a848" stroke-width="0.67" opacity="0.80"/><path d="M230.0 150.0C226.9 149.7 216.5 150.4 211.2 148.3C205.8 146.3 200.2 139.4 198.0 137.6" stroke="#30a848" stroke-width="0.70" opacity="0.80"/><path d="M230.0 150.0C227.1 152.2 218.9 157.7 212.3 163.3C205.8 168.9 194.2 180.3 190.6 183.8" stroke="#48c030" stroke-width="0.71" opacity="0.81"/><path d="M230.0 150.0C232.9 153.2 241.3 161.9 247.3 169.2C253.4 176.6 263.1 189.8 266.2 193.9" stroke="#60c838" stroke-width="0.69" opacity="0.56"/><path d="M230.0 150.0C231.8 148.7 235.9 146.4 241.0 142.0C246.2 137.5 257.4 126.4 260.7 123.3" stroke="#48c030" stroke-width="0.64" opacity="0.71"/><path d="M230.0 150.0C233.6 151.8 244.6 157.2 251.8 160.6C259.1 164.0 269.9 168.6 273.5 170.2" stroke="#88c030" stroke-width="0.76" opacity="0.81"/><path d="M230.0 150.0C226.1 153.0 215.3 162.8 206.7 167.8C198.2 172.8 183.4 178.2 178.8 180.2" stroke="#38b028" stroke-width="0.62" opacity="0.81"/><path d="M230.0 150.0C230.1 147.6 231.0 142.1 230.5 135.7C229.9 129.4 227.2 115.8 226.6 111.8" stroke="#289830" stroke-width="0.44" opacity="0.76"/><path d="M230.0 150.0C227.7 151.6 219.1 155.0 216.0 159.6C213.0 164.2 212.5 174.6 211.8 177.6" stroke="#38b028" stroke-width="0.49" opacity="0.75"/></g>
<g filter="url(#nb1)"><path d="M100 140Q92 158 97 180T118 198" stroke="#4088d8" stroke-width="6" fill="none" opacity=".45"/><path d="M72 118Q88 126 104 142" stroke="#5070e0" stroke-width="7" fill="none" opacity=".4"/><path d="M100 140Q110 134 124 146" stroke="#4088d8" stroke-width="4" fill="none" opacity=".4"/><circle cx="104.4" cy="139.3" r="0.9" fill="#a0e0f0" opacity="0.79"/><circle cx="110.4" cy="199.7" r="1.5" fill="#e0a0c0" opacity="0.66"/><circle cx="109.5" cy="200.4" r="1.2" fill="#50d0b0" opacity="0.79"/><circle cx="114.2" cy="136.8" r="1.2" fill="#4060f0" opacity="0.61"/><circle cx="92.4" cy="171.7" r="1.3" fill="#a0e0f0" opacity="0.78"/><circle cx="93.9" cy="178.3" r="1.2" fill="#a0e0f0" opacity="0.79"/><circle cx="117.3" cy="197.2" r="1.1" fill="#d0f0f0" opacity="0.97"/><circle cx="109.2" cy="197.0" r="1.4" fill="#4080f0" opacity="0.84"/><circle cx="98.6" cy="190.4" r="1.6" fill="#e0a0c0" opacity="0.87"/><circle cx="95.6" cy="181.7" r="1.5" fill="#50d0b0" opacity="0.99"/><circle cx="94.7" cy="184.7" r="0.9" fill="#e0a0c0" opacity="0.66"/><circle cx="131.5" cy="173.6" r="1.0" fill="#50d0b0" opacity="0.62"/><circle cx="127.7" cy="187.3" r="1.1" fill="#4080f0" opacity="0.89"/><circle cx="102.6" cy="198.2" r="1.8" fill="#4080f0" opacity="0.92"/><circle cx="119.7" cy="199.7" r="1.4" fill="#d0f0f0" opacity="0.72"/><circle cx="109.3" cy="136.8" r="1.3" fill="#4060f0" opacity="0.64"/><circle cx="111.3" cy="201.2" r="1.6" fill="#4080f0" opacity="0.90"/><circle cx="106.8" cy="139.1" r="1.7" fill="#50d0b0" opacity="0.81"/><circle cx="100.0" cy="186.3" r="1.3" fill="#4080f0" opacity="0.91"/><circle cx="107.8" cy="200.2" r="1.6" fill="#60c8e8" opacity="0.87"/><circle cx="103.7" cy="144.1" r="0.9" fill="#4060f0" opacity="0.83"/><circle cx="104.9" cy="140.7" r="1.0" fill="#d0f0f0" opacity="0.80"/><circle cx="93.4" cy="174.5" r="1.5" fill="#50d0b0" opacity="0.79"/><circle cx="97.2" cy="156.5" r="1.5" fill="#4060f0" opacity="0.75"/><circle cx="131.2" cy="150.3" r="1.2" fill="#4080f0" opacity="0.94"/><circle cx="128.9" cy="151.3" r="1.1" fill="#e0a0c0" opacity="0.63"/><circle cx="128.8" cy="151.0" r="1.5" fill="#50d0b0" opacity="0.62"/><circle cx="93.4" cy="179.7" r="1.0" fill="#e0a0c0" opacity="0.95"/><circle cx="109.7" cy="143.5" r="1.3" fill="#e0a0c0" opacity="0.99"/><circle cx="118.1" cy="138.8" r="1.2" fill="#d0f0f0" opacity="0.85"/><circle cx="115.5" cy="141.9" r="1.4" fill="#e0a0c0" opacity="0.86"/><circle cx="103.5" cy="196.8" r="1.0" fill="#4060f0" opacity="0.91"/><circle cx="92.2" cy="171.3" r="1.8" fill="#4080f0" opacity="0.69"/><circle cx="106.7" cy="193.4" r="0.9" fill="#a0e0f0" opacity="0.93"/><circle cx="127.9" cy="151.9" r="1.2" fill="#50d0b0" opacity="0.98"/><circle cx="113.7" cy="202.0" r="1.1" fill="#4080f0" opacity="0.66"/><circle cx="118.9" cy="199.6" r="1.0" fill="#60c8e8" opacity="0.92"/><circle cx="93.6" cy="158.9" r="1.1" fill="#4060f0" opacity="0.65"/><circle cx="121.1" cy="139.3" r="1.6" fill="#4060f0" opacity="0.70"/><circle cx="101.5" cy="149.5" r="0.8" fill="#4080f0" opacity="0.88"/><circle cx="109.7" cy="194.9" r="0.9" fill="#50d0b0" opacity="0.71"/><circle cx="111.8" cy="141.9" r="1.5" fill="#50d0b0" opacity="0.86"/><circle cx="119.8" cy="198.4" r="0.9" fill="#50d0b0" opacity="0.83"/><circle cx="105.0" cy="142.6" r="1.7" fill="#60c8e8" opacity="0.81"/><circle cx="95.2" cy="184.6" r="1.2" fill="#a0e0f0" opacity="0.96"/><circle cx="99.0" cy="155.8" r="1.4" fill="#d0f0f0" opacity="1.00"/><circle cx="118.2" cy="138.5" r="1.3" fill="#a0e0f0" opacity="0.72"/><circle cx="112.9" cy="195.3" r="0.9" fill="#4080f0" opacity="0.73"/><circle cx="117.6" cy="141.1" r="1.1" fill="#d0f0f0" opacity="0.83"/><circle cx="110.0" cy="144.2" r="0.8" fill="#50d0b0" opacity="0.73"/><circle cx="110.3" cy="196.1" r="0.9" fill="#d0f0f0" opacity="0.76"/><circle cx="129.1" cy="147.0" r="1.4" fill="#e0a0c0" opacity="0.73"/><circle cx="90.4" cy="169.0" r="1.8" fill="#4060f0" opacity="0.92"/><circle cx="102.3" cy="193.1" r="1.7" fill="#a0e0f0" opacity="0.63"/><circle cx="131.3" cy="154.0" r="1.0" fill="#60c8e8" opacity="0.83"/><circle cx="115.5" cy="144.3" r="1.3" fill="#a0e0f0" opacity="0.70"/><circle cx="98.3" cy="145.9" r="1.3" fill="#e0a0c0" opacity="0.72"/><circle cx="102.5" cy="198.9" r="1.7" fill="#4060f0" opacity="0.71"/><circle cx="132.3" cy="156.8" r="1.4" fill="#d0f0f0" opacity="0.64"/><circle cx="98.7" cy="186.5" r="1.6" fill="#4080f0" opacity="0.81"/><circle cx="97.1" cy="157.3" r="1.4" fill="#d0f0f0" opacity="0.92"/><circle cx="109.1" cy="139.0" r="1.1" fill="#4080f0" opacity="0.71"/><circle cx="111.0" cy="136.6" r="1.8" fill="#a0e0f0" opacity="0.80"/><circle cx="101.8" cy="189.7" r="1.4" fill="#4060f0" opacity="0.63"/><circle cx="94.3" cy="151.1" r="1.8" fill="#4060f0" opacity="0.92"/><circle cx="93.6" cy="187.8" r="1.7" fill="#4080f0" opacity="0.68"/><circle cx="124.1" cy="150.1" r="1.7" fill="#60c8e8" opacity="0.93"/><circle cx="112.7" cy="199.4" r="1.3" fill="#e0a0c0" opacity="0.94"/><circle cx="115.3" cy="196.4" r="1.6" fill="#60c8e8" opacity="0.94"/><circle cx="92.9" cy="159.1" r="1.5" fill="#e0a0c0" opacity="0.89"/><circle cx="98.4" cy="156.0" r="1.7" fill="#50d0b0" opacity="0.85"/><circle cx="116.3" cy="194.8" r="0.9" fill="#a0e0f0" opacity="0.99"/><circle cx="105.4" cy="195.6" r="1.3" fill="#4060f0" opacity="0.81"/><circle cx="112.6" cy="195.8" r="0.9" fill="#a0e0f0" opacity="0.94"/><circle cx="134.9" cy="159.9" r="0.9" fill="#e0a0c0" opacity="0.95"/><circle cx="105.2" cy="192.9" r="1.8" fill="#60c8e8" opacity="0.66"/><circle cx="123.8" cy="143.5" r="1.8" fill="#e0a0c0" opacity="0.89"/><circle cx="131.6" cy="151.8" r="1.2" fill="#e0a0c0" opacity="0.80"/><circle cx="112.3" cy="199.5" r="1.7" fill="#a0e0f0" opacity="0.72"/><circle cx="99.3" cy="196.8" r="1.5" fill="#d0f0f0" opacity="0.81"/><circle cx="112.2" cy="142.5" r="1.6" fill="#a0e0f0" opacity="0.77"/><circle cx="127.0" cy="154.8" r="1.4" fill="#4080f0" opacity="0.75"/><circle cx="115.2" cy="144.2" r="1.1" fill="#4080f0" opacity="0.98"/><circle cx="130.4" cy="158.0" r="1.5" fill="#50d0b0" opacity="0.96"/><circle cx="119.2" cy="143.0" r="1.1" fill="#4060f0" opacity="0.64"/><circle cx="124.2" cy="146.6" r="1.5" fill="#d0f0f0" opacity="0.61"/><circle cx="101.3" cy="194.9" r="0.8" fill="#50d0b0" opacity="0.72"/><circle cx="133.3" cy="177.4" r="1.0" fill="#4060f0" opacity="0.71"/><circle cx="92.2" cy="164.5" r="1.6" fill="#4080f0" opacity="0.67"/><circle cx="101.1" cy="148.6" r="1.7" fill="#4080f0" opacity="0.76"/><circle cx="96.7" cy="153.8" r="0.9" fill="#4060f0" opacity="0.96"/><circle cx="109.6" cy="140.5" r="1.7" fill="#a0e0f0" opacity="0.90"/><circle cx="96.4" cy="162.9" r="1.0" fill="#50d0b0" opacity="0.77"/><circle cx="132.3" cy="172.3" r="0.9" fill="#e0a0c0" opacity="0.81"/><circle cx="135.4" cy="166.9" r="0.9" fill="#4060f0" opacity="0.62"/><circle cx="113.4" cy="139.0" r="1.0" fill="#50d0b0" opacity="0.86"/><circle cx="123.1" cy="140.3" r="1.5" fill="#60c8e8" opacity="0.80"/><circle cx="98.1" cy="184.2" r="0.9" fill="#50d0b0" opacity="0.78"/><circle cx="110.3" cy="143.4" r="1.7" fill="#60c8e8" opacity="0.66"/><circle cx="95.1" cy="165.5" r="1.6" fill="#e0a0c0" opacity="0.82"/><circle cx="88.4" cy="136.2" r="1.6" fill="#d080c0" opacity="0.81"/><circle cx="97.2" cy="146.6" r="1.4" fill="#d080c0" opacity="0.73"/><circle cx="80.1" cy="126.2" r="1.6" fill="#c0e0f0" opacity="0.82"/><circle cx="84.0" cy="129.2" r="1.7" fill="#c0e0f0" opacity="0.84"/><circle cx="75.1" cy="118.8" r="1.1" fill="#d080c0" opacity="0.95"/><circle cx="85.3" cy="131.6" r="1.5" fill="#60a8e8" opacity="0.77"/><circle cx="94.4" cy="137.7" r="1.6" fill="#d080c0" opacity="0.52"/><circle cx="103.9" cy="148.5" r="1.4" fill="#60a8e8" opacity="0.51"/><circle cx="71.7" cy="118.3" r="1.1" fill="#60a8e8" opacity="0.58"/><circle cx="90.3" cy="127.9" r="1.1" fill="#d080c0" opacity="0.91"/><circle cx="93.4" cy="140.2" r="0.9" fill="#60a8e8" opacity="0.89"/><circle cx="84.1" cy="131.7" r="1.3" fill="#80c0f0" opacity="0.84"/><circle cx="103.7" cy="141.2" r="1.4" fill="#60a8e8" opacity="0.61"/><circle cx="97.2" cy="135.9" r="1.7" fill="#4070f0" opacity="0.80"/><circle cx="95.9" cy="146.6" r="1.4" fill="#4060f0" opacity="0.67"/><circle cx="86.9" cy="135.4" r="1.2" fill="#80c0f0" opacity="0.60"/><circle cx="84.7" cy="129.7" r="1.1" fill="#60a8e8" opacity="0.86"/><circle cx="99.2" cy="144.8" r="1.5" fill="#4060f0" opacity="0.81"/><circle cx="71.3" cy="114.8" r="1.0" fill="#4070f0" opacity="0.56"/><circle cx="89.6" cy="138.0" r="1.7" fill="#60a8e8" opacity="0.93"/><circle cx="102.8" cy="152.8" r="1.6" fill="#4070f0" opacity="0.85"/><circle cx="104.2" cy="144.7" r="1.1" fill="#d080c0" opacity="0.80"/><circle cx="89.8" cy="134.4" r="1.2" fill="#4060f0" opacity="0.70"/><circle cx="76.7" cy="121.9" r="1.8" fill="#4070f0" opacity="0.92"/><circle cx="79.9" cy="122.7" r="1.0" fill="#60a8e8" opacity="0.60"/><circle cx="82.4" cy="120.3" r="1.4" fill="#80c0f0" opacity="0.90"/><circle cx="93.8" cy="139.3" r="1.2" fill="#4060f0" opacity="0.58"/><circle cx="92.1" cy="140.0" r="1.6" fill="#4070f0" opacity="0.84"/><circle cx="83.2" cy="131.3" r="1.4" fill="#80c0f0" opacity="0.88"/><circle cx="81.8" cy="127.5" r="1.5" fill="#80c0f0" opacity="0.53"/><circle cx="97.7" cy="145.8" r="1.3" fill="#c0e0f0" opacity="0.87"/><circle cx="79.5" cy="127.7" r="1.1" fill="#60a8e8" opacity="0.90"/><circle cx="93.5" cy="134.6" r="1.1" fill="#4060f0" opacity="0.83"/><circle cx="76.4" cy="123.9" r="1.5" fill="#4060f0" opacity="0.91"/><circle cx="89.2" cy="127.3" r="1.4" fill="#4070f0" opacity="0.71"/><circle cx="72.4" cy="119.2" r="1.3" fill="#c0e0f0" opacity="0.82"/><circle cx="101.1" cy="140.2" r="1.6" fill="#4070f0" opacity="0.80"/><circle cx="84.8" cy="135.4" r="1.7" fill="#60a8e8" opacity="0.84"/><circle cx="89.9" cy="135.5" r="1.3" fill="#d080c0" opacity="0.50"/><circle cx="84.4" cy="124.7" r="1.7" fill="#80c0f0" opacity="0.55"/><circle cx="101.2" cy="147.6" r="1.6" fill="#c0e0f0" opacity="0.58"/><circle cx="94.6" cy="133.0" r="1.8" fill="#60a8e8" opacity="0.92"/><circle cx="65.4" cy="121.2" r="1.7" fill="#4070f0" opacity="0.55"/><circle cx="91.3" cy="132.3" r="1.2" fill="#c0e0f0" opacity="0.67"/><circle cx="91.7" cy="137.2" r="1.0" fill="#80c0f0" opacity="0.87"/><circle cx="84.1" cy="132.7" r="0.8" fill="#4060f0" opacity="0.56"/><circle cx="92.2" cy="141.5" r="1.1" fill="#60a8e8" opacity="0.74"/><circle cx="82.6" cy="127.1" r="1.1" fill="#d080c0" opacity="0.81"/><circle cx="103.3" cy="147.6" r="1.2" fill="#4060f0" opacity="0.67"/><circle cx="90.6" cy="138.9" r="1.1" fill="#4070f0" opacity="0.73"/><circle cx="74.6" cy="119.4" r="0.9" fill="#4060f0" opacity="0.60"/><circle cx="76.7" cy="120.3" r="0.9" fill="#4060f0" opacity="0.79"/><circle cx="90.7" cy="140.6" r="1.3" fill="#4070f0" opacity="0.67"/><circle cx="91.8" cy="128.6" r="1.6" fill="#60a8e8" opacity="0.67"/><circle cx="107.5" cy="148.7" r="1.2" fill="#d080c0" opacity="0.63"/><circle cx="80.0" cy="127.2" r="1.4" fill="#c0e0f0" opacity="0.86"/><circle cx="69.7" cy="115.6" r="1.4" fill="#4070f0" opacity="0.63"/><circle cx="92.6" cy="132.3" r="0.9" fill="#c0e0f0" opacity="0.88"/><circle cx="85.8" cy="126.4" r="0.9" fill="#60a8e8" opacity="0.72"/><circle cx="96.4" cy="143.2" r="0.9" fill="#d080c0" opacity="0.60"/><circle cx="94.0" cy="143.2" r="0.9" fill="#4070f0" opacity="0.83"/><circle cx="82.6" cy="135.1" r="1.5" fill="#4070f0" opacity="0.62"/><circle cx="99.2" cy="143.9" r="0.8" fill="#d080c0" opacity="0.52"/><circle cx="90.6" cy="132.1" r="0.9" fill="#60a8e8" opacity="0.74"/><circle cx="82.3" cy="128.2" r="1.0" fill="#4060f0" opacity="0.54"/><circle cx="81.7" cy="128.1" r="1.2" fill="#c0e0f0" opacity="0.56"/><circle cx="89.5" cy="133.6" r="1.1" fill="#60a8e8" opacity="0.88"/><circle cx="80.1" cy="117.9" r="1.1" fill="#4060f0" opacity="0.55"/><circle cx="106.6" cy="151.7" r="1.0" fill="#4060f0" opacity="0.74"/><circle cx="71.8" cy="119.8" r="1.6" fill="#c0e0f0" opacity="0.55"/><circle cx="77.0" cy="124.0" r="1.2" fill="#4060f0" opacity="0.90"/><circle cx="71.3" cy="123.4" r="1.0" fill="#c0e0f0" opacity="0.55"/><circle cx="96.5" cy="142.1" r="0.9" fill="#80c0f0" opacity="0.52"/><circle cx="86.2" cy="138.1" r="1.3" fill="#60a8e8" opacity="0.87"/><circle cx="96.2" cy="137.7" r="1.1" fill="#60a8e8" opacity="0.70"/><circle cx="99.0" cy="142.9" r="0.9" fill="#4070f0" opacity="0.91"/><circle cx="79.6" cy="134.7" r="1.6" fill="#4070f0" opacity="0.94"/><circle cx="81.8" cy="131.0" r="1.3" fill="#c0e0f0" opacity="0.92"/><circle cx="79.4" cy="131.4" r="1.0" fill="#c0e0f0" opacity="0.87"/><circle cx="80.4" cy="122.3" r="1.2" fill="#c0e0f0" opacity="0.94"/><circle cx="4.5" cy="159.5" r="1.1" fill="#80b0f0" opacity="0.57"/><circle cx="0.4" cy="147.0" r="1.5" fill="#a0e0d0" opacity="0.86"/><circle cx="7.4" cy="137.3" r="1.6" fill="#a0e0d0" opacity="0.68"/><circle cx="0.9" cy="144.7" r="1.5" fill="#80b0f0" opacity="0.92"/><circle cx="13.9" cy="148.4" r="1.7" fill="#e080b0" opacity="0.77"/><circle cx="3.7" cy="132.8" r="1.3" fill="#a0e0d0" opacity="0.70"/><circle cx="12.3" cy="139.8" r="1.2" fill="#e080b0" opacity="0.64"/><circle cx="7.6" cy="157.4" r="1.1" fill="#80b0f0" opacity="0.69"/><circle cx="11.6" cy="152.8" r="1.5" fill="#a0e0d0" opacity="0.76"/><circle cx="12.1" cy="134.6" r="1.1" fill="#f0a0a0" opacity="0.65"/><circle cx="0.2" cy="163.5" r="1.3" fill="#f0a0a0" opacity="0.59"/><circle cx="0.3" cy="152.7" r="1.3" fill="#a0e0d0" opacity="0.52"/><circle cx="12.2" cy="150.4" r="1.7" fill="#c0d0f0" opacity="0.68"/><circle cx="4.8" cy="146.7" r="1.5" fill="#f0a0a0" opacity="0.78"/><circle cx="7.2" cy="126.2" r="1.1" fill="#80b0f0" opacity="0.83"/><circle cx="6.9" cy="154.0" r="1.2" fill="#a0e0d0" opacity="0.80"/><circle cx="7.3" cy="161.3" r="1.4" fill="#c0d0f0" opacity="0.84"/><circle cx="3.3" cy="157.8" r="1.6" fill="#80b0f0" opacity="0.77"/><circle cx="10.9" cy="126.6" r="1.6" fill="#a0e0d0" opacity="0.77"/><circle cx="4.3" cy="166.2" r="1.0" fill="#a0e0d0" opacity="0.58"/><circle cx="1.0" cy="136.6" r="1.4" fill="#f0a0a0" opacity="0.54"/><circle cx="4.1" cy="162.6" r="1.4" fill="#c0d0f0" opacity="0.57"/><circle cx="8.5" cy="157.4" r="1.0" fill="#c0d0f0" opacity="0.56"/><circle cx="13.6" cy="152.4" r="1.6" fill="#f0a0a0" opacity="0.60"/><circle cx="10.3" cy="155.7" r="1.1" fill="#a0e0d0" opacity="0.81"/><circle cx="3.1" cy="173.3" r="1.6" fill="#f0a0a0" opacity="0.55"/><circle cx="3.2" cy="151.1" r="1.2" fill="#a0e0d0" opacity="0.61"/><circle cx="6.9" cy="132.2" r="1.0" fill="#e080b0" opacity="0.69"/><circle cx="3.0" cy="174.3" r="1.2" fill="#f0a0a0" opacity="0.72"/><circle cx="3.0" cy="125.8" r="1.6" fill="#80b0f0" opacity="0.84"/></g>
<g filter="url(#nb1)"><ellipse cx="89.5" cy="71" rx="45" ry="49" fill="url(#blob)"/><circle cx="118.4" cy="63.6" r="1.5" fill="#7080ff" opacity="0.56"/><circle cx="53.5" cy="95.5" r="1.2" fill="#a0a0ff" opacity="0.69"/><circle cx="107.8" cy="62.3" r="1.1" fill="#a050f0" opacity="0.79"/><circle cx="63.0" cy="62.5" r="0.9" fill="#4858e0" opacity="0.74"/><circle cx="79.4" cy="74.6" r="1.1" fill="#d040e8" opacity="0.86"/><circle cx="91.5" cy="38.2" r="1.0" fill="#7080ff" opacity="0.77"/><circle cx="76.4" cy="101.4" r="1.6" fill="#6068f0" opacity="0.67"/><circle cx="87.7" cy="91.0" r="1.4" fill="#8858f0" opacity="0.57"/><circle cx="101.9" cy="57.0" r="1.2" fill="#a050f0" opacity="0.88"/><circle cx="73.8" cy="74.6" r="2.0" fill="#d040e8" opacity="0.82"/><circle cx="103.8" cy="42.8" r="1.3" fill="#7080ff" opacity="0.58"/><circle cx="75.9" cy="53.4" r="2.0" fill="#f080e8" opacity="0.88"/><circle cx="104.4" cy="62.0" r="1.1" fill="#8858f0" opacity="0.84"/><circle cx="86.0" cy="105.9" r="1.5" fill="#c060e8" opacity="0.75"/><circle cx="95.0" cy="95.6" r="1.1" fill="#f080e8" opacity="0.85"/><circle cx="109.9" cy="47.8" r="1.5" fill="#5058e0" opacity="0.82"/><circle cx="84.8" cy="57.6" r="1.4" fill="#f070c0" opacity="0.71"/><circle cx="72.0" cy="45.3" r="1.3" fill="#6068f0" opacity="0.76"/><circle cx="95.2" cy="104.3" r="0.9" fill="#c060e8" opacity="0.81"/><circle cx="121.4" cy="94.4" r="1.4" fill="#6068f0" opacity="0.88"/><circle cx="82.9" cy="36.8" r="1.2" fill="#4858e0" opacity="0.65"/><circle cx="97.8" cy="40.5" r="1.9" fill="#6068f0" opacity="0.92"/><circle cx="54.8" cy="46.5" r="1.3" fill="#c060e8" opacity="0.85"/><circle cx="77.5" cy="61.1" r="2.0" fill="#8858f0" opacity="0.73"/><circle cx="115.5" cy="60.6" r="1.6" fill="#6068f0" opacity="0.78"/><circle cx="54.5" cy="93.9" r="0.9" fill="#c060e8" opacity="0.83"/><circle cx="104.6" cy="113.7" r="1.3" fill="#c060e8" opacity="0.64"/><circle cx="45.6" cy="58.9" r="1.0" fill="#7080ff" opacity="0.57"/><circle cx="58.5" cy="48.2" r="1.1" fill="#c060e8" opacity="0.85"/><circle cx="84.1" cy="42.4" r="1.3" fill="#a0a0ff" opacity="0.68"/><circle cx="55.8" cy="99.5" r="1.6" fill="#9060f0" opacity="0.76"/><circle cx="62.0" cy="107.7" r="1.2" fill="#7080ff" opacity="0.64"/><circle cx="102.9" cy="109.9" r="0.9" fill="#4858e0" opacity="0.79"/><circle cx="117.1" cy="90.9" r="1.6" fill="#4858e0" opacity="0.79"/><circle cx="99.2" cy="71.1" r="1.9" fill="#f080e8" opacity="0.54"/><circle cx="94.5" cy="103.0" r="1.0" fill="#a0a0ff" opacity="0.88"/><circle cx="47.2" cy="80.4" r="1.0" fill="#6068f0" opacity="0.77"/><circle cx="127.4" cy="63.4" r="1.3" fill="#9060f0" opacity="0.93"/><circle cx="109.0" cy="56.1" r="2.1" fill="#a050f0" opacity="0.71"/><circle cx="96.2" cy="42.9" r="1.3" fill="#7080ff" opacity="0.62"/><circle cx="65.4" cy="98.7" r="1.2" fill="#9060f0" opacity="0.90"/><circle cx="100.6" cy="35.5" r="1.3" fill="#9060f0" opacity="0.74"/><circle cx="64.7" cy="51.7" r="2.1" fill="#9060f0" opacity="0.63"/><circle cx="117.2" cy="58.1" r="1.7" fill="#9060f0" opacity="0.63"/><circle cx="90.3" cy="43.9" r="1.3" fill="#f060e0" opacity="0.55"/><circle cx="76.9" cy="24.5" r="1.3" fill="#7080ff" opacity="0.60"/><circle cx="109.2" cy="49.9" r="1.9" fill="#6068f0" opacity="0.78"/><circle cx="104.2" cy="57.1" r="0.9" fill="#8858f0" opacity="0.71"/><circle cx="65.0" cy="46.3" r="1.5" fill="#5058e0" opacity="0.71"/><circle cx="94.3" cy="79.7" r="1.3" fill="#f8a8f0" opacity="0.74"/><circle cx="55.1" cy="93.8" r="1.7" fill="#5058e0" opacity="0.64"/><circle cx="107.1" cy="61.0" r="1.3" fill="#c838c8" opacity="0.94"/><circle cx="99.6" cy="31.0" r="1.5" fill="#a0a0ff" opacity="0.77"/><circle cx="103.2" cy="46.9" r="1.4" fill="#c060e8" opacity="0.57"/><circle cx="117.1" cy="60.3" r="1.7" fill="#a0a0ff" opacity="0.83"/><circle cx="73.6" cy="34.1" r="1.0" fill="#7080ff" opacity="0.69"/><circle cx="67.1" cy="96.9" r="1.6" fill="#6068f0" opacity="0.58"/><circle cx="84.6" cy="97.6" r="1.5" fill="#c838c8" opacity="0.85"/><circle cx="44.6" cy="71.4" r="1.4" fill="#c060e8" opacity="0.75"/><circle cx="102.3" cy="37.9" r="1.6" fill="#c060e8" opacity="0.54"/><circle cx="83.9" cy="54.0" r="1.2" fill="#f060e0" opacity="0.52"/><circle cx="59.9" cy="90.1" r="1.2" fill="#6068f0" opacity="0.73"/><circle cx="87.8" cy="78.2" r="1.7" fill="#f080e8" opacity="0.55"/><circle cx="67.2" cy="63.3" r="1.3" fill="#8858f0" opacity="0.60"/><circle cx="133.5" cy="81.4" r="1.8" fill="#6068f0" opacity="0.80"/><circle cx="58.0" cy="101.1" r="1.4" fill="#9060f0" opacity="0.81"/><circle cx="98.4" cy="22.9" r="1.8" fill="#9060f0" opacity="0.60"/><circle cx="74.1" cy="102.9" r="1.6" fill="#c060e8" opacity="0.90"/><circle cx="108.6" cy="86.0" r="1.4" fill="#8858f0" opacity="0.53"/><circle cx="109.3" cy="79.0" r="1.9" fill="#e848d8" opacity="0.77"/><circle cx="70.7" cy="54.3" r="1.4" fill="#e848d8" opacity="0.77"/><circle cx="86.1" cy="30.2" r="1.2" fill="#7080ff" opacity="0.54"/><circle cx="89.3" cy="110.6" r="1.5" fill="#c060e8" opacity="0.76"/><circle cx="73.6" cy="41.2" r="1.9" fill="#7080ff" opacity="0.86"/><circle cx="93.7" cy="117.5" r="1.5" fill="#9060f0" opacity="0.94"/><circle cx="102.7" cy="37.0" r="1.3" fill="#9060f0" opacity="0.79"/><circle cx="106.4" cy="61.9" r="1.2" fill="#d040e8" opacity="0.72"/><circle cx="76.5" cy="63.9" r="1.8" fill="#a050f0" opacity="0.53"/><circle cx="93.7" cy="79.5" r="1.4" fill="#f070c0" opacity="0.77"/><circle cx="81.9" cy="64.6" r="1.9" fill="#e848d8" opacity="0.75"/><circle cx="68.9" cy="101.0" r="1.2" fill="#4858e0" opacity="0.56"/><circle cx="65.4" cy="36.5" r="1.3" fill="#7080ff" opacity="0.65"/><circle cx="94.3" cy="102.8" r="1.4" fill="#6068f0" opacity="0.90"/><circle cx="84.1" cy="75.9" r="1.4" fill="#a050f0" opacity="0.74"/><circle cx="93.3" cy="102.3" r="1.4" fill="#a0a0ff" opacity="0.72"/><circle cx="132.5" cy="78.5" r="1.4" fill="#c060e8" opacity="0.58"/><circle cx="95.7" cy="110.5" r="1.8" fill="#a0a0ff" opacity="0.89"/><circle cx="115.4" cy="42.0" r="1.1" fill="#6068f0" opacity="0.61"/><circle cx="79.1" cy="33.6" r="1.0" fill="#9060f0" opacity="0.89"/><circle cx="77.1" cy="47.5" r="1.7" fill="#f8a8f0" opacity="0.94"/><circle cx="105.3" cy="72.2" r="2.0" fill="#f060e0" opacity="0.67"/><circle cx="63.8" cy="69.7" r="2.0" fill="#9060f0" opacity="0.70"/><circle cx="115.1" cy="49.2" r="1.5" fill="#c060e8" opacity="0.80"/><circle cx="114.4" cy="53.1" r="1.9" fill="#9060f0" opacity="0.63"/><circle cx="65.6" cy="102.9" r="1.2" fill="#5058e0" opacity="0.85"/><circle cx="122.6" cy="87.9" r="2.1" fill="#9060f0" opacity="0.87"/><circle cx="50.3" cy="70.0" r="1.9" fill="#4858e0" opacity="0.72"/><circle cx="62.2" cy="68.7" r="1.1" fill="#9060f0" opacity="0.90"/><circle cx="82.7" cy="89.7" r="1.9" fill="#8858f0" opacity="0.85"/><circle cx="125.9" cy="52.8" r="1.2" fill="#5058e0" opacity="0.89"/><circle cx="98.2" cy="79.0" r="1.8" fill="#f8a8f0" opacity="0.90"/><circle cx="60.7" cy="69.3" r="1.7" fill="#4858e0" opacity="0.70"/><circle cx="59.8" cy="55.5" r="1.2" fill="#9060f0" opacity="0.52"/><circle cx="67.7" cy="84.3" r="1.8" fill="#f070c0" opacity="0.87"/><circle cx="74.8" cy="29.4" r="1.1" fill="#6068f0" opacity="0.87"/><circle cx="121.0" cy="56.0" r="1.0" fill="#4858e0" opacity="0.76"/><circle cx="122.4" cy="93.6" r="1.2" fill="#9060f0" opacity="0.69"/><circle cx="87.2" cy="30.1" r="1.3" fill="#9060f0" opacity="0.83"/><circle cx="105.6" cy="111.9" r="1.0" fill="#c060e8" opacity="0.63"/><circle cx="83.5" cy="103.8" r="1.5" fill="#c060e8" opacity="0.77"/><circle cx="67.4" cy="60.2" r="1.8" fill="#f080e8" opacity="0.73"/><circle cx="110.2" cy="84.9" r="1.5" fill="#f070c0" opacity="0.68"/><circle cx="79.3" cy="32.6" r="1.8" fill="#6068f0" opacity="0.67"/><circle cx="87.8" cy="81.4" r="1.4" fill="#c838c8" opacity="0.68"/><circle cx="119.7" cy="82.4" r="1.2" fill="#6068f0" opacity="0.83"/><circle cx="91.5" cy="30.7" r="1.1" fill="#c060e8" opacity="0.56"/><circle cx="113.3" cy="45.3" r="1.5" fill="#a0a0ff" opacity="0.66"/><circle cx="119.2" cy="49.1" r="1.0" fill="#9060f0" opacity="0.69"/><circle cx="122.8" cy="98.2" r="1.7" fill="#7080ff" opacity="0.95"/><circle cx="61.2" cy="36.4" r="1.9" fill="#a0a0ff" opacity="0.77"/><circle cx="67.5" cy="90.2" r="1.5" fill="#5058e0" opacity="0.63"/><circle cx="99.0" cy="92.5" r="1.7" fill="#8858f0" opacity="0.61"/><circle cx="61.2" cy="94.0" r="2.1" fill="#4858e0" opacity="0.82"/><circle cx="61.8" cy="79.1" r="1.7" fill="#5058e0" opacity="0.71"/><circle cx="95.7" cy="105.8" r="1.0" fill="#7080ff" opacity="0.75"/><circle cx="66.4" cy="70.5" r="1.8" fill="#f060e0" opacity="0.68"/><circle cx="80.1" cy="80.4" r="2.0" fill="#a050f0" opacity="0.65"/><circle cx="65.5" cy="43.2" r="2.0" fill="#7080ff" opacity="0.66"/><circle cx="53.4" cy="61.2" r="1.7" fill="#9060f0" opacity="0.93"/><circle cx="55.1" cy="80.3" r="1.6" fill="#7080ff" opacity="0.55"/><circle cx="65.3" cy="76.0" r="1.0" fill="#d040e8" opacity="0.80"/><circle cx="44.5" cy="66.7" r="1.7" fill="#7080ff" opacity="0.69"/><circle cx="110.3" cy="68.3" r="1.8" fill="#e848d8" opacity="0.93"/><circle cx="63.1" cy="63.8" r="1.3" fill="#7080ff" opacity="0.61"/><circle cx="100.3" cy="26.4" r="1.4" fill="#9060f0" opacity="0.70"/><circle cx="122.7" cy="73.0" r="1.5" fill="#4858e0" opacity="0.95"/><circle cx="125.8" cy="45.5" r="1.3" fill="#9060f0" opacity="0.65"/><circle cx="124.2" cy="94.1" r="1.1" fill="#c060e8" opacity="0.82"/><circle cx="102.2" cy="75.9" r="1.5" fill="#f080e8" opacity="0.70"/><circle cx="129.0" cy="63.2" r="1.1" fill="#5058e0" opacity="0.55"/><circle cx="117.2" cy="90.1" r="1.2" fill="#a0a0ff" opacity="0.64"/><circle cx="86.7" cy="92.4" r="1.4" fill="#f080e8" opacity="0.75"/><circle cx="103.4" cy="33.0" r="2.0" fill="#5058e0" opacity="0.73"/><circle cx="67.5" cy="48.3" r="1.9" fill="#c060e8" opacity="0.79"/><circle cx="116.8" cy="77.0" r="1.1" fill="#4858e0" opacity="0.80"/><circle cx="93.7" cy="59.7" r="2.1" fill="#f060e0" opacity="0.65"/><circle cx="91.4" cy="69.6" r="1.0" fill="#d040e8" opacity="0.72"/><circle cx="78.2" cy="75.8" r="1.8" fill="#f8a8f0" opacity="0.60"/><circle cx="90.7" cy="114.6" r="1.4" fill="#c060e8" opacity="0.82"/><circle cx="94.1" cy="119.2" r="1.2" fill="#5058e0" opacity="0.70"/><circle cx="120.3" cy="41.7" r="1.3" fill="#7080ff" opacity="0.74"/><circle cx="67.2" cy="31.9" r="1.7" fill="#4858e0" opacity="0.56"/><circle cx="129.9" cy="83.2" r="1.2" fill="#5058e0" opacity="0.58"/><circle cx="90.8" cy="117.1" r="1.6" fill="#c060e8" opacity="0.80"/><circle cx="82.3" cy="105.8" r="1.1" fill="#9060f0" opacity="0.69"/><circle cx="124.6" cy="42.3" r="2.0" fill="#a0a0ff" opacity="0.59"/><circle cx="70.9" cy="63.8" r="0.9" fill="#f8a8f0" opacity="0.92"/><circle cx="91.5" cy="88.3" r="1.4" fill="#f060e0" opacity="0.75"/><circle cx="75.0" cy="92.5" r="1.4" fill="#f070c0" opacity="0.92"/><circle cx="61.4" cy="67.9" r="1.6" fill="#5058e0" opacity="0.62"/><circle cx="83.2" cy="36.7" r="1.2" fill="#9060f0" opacity="0.79"/><circle cx="97.5" cy="59.4" r="1.0" fill="#a050f0" opacity="0.68"/><circle cx="85.3" cy="62.7" r="1.3" fill="#a050f0" opacity="0.86"/><circle cx="66.3" cy="50.8" r="1.0" fill="#5058e0" opacity="0.73"/><circle cx="89.3" cy="26.9" r="1.6" fill="#4858e0" opacity="0.82"/><circle cx="99.5" cy="92.3" r="1.0" fill="#e848d8" opacity="0.54"/><circle cx="101.6" cy="62.8" r="1.1" fill="#c838c8" opacity="0.93"/><circle cx="61.2" cy="41.9" r="1.8" fill="#c060e8" opacity="0.62"/><circle cx="46.3" cy="81.0" r="1.2" fill="#6068f0" opacity="0.77"/><circle cx="55.2" cy="100.4" r="1.7" fill="#5058e0" opacity="0.57"/><circle cx="53.3" cy="51.4" r="1.3" fill="#a0a0ff" opacity="0.83"/><circle cx="112.4" cy="104.9" r="1.2" fill="#5058e0" opacity="0.65"/><circle cx="104.1" cy="80.6" r="0.9" fill="#c838c8" opacity="0.57"/><circle cx="124.7" cy="47.9" r="1.1" fill="#9060f0" opacity="0.70"/><circle cx="90.1" cy="94.8" r="1.2" fill="#8858f0" opacity="0.69"/><circle cx="63.6" cy="44.0" r="1.4" fill="#5058e0" opacity="0.81"/><circle cx="73.6" cy="89.3" r="1.8" fill="#f070c0" opacity="0.60"/><circle cx="69.1" cy="55.9" r="2.1" fill="#d040e8" opacity="0.95"/><circle cx="125.8" cy="73.1" r="1.9" fill="#5058e0" opacity="0.76"/><circle cx="58.9" cy="53.7" r="2.1" fill="#5058e0" opacity="0.67"/><circle cx="119.7" cy="46.3" r="2.0" fill="#6068f0" opacity="0.54"/><circle cx="99.4" cy="25.5" r="1.7" fill="#c060e8" opacity="0.93"/><circle cx="80.7" cy="106.2" r="2.0" fill="#c060e8" opacity="0.72"/><circle cx="79.0" cy="103.3" r="1.8" fill="#5058e0" opacity="0.77"/><circle cx="108.9" cy="51.6" r="1.5" fill="#7080ff" opacity="0.78"/><circle cx="105.8" cy="39.1" r="1.7" fill="#a0a0ff" opacity="0.72"/><circle cx="129.0" cy="75.3" r="1.5" fill="#7080ff" opacity="0.68"/><circle cx="90.6" cy="77.1" r="1.9" fill="#a050f0" opacity="0.93"/><circle cx="81.1" cy="53.3" r="1.2" fill="#8858f0" opacity="0.84"/><circle cx="125.2" cy="70.4" r="1.1" fill="#9060f0" opacity="0.62"/><circle cx="80.9" cy="62.3" r="1.4" fill="#a050f0" opacity="0.58"/><circle cx="115.9" cy="92.4" r="1.5" fill="#9060f0" opacity="0.64"/><circle cx="71.9" cy="103.4" r="1.0" fill="#5058e0" opacity="0.73"/><circle cx="108.2" cy="38.8" r="1.6" fill="#5058e0" opacity="0.72"/><circle cx="127.2" cy="94.9" r="1.5" fill="#9060f0" opacity="0.58"/><circle cx="86.7" cy="88.0" r="1.1" fill="#a050f0" opacity="0.80"/><circle cx="99.9" cy="39.7" r="1.0" fill="#c060e8" opacity="0.55"/><circle cx="67.1" cy="106.3" r="1.7" fill="#6068f0" opacity="0.56"/><circle cx="70.2" cy="73.6" r="1.5" fill="#f8a8f0" opacity="0.79"/><circle cx="94.7" cy="57.1" r="1.4" fill="#e848d8" opacity="0.91"/><circle cx="55.7" cy="58.5" r="1.1" fill="#a0a0ff" opacity="0.87"/><circle cx="95.2" cy="86.4" r="1.9" fill="#f8a8f0" opacity="0.56"/><circle cx="86.0" cy="112.7" r="1.5" fill="#c060e8" opacity="0.94"/><circle cx="77.4" cy="25.0" r="1.7" fill="#6068f0" opacity="0.55"/><circle cx="65.7" cy="71.9" r="1.8" fill="#8858f0" opacity="0.94"/><circle cx="102.4" cy="85.3" r="1.7" fill="#e848d8" opacity="0.91"/><circle cx="61.7" cy="45.1" r="1.8" fill="#6068f0" opacity="0.79"/><circle cx="96.3" cy="72.9" r="1.9" fill="#f070c0" opacity="0.67"/><circle cx="96.9" cy="103.0" r="1.3" fill="#a0a0ff" opacity="0.62"/><circle cx="121.1" cy="90.7" r="1.8" fill="#7080ff" opacity="0.61"/><circle cx="111.7" cy="50.4" r="1.6" fill="#5058e0" opacity="0.69"/><circle cx="59.7" cy="90.8" r="1.4" fill="#c060e8" opacity="0.67"/><circle cx="110.2" cy="76.6" r="1.4" fill="#f080e8" opacity="0.89"/><circle cx="124.6" cy="45.8" r="1.1" fill="#4858e0" opacity="0.84"/><circle cx="92.6" cy="66.3" r="1.8" fill="#d040e8" opacity="0.59"/><circle cx="102.0" cy="54.0" r="1.5" fill="#f080e8" opacity="0.73"/><circle cx="65.6" cy="111.1" r="1.9" fill="#5058e0" opacity="0.80"/><circle cx="111.2" cy="57.8" r="2.0" fill="#c838c8" opacity="0.81"/><circle cx="108.7" cy="37.5" r="1.8" fill="#c060e8" opacity="0.84"/><circle cx="78.5" cy="93.3" r="1.0" fill="#c838c8" opacity="0.64"/><circle cx="92.3" cy="116.5" r="1.5" fill="#5058e0" opacity="0.68"/><circle cx="76.7" cy="30.0" r="1.1" fill="#9060f0" opacity="0.76"/><circle cx="83.4" cy="113.7" r="1.2" fill="#6068f0" opacity="0.91"/><circle cx="129.6" cy="52.0" r="1.7" fill="#c060e8" opacity="0.51"/><circle cx="123.0" cy="56.2" r="1.8" fill="#a0a0ff" opacity="0.53"/><circle cx="88.3" cy="40.4" r="0.9" fill="#5058e0" opacity="0.91"/><circle cx="109.0" cy="71.7" r="1.0" fill="#8858f0" opacity="0.61"/><circle cx="107.5" cy="77.2" r="1.2" fill="#f070c0" opacity="0.94"/><circle cx="82.1" cy="114.7" r="1.1" fill="#4858e0" opacity="0.72"/><circle cx="62.1" cy="105.8" r="2.0" fill="#c060e8" opacity="0.74"/><circle cx="94.6" cy="84.4" r="1.8" fill="#f080e8" opacity="0.52"/><circle cx="49.1" cy="53.7" r="1.8" fill="#6068f0" opacity="0.82"/><circle cx="72.8" cy="99.5" r="2.0" fill="#7080ff" opacity="0.86"/><circle cx="91.3" cy="48.3" r="1.7" fill="#f060e0" opacity="0.51"/><circle cx="127.1" cy="66.0" r="1.3" fill="#5058e0" opacity="0.94"/><circle cx="97.1" cy="65.7" r="1.4" fill="#a050f0" opacity="0.72"/><circle cx="121.9" cy="52.1" r="1.6" fill="#5058e0" opacity="0.56"/><circle cx="96.0" cy="38.4" r="2.1" fill="#a0a0ff" opacity="0.75"/><circle cx="113.7" cy="112.6" r="1.9" fill="#7080ff" opacity="0.65"/><circle cx="113.8" cy="60.0" r="1.1" fill="#4858e0" opacity="0.51"/><circle cx="115.7" cy="104.3" r="1.8" fill="#c060e8" opacity="0.87"/><circle cx="101.5" cy="86.9" r="1.6" fill="#a050f0" opacity="0.77"/><circle cx="53.1" cy="48.0" r="1.2" fill="#6068f0" opacity="0.72"/><circle cx="116.4" cy="71.9" r="2.0" fill="#c060e8" opacity="0.80"/><circle cx="74.5" cy="99.6" r="1.7" fill="#9060f0" opacity="0.60"/><circle cx="74.6" cy="44.1" r="1.8" fill="#6068f0" opacity="0.56"/><circle cx="101.1" cy="82.5" r="1.7" fill="#f060e0" opacity="0.85"/><circle cx="107.8" cy="38.3" r="2.0" fill="#c060e8" opacity="0.65"/><circle cx="62.5" cy="48.6" r="1.4" fill="#c060e8" opacity="0.63"/><circle cx="51.4" cy="53.7" r="1.9" fill="#9060f0" opacity="0.79"/><circle cx="81.6" cy="117.3" r="1.1" fill="#6068f0" opacity="0.53"/><circle cx="93.3" cy="93.1" r="1.5" fill="#e848d8" opacity="0.76"/><circle cx="64.8" cy="104.7" r="1.0" fill="#4858e0" opacity="0.51"/><circle cx="106.8" cy="47.2" r="1.0" fill="#9060f0" opacity="0.60"/><circle cx="97.1" cy="76.3" r="1.0" fill="#f080e8" opacity="0.82"/><circle cx="96.9" cy="65.5" r="1.6" fill="#a050f0" opacity="0.65"/><circle cx="114.2" cy="79.5" r="1.2" fill="#7080ff" opacity="0.55"/><circle cx="53.9" cy="92.9" r="1.6" fill="#5058e0" opacity="0.74"/><circle cx="121.0" cy="46.2" r="2.0" fill="#6068f0" opacity="0.85"/><circle cx="114.3" cy="70.4" r="1.5" fill="#f8a8f0" opacity="0.74"/><circle cx="75.4" cy="106.3" r="1.5" fill="#a0a0ff" opacity="0.90"/><circle cx="79.6" cy="85.4" r="2.0" fill="#d040e8" opacity="0.82"/><circle cx="80.6" cy="41.5" r="1.9" fill="#9060f0" opacity="0.70"/><circle cx="68.2" cy="67.9" r="1.4" fill="#f060e0" opacity="0.68"/><circle cx="87.4" cy="24.8" r="1.5" fill="#6068f0" opacity="0.69"/><circle cx="103.0" cy="42.2" r="1.3" fill="#5058e0" opacity="0.53"/><circle cx="108.2" cy="62.4" r="1.2" fill="#c838c8" opacity="0.83"/><circle cx="121.3" cy="104.9" r="1.8" fill="#5058e0" opacity="0.82"/><circle cx="74.9" cy="57.8" r="0.9" fill="#f070c0" opacity="0.65"/><circle cx="120.1" cy="46.0" r="1.4" fill="#5058e0" opacity="0.57"/><circle cx="106.3" cy="53.4" r="1.4" fill="#d040e8" opacity="0.82"/><circle cx="75.6" cy="27.3" r="1.2" fill="#6068f0" opacity="0.61"/><circle cx="108.3" cy="90.8" r="0.9" fill="#6068f0" opacity="0.88"/><circle cx="102.2" cy="87.0" r="2.0" fill="#c838c8" opacity="0.61"/><circle cx="92.0" cy="48.7" r="1.2" fill="#f080e8" opacity="0.65"/><circle cx="88.8" cy="109.7" r="1.8" fill="#9060f0" opacity="0.60"/><circle cx="111.6" cy="97.2" r="2.0" fill="#7080ff" opacity="0.91"/><circle cx="114.4" cy="46.3" r="0.9" fill="#4858e0" opacity="0.88"/><circle cx="70.5" cy="40.1" r="1.1" fill="#6068f0" opacity="0.91"/><circle cx="59.4" cy="64.2" r="1.1" fill="#9060f0" opacity="0.90"/><circle cx="61.3" cy="59.2" r="1.0" fill="#6068f0" opacity="0.77"/><circle cx="86.5" cy="94.8" r="0.9" fill="#f080e8" opacity="0.84"/><circle cx="78.9" cy="80.7" r="0.9" fill="#d040e8" opacity="0.78"/><circle cx="116.5" cy="50.2" r="1.2" fill="#4858e0" opacity="0.90"/><circle cx="64.2" cy="39.1" r="1.0" fill="#c060e8" opacity="0.68"/><circle cx="90.8" cy="111.4" r="1.3" fill="#6068f0" opacity="0.63"/><circle cx="120.2" cy="40.5" r="1.4" fill="#6068f0" opacity="0.69"/><circle cx="108.8" cy="63.7" r="1.2" fill="#d040e8" opacity="0.62"/><circle cx="60.7" cy="90.1" r="1.5" fill="#a0a0ff" opacity="0.52"/><circle cx="71.9" cy="100.7" r="1.4" fill="#6068f0" opacity="0.81"/><circle cx="48.9" cy="89.1" r="1.5" fill="#a0a0ff" opacity="0.77"/><circle cx="126.9" cy="68.5" r="1.9" fill="#9060f0" opacity="0.65"/><circle cx="116.3" cy="102.8" r="1.2" fill="#c060e8" opacity="0.85"/><circle cx="75.1" cy="58.6" r="2.0" fill="#e848d8" opacity="0.53"/><circle cx="102.0" cy="46.4" r="1.9" fill="#7080ff" opacity="0.90"/><circle cx="85.3" cy="104.2" r="1.5" fill="#a0a0ff" opacity="0.57"/><circle cx="99.7" cy="72.1" r="1.0" fill="#8858f0" opacity="0.89"/><circle cx="108.3" cy="27.8" r="1.3" fill="#c060e8" opacity="0.79"/><circle cx="115.6" cy="75.9" r="1.4" fill="#4858e0" opacity="0.52"/><circle cx="113.7" cy="106.4" r="1.9" fill="#4858e0" opacity="0.59"/><circle cx="68.0" cy="89.3" r="1.2" fill="#a0a0ff" opacity="0.95"/><circle cx="69.3" cy="66.2" r="1.7" fill="#d040e8" opacity="0.74"/><circle cx="133.9" cy="70.0" r="1.1" fill="#c060e8" opacity="0.59"/><circle cx="94.0" cy="102.7" r="1.4" fill="#5058e0" opacity="0.57"/><circle cx="60.0" cy="75.4" r="1.1" fill="#5058e0" opacity="0.52"/><circle cx="92.2" cy="72.9" r="1.0" fill="#f080e8" opacity="0.72"/><circle cx="116.7" cy="45.9" r="1.9" fill="#9060f0" opacity="0.74"/><circle cx="62.0" cy="51.3" r="1.1" fill="#9060f0" opacity="0.56"/><circle cx="96.3" cy="98.6" r="2.1" fill="#6068f0" opacity="0.57"/><circle cx="115.9" cy="89.8" r="1.5" fill="#a0a0ff" opacity="0.83"/><circle cx="95.1" cy="38.3" r="1.2" fill="#5058e0" opacity="0.57"/><circle cx="64.8" cy="102.9" r="1.0" fill="#9060f0" opacity="0.58"/><circle cx="113.7" cy="49.4" r="1.0" fill="#a0a0ff" opacity="0.70"/><circle cx="97.7" cy="89.4" r="0.9" fill="#a050f0" opacity="0.86"/><circle cx="111.1" cy="60.3" r="2.0" fill="#f060e0" opacity="0.89"/><circle cx="123.6" cy="52.4" r="1.7" fill="#5058e0" opacity="0.67"/><circle cx="98.4" cy="106.1" r="2.0" fill="#c060e8" opacity="0.93"/><circle cx="93.1" cy="119.8" r="1.9" fill="#9060f0" opacity="0.77"/><circle cx="90.7" cy="113.8" r="1.9" fill="#9060f0" opacity="0.70"/><circle cx="101.9" cy="102.8" r="1.3" fill="#c060e8" opacity="0.60"/><circle cx="45.8" cy="67.2" r="1.5" fill="#c060e8" opacity="0.83"/><circle cx="86.4" cy="48.0" r="1.6" fill="#a050f0" opacity="0.86"/><circle cx="100.1" cy="40.1" r="1.4" fill="#4858e0" opacity="0.72"/><circle cx="53.7" cy="69.9" r="2.0" fill="#4858e0" opacity="0.94"/><circle cx="64.4" cy="101.3" r="2.0" fill="#c060e8" opacity="0.81"/><circle cx="68.3" cy="90.8" r="1.9" fill="#5058e0" opacity="0.82"/><circle cx="104.4" cy="71.7" r="1.9" fill="#d040e8" opacity="0.62"/><circle cx="107.5" cy="58.7" r="1.6" fill="#8858f0" opacity="0.78"/><circle cx="68.1" cy="82.0" r="1.3" fill="#c838c8" opacity="0.83"/><circle cx="77.3" cy="42.6" r="1.6" fill="#c060e8" opacity="0.60"/><circle cx="82.7" cy="111.0" r="1.4" fill="#a0a0ff" opacity="0.75"/><circle cx="90.6" cy="44.1" r="1.1" fill="#d040e8" opacity="0.67"/><circle cx="80.8" cy="24.4" r="1.6" fill="#c060e8" opacity="0.95"/><circle cx="112.9" cy="30.3" r="1.6" fill="#6068f0" opacity="0.73"/><circle cx="100.7" cy="94.0" r="1.3" fill="#8858f0" opacity="0.63"/><circle cx="89.9" cy="64.9" r="2.0" fill="#f080e8" opacity="0.79"/><circle cx="97.5" cy="73.7" r="1.1" fill="#e848d8" opacity="0.69"/><circle cx="67.8" cy="37.8" r="2.0" fill="#9060f0" opacity="0.68"/><circle cx="70.5" cy="33.5" r="1.7" fill="#c060e8" opacity="0.89"/><circle cx="72.6" cy="26.9" r="1.6" fill="#a0a0ff" opacity="0.86"/><circle cx="90.2" cy="88.0" r="1.6" fill="#f060e0" opacity="0.60"/><circle cx="87.1" cy="78.1" r="2.1" fill="#d040e8" opacity="0.84"/><circle cx="64.8" cy="107.1" r="1.5" fill="#6068f0" opacity="0.64"/><circle cx="91.8" cy="42.2" r="2.0" fill="#a0a0ff" opacity="0.90"/><circle cx="59.2" cy="52.0" r="1.3" fill="#5058e0" opacity="0.52"/><circle cx="47.1" cy="84.7" r="2.0" fill="#c060e8" opacity="0.54"/><circle cx="50.8" cy="87.2" r="1.1" fill="#5058e0" opacity="0.87"/><circle cx="120.6" cy="56.5" r="1.8" fill="#5058e0" opacity="0.94"/><circle cx="125.6" cy="84.0" r="1.1" fill="#a0a0ff" opacity="0.59"/><circle cx="99.3" cy="55.3" r="1.0" fill="#f8a8f0" opacity="0.58"/><circle cx="79.3" cy="53.8" r="1.5" fill="#8858f0" opacity="0.65"/><circle cx="103.5" cy="97.6" r="1.9" fill="#9060f0" opacity="0.50"/><circle cx="82.1" cy="81.6" r="1.1" fill="#f070c0" opacity="0.81"/><circle cx="48.0" cy="86.4" r="1.7" fill="#a0a0ff" opacity="0.77"/><circle cx="100.8" cy="110.2" r="1.8" fill="#6068f0" opacity="0.54"/><circle cx="87.1" cy="62.0" r="1.9" fill="#c838c8" opacity="0.58"/><circle cx="100.0" cy="104.2" r="1.3" fill="#5058e0" opacity="0.51"/><circle cx="68.3" cy="41.3" r="1.1" fill="#5058e0" opacity="0.57"/><circle cx="52.0" cy="45.5" r="1.3" fill="#7080ff" opacity="0.59"/><circle cx="121.2" cy="36.1" r="1.1" fill="#9060f0" opacity="0.73"/><circle cx="113.7" cy="37.8" r="1.1" fill="#a0a0ff" opacity="0.86"/><circle cx="101.6" cy="83.2" r="1.2" fill="#f060e0" opacity="0.64"/><circle cx="69.7" cy="74.0" r="1.1" fill="#8858f0" opacity="0.61"/><circle cx="115.1" cy="36.1" r="0.9" fill="#5058e0" opacity="0.62"/><circle cx="82.5" cy="27.3" r="1.0" fill="#4858e0" opacity="0.50"/><circle cx="87.6" cy="29.2" r="2.1" fill="#c060e8" opacity="0.76"/><circle cx="62.2" cy="91.6" r="1.4" fill="#7080ff" opacity="0.91"/><circle cx="122.8" cy="80.6" r="1.2" fill="#7080ff" opacity="0.70"/><circle cx="97.3" cy="118.7" r="1.5" fill="#5058e0" opacity="0.75"/><circle cx="54.3" cy="62.0" r="0.9" fill="#a0a0ff" opacity="0.57"/><circle cx="58.3" cy="71.1" r="0.9" fill="#9060f0" opacity="0.87"/><circle cx="125.2" cy="96.4" r="1.6" fill="#5058e0" opacity="0.60"/><circle cx="52.0" cy="62.8" r="1.9" fill="#6068f0" opacity="0.67"/><circle cx="111.7" cy="51.0" r="1.9" fill="#a0a0ff" opacity="0.80"/><circle cx="96.1" cy="115.2" r="1.2" fill="#a0a0ff" opacity="0.87"/><circle cx="104.0" cy="29.2" r="1.3" fill="#5058e0" opacity="0.74"/><circle cx="94.9" cy="51.6" r="1.0" fill="#f8a8f0" opacity="0.79"/><circle cx="118.6" cy="91.7" r="1.4" fill="#7080ff" opacity="0.55"/><circle cx="118.9" cy="56.3" r="1.2" fill="#a0a0ff" opacity="0.72"/><circle cx="119.3" cy="102.9" r="1.7" fill="#4858e0" opacity="0.76"/><circle cx="67.7" cy="57.1" r="0.9" fill="#4858e0" opacity="0.57"/><circle cx="67.2" cy="28.5" r="2.1" fill="#a0a0ff" opacity="0.65"/><circle cx="54.6" cy="48.4" r="1.7" fill="#5058e0" opacity="0.78"/><circle cx="120.7" cy="38.6" r="1.8" fill="#9060f0" opacity="0.68"/><circle cx="70.9" cy="99.1" r="1.7" fill="#a0a0ff" opacity="0.64"/><circle cx="126.5" cy="69.5" r="1.5" fill="#7080ff" opacity="0.77"/><circle cx="90.0" cy="119.2" r="0.9" fill="#4858e0" opacity="0.71"/><circle cx="123.3" cy="104.2" r="1.4" fill="#6068f0" opacity="0.56"/><circle cx="115.9" cy="38.5" r="1.6" fill="#9060f0" opacity="0.78"/><circle cx="88.0" cy="90.4" r="1.3" fill="#c838c8" opacity="0.54"/><circle cx="95.6" cy="111.7" r="1.3" fill="#a0a0ff" opacity="0.54"/><circle cx="121.4" cy="50.1" r="1.3" fill="#a0a0ff" opacity="0.59"/><circle cx="108.8" cy="92.2" r="1.4" fill="#7080ff" opacity="0.71"/><circle cx="124.4" cy="57.2" r="1.1" fill="#9060f0" opacity="0.52"/><circle cx="132.2" cy="62.6" r="2.0" fill="#9060f0" opacity="0.52"/><circle cx="61.0" cy="49.7" r="2.0" fill="#7080ff" opacity="0.82"/><circle cx="56.0" cy="97.9" r="1.1" fill="#a0a0ff" opacity="0.80"/><circle cx="110.6" cy="114.6" r="2.0" fill="#a0a0ff" opacity="0.84"/><circle cx="78.2" cy="29.1" r="1.5" fill="#9060f0" opacity="0.53"/><circle cx="49.2" cy="83.4" r="1.9" fill="#c060e8" opacity="0.57"/><circle cx="60.2" cy="68.4" r="2.0" fill="#9060f0" opacity="0.58"/><circle cx="59.8" cy="78.1" r="1.6" fill="#7080ff" opacity="0.51"/><circle cx="121.3" cy="101.4" r="1.3" fill="#5058e0" opacity="0.74"/><circle cx="118.8" cy="58.2" r="2.0" fill="#9060f0" opacity="0.95"/><circle cx="84.1" cy="55.3" r="1.5" fill="#a050f0" opacity="0.78"/><circle cx="66.4" cy="105.3" r="1.8" fill="#4858e0" opacity="0.79"/><circle cx="114.8" cy="52.7" r="1.6" fill="#9060f0" opacity="0.60"/><circle cx="68.1" cy="105.9" r="1.4" fill="#7080ff" opacity="0.69"/><circle cx="57.9" cy="66.1" r="0.9" fill="#9060f0" opacity="0.84"/><circle cx="104.1" cy="24.3" r="1.7" fill="#c060e8" opacity="0.71"/><circle cx="85.8" cy="112.5" r="1.4" fill="#7080ff" opacity="0.67"/><circle cx="75.0" cy="60.0" r="1.8" fill="#c838c8" opacity="0.57"/><circle cx="99.6" cy="109.1" r="2.0" fill="#5058e0" opacity="0.69"/><circle cx="130.8" cy="87.1" r="1.6" fill="#9060f0" opacity="0.84"/><circle cx="69.0" cy="104.2" r="1.2" fill="#c060e8" opacity="0.84"/><circle cx="66.4" cy="40.3" r="1.6" fill="#5058e0" opacity="0.81"/><circle cx="84.0" cy="86.1" r="1.4" fill="#f070c0" opacity="0.74"/><circle cx="103.6" cy="42.0" r="1.3" fill="#9060f0" opacity="0.80"/><circle cx="72.6" cy="90.6" r="1.0" fill="#f060e0" opacity="0.55"/><circle cx="73.3" cy="68.2" r="1.3" fill="#f080e8" opacity="0.80"/><path d="M60 40q12-3 22-12" stroke="#70e070" stroke-width="2" fill="none" opacity=".9"/><path d="M58 44q8-1 14-5" stroke="#a0f0a0" stroke-width="1.4" fill="none" opacity=".8"/></g>
<g filter="url(#nb1)"><path d="M128 182q3-10 12-16t12-8" stroke="#f07838" stroke-width="2" fill="none" opacity=".95"/><path d="M122 125q6 6 14 5" stroke="#e8a030" stroke-width="1.6" fill="none" opacity=".9"/><path d="M152 215q3 4 6 9" stroke="#f09048" stroke-width="1.8" fill="none" opacity=".9"/><path d="M225 214q2 6 3 12" stroke="#f0a050" stroke-width="1.8" fill="none" opacity=".9"/><path d="M60 112q8 6 6 16" stroke="#e07030" stroke-width="1.4" fill="none" opacity=".9"/><path d="M2 96q8-2 14-6" stroke="#f08030" stroke-width="1.6" fill="none" opacity=".9"/><path d="M144 108l4 1 2 5-4 1z" fill="#e8f030"/><circle cx="247" cy="5" r="1.6" fill="#e0c0d0" opacity=".8"/><circle cx="250" cy="10" r="1.4" fill="#d0a0c0" opacity=".8"/><circle cx="244" cy="9" r="1.2" fill="#f0d0b0" opacity=".7"/><circle cx="251" cy="16" r="1.3" fill="#c0b0e0" opacity=".7"/><circle cx="241" cy="4" r="1" fill="#f0e0e0" opacity=".7"/><circle cx="112.8" cy="188.5" r="1.1" fill="#30e0a0" opacity="0.78"/><circle cx="237.8" cy="122.7" r="0.6" fill="#a0ff80" opacity="0.99"/><circle cx="135.8" cy="193.5" r="1.4" fill="#40f080" opacity="0.77"/><circle cx="157.3" cy="116.9" r="1.4" fill="#30e0a0" opacity="0.85"/><circle cx="19.3" cy="124.5" r="1.0" fill="#60ff60" opacity="0.83"/><circle cx="41.2" cy="177.1" r="0.9" fill="#40f080" opacity="0.75"/><circle cx="132.6" cy="30.8" r="1.3" fill="#60ff60" opacity="0.74"/><circle cx="253.2" cy="208.1" r="0.8" fill="#30e0a0" opacity="0.72"/><circle cx="246.4" cy="159.2" r="0.6" fill="#60ff60" opacity="0.82"/><circle cx="160.5" cy="225.3" r="1.0" fill="#a0ff80" opacity="0.80"/><circle cx="205.2" cy="2.4" r="1.0" fill="#a0ff80" opacity="0.86"/><circle cx="11.3" cy="188.1" r="1.2" fill="#50e0c0" opacity="0.83"/><circle cx="69.9" cy="171.2" r="0.8" fill="#50e0c0" opacity="0.84"/><circle cx="90.8" cy="2.7" r="0.8" fill="#60ff60" opacity="0.86"/><circle cx="181.1" cy="3.6" r="1.3" fill="#40f080" opacity="0.91"/><circle cx="210.6" cy="48.2" r="1.3" fill="#a0ff80" opacity="0.87"/><circle cx="136.6" cy="175.7" r="1.3" fill="#60ff60" opacity="0.86"/><circle cx="3.1" cy="175.5" r="1.4" fill="#a0ff80" opacity="0.90"/><circle cx="148.5" cy="136.3" r="1.3" fill="#50e0c0" opacity="0.93"/><circle cx="4.9" cy="203.9" r="1.2" fill="#60ff60" opacity="0.80"/><circle cx="122.4" cy="2.7" r="1.0" fill="#40f080" opacity="0.79"/><circle cx="151.5" cy="57.6" r="1.0" fill="#60ff60" opacity="0.88"/><circle cx="75.4" cy="122.9" r="0.9" fill="#50e0c0" opacity="0.79"/><circle cx="211.7" cy="98.1" r="1.3" fill="#a0ff80" opacity="0.87"/><circle cx="236.8" cy="205.0" r="1.1" fill="#50e0c0" opacity="0.83"/><circle cx="198.2" cy="27.8" r="1.2" fill="#60ff60" opacity="0.87"/><circle cx="186.0" cy="134.6" r="1.1" fill="#a0ff80" opacity="0.96"/><circle cx="33.0" cy="11.8" r="1.1" fill="#a0ff80" opacity="0.78"/><circle cx="242.4" cy="50.0" r="1.3" fill="#40f080" opacity="0.89"/><circle cx="134.7" cy="146.5" r="1.1" fill="#a0ff80" opacity="0.90"/><circle cx="167.5" cy="144.7" r="0.7" fill="#60ff60" opacity="0.98"/><circle cx="166.7" cy="150.2" r="0.9" fill="#50e0c0" opacity="0.74"/><circle cx="224.4" cy="112.6" r="1.0" fill="#30e0a0" opacity="0.86"/><circle cx="252.4" cy="27.7" r="0.7" fill="#50e0c0" opacity="0.80"/><circle cx="58.8" cy="206.7" r="1.0" fill="#60ff60" opacity="0.79"/><circle cx="63.9" cy="31.0" r="1.4" fill="#30e0a0" opacity="0.76"/><circle cx="129.2" cy="2.9" r="0.8" fill="#30e0a0" opacity="0.96"/><circle cx="139.8" cy="226.5" r="1.0" fill="#a0ff80" opacity="0.84"/><circle cx="197.4" cy="168.1" r="1.0" fill="#60ff60" opacity="0.77"/><circle cx="249.9" cy="30.6" r="1.1" fill="#50e0c0" opacity="0.75"/><circle cx="80.9" cy="153.7" r="1.1" fill="#40f080" opacity="0.79"/><circle cx="80.4" cy="189.3" r="0.6" fill="#50e0c0" opacity="0.93"/><circle cx="202.1" cy="75.0" r="1.1" fill="#a0ff80" opacity="0.92"/><circle cx="43.0" cy="202.1" r="0.8" fill="#40f080" opacity="0.75"/><circle cx="238.5" cy="129.6" r="1.2" fill="#50e0c0" opacity="0.99"/><circle cx="190.9" cy="17.0" r="0.7" fill="#30e0a0" opacity="0.84"/><circle cx="129.8" cy="201.1" r="1.0" fill="#a0ff80" opacity="0.85"/><circle cx="107.3" cy="145.1" r="1.1" fill="#30e0a0" opacity="0.80"/><circle cx="63.5" cy="182.5" r="0.7" fill="#a0ff80" opacity="0.78"/><circle cx="24.9" cy="224.5" r="1.1" fill="#60ff60" opacity="0.99"/><circle cx="40.0" cy="104.8" r="0.6" fill="#40f080" opacity="0.74"/><circle cx="167.4" cy="55.6" r="1.1" fill="#30e0a0" opacity="0.90"/><circle cx="83.2" cy="185.6" r="1.4" fill="#50e0c0" opacity="0.91"/><circle cx="31.3" cy="86.9" r="0.7" fill="#40f080" opacity="0.77"/><circle cx="232.7" cy="35.4" r="0.9" fill="#30e0a0" opacity="0.85"/><circle cx="163.9" cy="76.5" r="1.0" fill="#50e0c0" opacity="0.98"/><circle cx="244.2" cy="58.7" r="1.2" fill="#30e0a0" opacity="0.82"/><circle cx="92.9" cy="176.6" r="1.1" fill="#40f080" opacity="0.92"/><circle cx="232.0" cy="179.2" r="0.8" fill="#40f080" opacity="0.85"/><circle cx="108.0" cy="194.9" r="1.0" fill="#50e0c0" opacity="0.86"/><circle cx="112.1" cy="219.2" r="1.2" fill="#50e0c0" opacity="0.71"/><circle cx="12.3" cy="194.7" r="1.4" fill="#30e0a0" opacity="0.76"/></g>
</g></svg>

<svg class="abs" style="left:575px;top:361px" width="122" height="31" viewBox="0 0 122 31">
<defs><filter id="lb" x="-5%" y="-10%" width="110%" height="120%"><feGaussianBlur stdDeviation="0.4"/></filter></defs><g filter="url(#lb)">
<path d="M4.5 6h21v16.5q0 2-2 2.6l-8.5 3.4-8.5-3.4q-2-.6-2-2.6z" fill="#1d7a3a"/>
<path d="M8.5 19.5l1-4.5 2-2 2.5-.5 1-2.5 1.8-.5.8 2 2.5.6 1.6 2.4-.6 1.6-1.6-.6-1 2.4.6 2.6-1.4.2-.9-2.6-2.6.2-1.6 2.6-1.5-.4 1-2.8-1.6-.6-.8 2.6z" fill="#fff"/>
<circle cx="17.3" cy="8.6" r="0.9" fill="#e8e070"/>
<text x="30.0" y="17.7" textLength="11.0" lengthAdjust="spacingAndGlyphs" font-size="16.4" fill="#1b6b3a" font-weight="bold" font-family="Liberation Serif, serif">Б</text>
<text x="40.8" y="17.7" textLength="21.2" lengthAdjust="spacingAndGlyphs" font-size="13.2" fill="#1b6b3a" font-weight="bold" font-family="Liberation Serif, serif">ел</text>
<text x="44.5" y="10.4" textLength="16.5" lengthAdjust="spacingAndGlyphs" font-size="5.6" fill="#4f7f62" font-weight="bold" font-family="Liberation Serif, serif">НИУ</text>
<text x="63.5" y="17.7" textLength="28.5" lengthAdjust="spacingAndGlyphs" font-size="16.4" fill="#1b6b3a" font-weight="bold" font-family="Liberation Serif, serif">ГУ</text>
<text x="29.5" y="24.4" textLength="62.5" lengthAdjust="spacingAndGlyphs" font-size="5.6" fill="#555" font-weight="bold" font-family="Liberation Serif, serif">BELGOROD STATE</text>
<text x="29.5" y="30.2" textLength="63.5" lengthAdjust="spacingAndGlyphs" font-size="5.6" fill="#555" font-weight="bold" font-family="Liberation Serif, serif">UNIVERSITY (BSU)</text>
<text x="96.0" y="25.3" textLength="7.6" lengthAdjust="spacingAndGlyphs" font-size="11.8" fill="#5a9fbe" font-weight="normal" font-family="Liberation Sans, serif">8</text>
</g></svg>

 </div>
<svg class="abs" style="left:0;top:0" width="791" height="484" viewBox="0 0 791 484">
<defs><filter id="sb" x="-5%" y="-5%" width="110%" height="110%"><feGaussianBlur stdDeviation="0.35"/></filter><linearGradient id="sg" x1="0" y1="0" x2="0" y2="1"><stop offset="0" stop-color="#c9ccd2"/><stop offset="0.1" stop-color="#f3f4f6"/><stop offset="0.2" stop-color="#f0f1f3"/><stop offset="0.32" stop-color="#e2e4e8"/><stop offset="1" stop-color="#d4d6dc"/></linearGradient></defs>
<rect x="0" y="470.6" width="791" height="13.4" fill="url(#sg)"/>
<g filter="url(#sb)">
<path d="M786 69.2h3l-1.5-1.8z" fill="#555"/>
<path d="M785.6 443h3.4l-1.7 2z" fill="#666"/>
<rect x="784" y="447.5" width="7" height="0.7" fill="#b9bcc3"/>
<path d="M785.8 451.6l1.6-1.6 1.6 1.6zM785.8 453.6l1.6-1.6 1.6 1.6z" fill="#444"/><path d="M785.8 456.6l1.6 1.6 1.6-1.6zM785.8 458.6l1.6 1.6 1.6-1.6z" fill="#444"/>
<rect x="784.3" y="288" width="6.2" height="32" rx="1" fill="#f3f4f7" stroke="#babdc5" stroke-width="0.6"/><path d="M786 303.3h3M786 304.6h3" stroke="#9a9da6" stroke-width="0.5"/>
<rect x="661" y="473.6" width="8.8" height="9.6" fill="#f3dc78" stroke="#d9b84a" stroke-width="0.6"/><rect x="663.6" y="476" width="4" height="4.6" fill="#fbfbfb" stroke="#8a8a8a" stroke-width="0.5"/>
<path d="M673 476.3h5.5M673 478.3h5.5M673 480.3h5.5" stroke="#8a8d94" stroke-width="0.9"/>
<rect x="680.6" y="475.8" width="4.6" height="4.8" fill="none" stroke="#8a8d94" stroke-width="0.7"/><path d="M686 476v4.5" stroke="#8a8d94" stroke-width="0.6"/>
<path d="M688.8 475.8h5.6M689.8 477.6h3.6l-1.8 3z" stroke="#8a8d94" stroke-width="0.7" fill="none"/>
<text x="700" y="480.6" textLength="12.6" lengthAdjust="spacingAndGlyphs" font-size="5.6" fill="#4a4a4a" font-weight="bold" font-family="Liberation Serif, serif">138%</text>
<circle cx="720.5" cy="478.8" r="3" fill="#f4f5f7" stroke="#a9acb3" stroke-width="0.6"/><path d="M719 478.8h3" stroke="#666" stroke-width="0.7"/>
<path d="M725.5 478.8h44" stroke="#b4b7be" stroke-width="0.7"/><path d="M725.5 479.5h44" stroke="#f1f2f4" stroke-width="0.6"/>
<rect x="750" y="475.6" width="2.4" height="6.2" rx="1" fill="#f4f5f7" stroke="#a9acb3" stroke-width="0.5"/>
<circle cx="774" cy="478.8" r="3" fill="#f4f5f7" stroke="#a9acb3" stroke-width="0.6"/><path d="M772.5 478.8h3M774 477.3v3" stroke="#666" stroke-width="0.7"/>
<rect x="782.6" y="475.8" width="5.6" height="5.8" fill="#f0f1f3" stroke="#8d9097" stroke-width="0.6" stroke-dasharray="1.4 1"/>
</g></svg>

</div>
<svg class="abs" style="left:801px;top:233px" width="223" height="126" viewBox="0 0 223 126">
<defs><clipPath id="cc"><rect width="223" height="125.7"/></clipPath><filter id="cb" x="-5%" y="-5%" width="110%" height="110%"><feGaussianBlur stdDeviation="0.9"/></filter><filter id="cb2" x="-10%" y="-10%" width="120%" height="120%"><feGaussianBlur stdDeviation="2.2"/></filter><linearGradient id="hair" x1="0" y1="0" x2="1" y2="1"><stop offset="0" stop-color="#e4cf9c"/><stop offset="0.5" stop-color="#d6b478"/><stop offset="1" stop-color="#b8935c"/></linearGradient><linearGradient id="skin" x1="0" y1="0" x2="1" y2="0.3"><stop offset="0" stop-color="#e6b8a0"/><stop offset="0.55" stop-color="#dca890"/><stop offset="1" stop-color="#c48c74"/></linearGradient><linearGradient id="jk" x1="0" y1="0" x2="0.2" y2="1"><stop offset="0" stop-color="#22263a"/><stop offset="0.6" stop-color="#171925"/><stop offset="1" stop-color="#0d0e14"/></linearGradient></defs>
<g clip-path="url(#cc)"><rect width="223" height="126" fill="#e9e7dc"/><g filter="url(#cb)">
<rect x="-0.1" y="-0.1" width="62.4" height="81.5" rx="0" fill="#f6f6f4" opacity="1"/>
<path d="M-0.1 78.5 L62.3 69.1 L62.3 75.8 L-0.1 85.9Z" fill="#b8b8b4" opacity="1"/>
<path d="M-0.1 85.9 L62.3 75.8 L62.3 125.6 L-0.1 125.6Z" fill="#8c8a82" opacity="1"/>
<path d="M-0.1 105.0 L37.6 93.7 L37.6 100.5 L-0.1 113.9Z" fill="#c8ccd0" opacity="1"/>
<path d="M-0.1 113.9 L37.6 100.5 L37.6 125.6 L-0.1 125.6Z" fill="#5a5c60" opacity="1"/>
<rect x="149.8" y="-0.1" width="65.1" height="70.2" rx="0" fill="#efebdc" opacity="1"/>
<rect x="192.5" y="66.8" width="19.1" height="58.8" rx="0" fill="#b4aa9a" opacity="1"/>
<rect x="171.2" y="44.8" width="30.7" height="23.1" rx="0" fill="#3a3a3c" opacity="1"/>
<rect x="173.9" y="47.5" width="25.4" height="18.9" rx="0" fill="#cfd4d8" opacity="1"/>
<rect x="213.1" y="-0.1" width="10.8" height="70.2" rx="0" fill="#1e1e20" opacity="1"/>
<rect x="214.9" y="20.8" width="9.0" height="4.5" rx="0" fill="#5a5c60" opacity="1"/>
<rect x="210.9" y="59.0" width="13.0" height="11.2" rx="0" fill="#3a4048" opacity="1"/>
<rect x="209.3" y="70.2" width="14.6" height="55.4" rx="0" fill="#a8875a" opacity="1"/>
<rect x="209.3" y="70.2" width="4.5" height="55.4" rx="0" fill="#8c7048" opacity="1"/>
<path d="M53.8 62.3V24.2Q53.8 7.3 71.3 5.8H89.3V62.3Z" fill="#1a1a1c"/>
<path d="M61.2 60.1V26.4Q61.7 15.6 72.4 14.1H84.8V60.1Z" fill="#8e979e"/>
<rect x="62.3" y="39.9" width="22.4" height="4.9" rx="0" fill="#d6dadc" opacity="0.8"/>
<rect x="62.3" y="28.7" width="22.4" height="2.7" rx="0" fill="#c0c6ca" opacity="0.6"/>
<rect x="62.3" y="48.9" width="22.4" height="10.1" rx="0" fill="#5c666e" opacity="0.7"/>
<rect x="75.3" y="1.3" width="13.9" height="38.2" rx="0" fill="#161618" opacity="1"/>
<path d="M26.4 125.6 L34.3 100.5 L47.7 71.3 L60.1 62.3 L84.8 59.0 L100.5 69.1 L152.1 69.1 L172.3 59.0 L181.3 53.8 L192.5 59.0 L200.3 70.2 L206.0 98.2 L210.4 125.6Z" fill="url(#jk)" opacity="1"/>
<path d="M88.1 93.7 L91.5 78.0 L107.2 71.3 L152.1 71.3 L161.1 82.5 L149.8 100.5 L145.4 109.9 L117.3 109.9 L111.7 100.5Z" fill="#f2f2f0" opacity="1"/>
<path d="M111.7 100.5 L117.3 109.9 L117.3 100.5Z" fill="#c8c8c8" opacity="1"/>
<path d="M111.7 62.3 L149.8 62.3 L152.1 80.3 L138.6 96.0 L129.6 98.2 L116.2 84.8Z" fill="#cc9474" opacity="1"/>
<path d="M120.7 84.8 L134.1 100.5 L140.9 84.8Z" fill="#d8a484" opacity="1"/>
<path d="M89.3 -0.1Q84.8 21.9 87.0 46.6Q75.8 62.3 84.8 71.3Q91.5 89.3 102.7 88.1L116.2 69.1L152.1 69.1Q158.8 84.8 172.3 78.0Q183.5 66.8 174.5 51.1Q165.6 21.9 159.9 -0.1Z" fill="url(#hair)"/>
<path d="M97.1 8.5Q93.7 39.9 105.0 57.8Q120.7 72.4 138.6 69.1Q156.6 57.8 158.4 30.9Q157.7 13.0 152.1 4.0Q120.7 -0.5 97.1 8.5Z" fill="url(#skin)"/>
<path d="M89.3 -0.1H159.9Q162.2 10.7 158.4 19.7Q149.8 5.1 129.6 4.0Q107.2 5.1 98.2 15.2Q93.7 26.4 96.0 39.9Q87.0 21.9 89.3 -0.1Z" fill="#e2cb94"/>
<path d="M97.1 28.7Q93.7 53.3 107.2 69.1L113.9 71.3Q100.5 53.3 100.5 28.7Z" fill="#a87c44" opacity=".75"/>
<path d="M157.7 28.7Q161.1 53.3 152.1 70.2L159.9 73.5Q167.8 53.3 162.2 28.7Z" fill="#b08448" opacity=".7"/>
<path d="M84.8 62.3Q89.3 80.3 100.5 87.0" stroke="#b89050" stroke-width="2" fill="none" opacity=".7"/>
<ellipse cx="108.3" cy="26.4" rx="7.6" ry="2.7" fill="#3c2820" opacity="0.95" transform="rotate(8 108.3 26.4)"/>
<ellipse cx="108.3" cy="30.9" rx="9.0" ry="2.2" fill="#c89078" opacity="0.6" transform="rotate(8 108.3 30.9)"/>
<ellipse cx="138.6" cy="19.7" rx="8.1" ry="2.7" fill="#3c2820" opacity="0.95" transform="rotate(-8 138.6 19.7)"/>
<ellipse cx="139.7" cy="24.6" rx="9.0" ry="2.2" fill="#c89078" opacity="0.6" transform="rotate(-8 139.7 24.6)"/>
<ellipse cx="108.3" cy="21.9" rx="7.6" ry="1.1" fill="#8a6040" opacity="0.7" transform="rotate(10 108.3 21.9)"/>
<ellipse cx="138.6" cy="14.7" rx="8.1" ry="1.1" fill="#8a6040" opacity="0.7" transform="rotate(-10 138.6 14.7)"/>
<ellipse cx="127.0" cy="38.8" rx="4.5" ry="1.8" fill="#b07860" opacity="0.8" transform="rotate(0 127.0 38.8)"/>
<ellipse cx="129.6" cy="51.1" rx="9.4" ry="3.1" fill="#7a3434" opacity="0.95" transform="rotate(-6 129.6 51.1)"/>
<ellipse cx="129.6" cy="50.2" rx="6.7" ry="1.1" fill="#3a1c1c" opacity="0.9" transform="rotate(-6 129.6 50.2)"/>
<ellipse cx="149.8" cy="39.9" rx="4.5" ry="13.5" fill="#c08468" opacity="0.5" transform="rotate(0 149.8 39.9)"/>
</g>
<rect x="-0.1" y="109.9" width="155.5" height="16.6" rx="0" fill="#2b2b2b" opacity="0.82"/>
<g fill="#f0f0f0"><rect x="2.2" y="119.8" width="1.8" height="3.1" rx="0" fill="#f0f0f0" opacity="1"/><rect x="5.3" y="118.0" width="1.8" height="4.9" rx="0" fill="#f0f0f0" opacity="1"/><rect x="8.5" y="115.7" width="1.8" height="7.2" rx="0" fill="#f0f0f0" opacity="1"/><rect x="11.6" y="113.5" width="1.8" height="9.4" rx="0" fill="#f0f0f0" opacity="1"/></g>
<text x="17.4" y="122.2" textLength="135.1" lengthAdjust="spacingAndGlyphs" font-size="10.4" fill="#ececec" font-family="Liberation Sans, sans-serif" style="filter:blur(.25px)">Марина Юрьевна Скоркина</text>
</g></svg>

</body></html>
